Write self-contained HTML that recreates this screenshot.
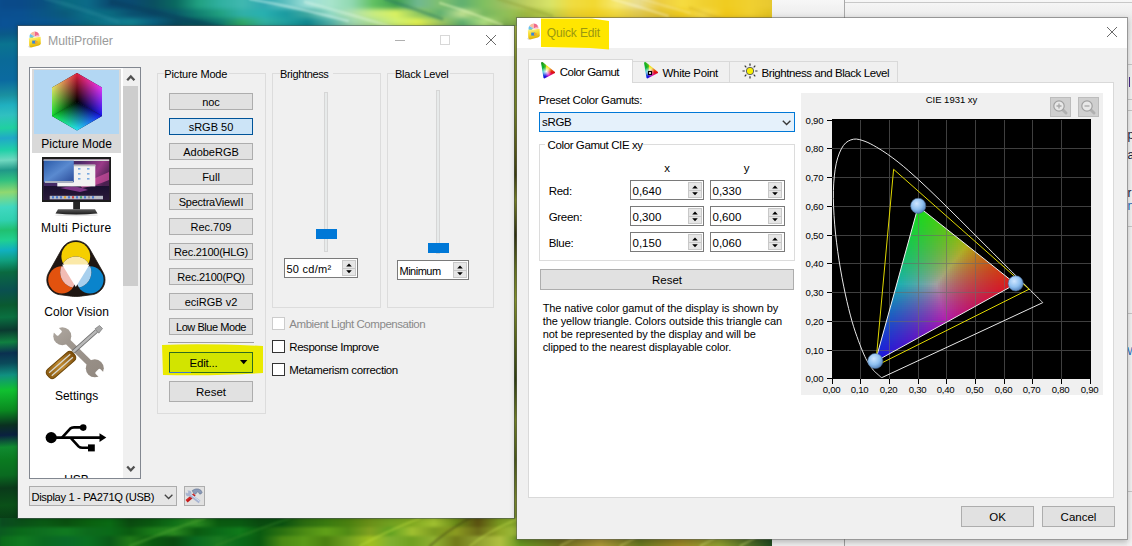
<!DOCTYPE html>
<html><head><meta charset="utf-8"><style>
html,body{margin:0;padding:0;}
body{width:1132px;height:546px;position:relative;overflow:hidden;background:#f0f0f0;font-family:"Liberation Sans", sans-serif;}
.a{position:absolute;}
.t{position:absolute;white-space:nowrap;font-family:"Liberation Sans", sans-serif;}
svg{overflow:visible;}
</style></head><body>
<svg class="a" style="left:0;top:0" width="1132" height="546"><defs><linearGradient id="wt" gradientUnits="userSpaceOnUse" x1="0" y1="13" x2="65.99" y2="-202.85"><stop offset="0.0000" stop-color="#0a4f92"/><stop offset="0.0389" stop-color="#0a5590"/><stop offset="0.0712" stop-color="#0a6082"/><stop offset="0.1036" stop-color="#0d6e84"/><stop offset="0.1295" stop-color="#0a5a7a"/><stop offset="0.1554" stop-color="#0a5074"/><stop offset="0.1878" stop-color="#0a4a66"/><stop offset="0.2202" stop-color="#0b5a68"/><stop offset="0.2461" stop-color="#108070"/><stop offset="0.2720" stop-color="#18a07a"/><stop offset="0.2915" stop-color="#22a88a"/><stop offset="0.3135" stop-color="#30b0a8"/><stop offset="0.3394" stop-color="#28b0b0"/><stop offset="0.3653" stop-color="#1e9ea0"/><stop offset="0.3886" stop-color="#44b2a8"/><stop offset="0.4093" stop-color="#84d2c2"/><stop offset="0.4301" stop-color="#98dcc4"/><stop offset="0.4482" stop-color="#c4ecc4"/><stop offset="0.4689" stop-color="#a8e092"/><stop offset="0.4922" stop-color="#c8ec72"/><stop offset="0.5130" stop-color="#e0f062"/><stop offset="0.5311" stop-color="#c2e062"/><stop offset="0.5505" stop-color="#70b872"/><stop offset="0.5699" stop-color="#68b690"/><stop offset="0.5894" stop-color="#a8d872"/><stop offset="0.6088" stop-color="#72b052"/><stop offset="0.6347" stop-color="#90c052"/><stop offset="0.6606" stop-color="#b0c84a"/><stop offset="0.6865" stop-color="#c8d052"/><stop offset="0.7098" stop-color="#dce070"/><stop offset="0.7254" stop-color="#d8e058"/><stop offset="0.7448" stop-color="#f0e040"/><stop offset="0.7772" stop-color="#f0d832"/><stop offset="0.8135" stop-color="#f0e060"/><stop offset="0.8355" stop-color="#e8e080"/><stop offset="0.8575" stop-color="#e4c842"/><stop offset="0.8938" stop-color="#f6e050"/><stop offset="0.9326" stop-color="#f0d020"/><stop offset="0.9715" stop-color="#f2d634"/><stop offset="1.0000" stop-color="#e0c020"/></linearGradient><linearGradient id="wl" gradientUnits="userSpaceOnUse" x1="9" y1="26" x2="34.71" y2="516.65"><stop offset="0.0000" stop-color="#0a5294"/><stop offset="0.0163" stop-color="#0a5a88"/><stop offset="0.0366" stop-color="#0a7490"/><stop offset="0.0691" stop-color="#0a6a98"/><stop offset="0.1098" stop-color="#0b6aa0"/><stop offset="0.1402" stop-color="#1a90a0"/><stop offset="0.1606" stop-color="#20b0c0"/><stop offset="0.1809" stop-color="#30c0c0"/><stop offset="0.2073" stop-color="#20d0a0"/><stop offset="0.2276" stop-color="#20a8c8"/><stop offset="0.2520" stop-color="#20d0a8"/><stop offset="0.2724" stop-color="#70d8c0"/><stop offset="0.2927" stop-color="#209888"/><stop offset="0.3130" stop-color="#30c080"/><stop offset="0.3374" stop-color="#90d870"/><stop offset="0.3679" stop-color="#40d8c0"/><stop offset="0.3943" stop-color="#30d0b0"/><stop offset="0.4146" stop-color="#20c070"/><stop offset="0.4350" stop-color="#20d090"/><stop offset="0.4553" stop-color="#10b0c0"/><stop offset="0.4756" stop-color="#10a080"/><stop offset="0.5000" stop-color="#0a6a40"/><stop offset="0.5366" stop-color="#0a5050"/><stop offset="0.5671" stop-color="#0a5a30"/><stop offset="0.5915" stop-color="#0a7040"/><stop offset="0.6179" stop-color="#0a3a30"/><stop offset="0.6423" stop-color="#108040"/><stop offset="0.6646" stop-color="#0a3050"/><stop offset="0.6850" stop-color="#0a4a5a"/><stop offset="0.7093" stop-color="#109080"/><stop offset="0.7398" stop-color="#10c030"/><stop offset="0.7805" stop-color="#0a8a20"/><stop offset="0.8110" stop-color="#0a3020"/><stop offset="0.8313" stop-color="#0a2040"/><stop offset="0.8557" stop-color="#108a30"/><stop offset="0.8821" stop-color="#0a7a20"/><stop offset="0.9126" stop-color="#0a6a20"/><stop offset="0.9390" stop-color="#0a3a1a"/><stop offset="0.9736" stop-color="#0a5018"/><stop offset="1.0000" stop-color="#083e16"/></linearGradient><linearGradient id="wb" gradientUnits="userSpaceOnUse" x1="0" y1="530" x2="193.00" y2="864.29"><stop offset="0.0000" stop-color="#083e16"/><stop offset="0.0518" stop-color="#0a5a1a"/><stop offset="0.1036" stop-color="#0e6a1e"/><stop offset="0.1425" stop-color="#0a4a12"/><stop offset="0.1943" stop-color="#0a5212"/><stop offset="0.2267" stop-color="#1e7a1a"/><stop offset="0.2591" stop-color="#0a4210"/><stop offset="0.2979" stop-color="#0a5010"/><stop offset="0.3238" stop-color="#146014"/><stop offset="0.3756" stop-color="#2a6a10"/><stop offset="0.4275" stop-color="#5a9a18"/><stop offset="0.4793" stop-color="#7aaa20"/><stop offset="0.5181" stop-color="#a0c020"/><stop offset="0.5570" stop-color="#70a020"/><stop offset="0.5959" stop-color="#a0b820"/><stop offset="0.6282" stop-color="#4a4a10"/><stop offset="0.6541" stop-color="#8ab020"/><stop offset="0.6865" stop-color="#70a020"/><stop offset="0.7254" stop-color="#807020"/><stop offset="0.7772" stop-color="#a09030"/><stop offset="0.8290" stop-color="#506a20"/><stop offset="0.8808" stop-color="#a08a28"/><stop offset="0.9326" stop-color="#90a030"/><stop offset="0.9845" stop-color="#405a20"/><stop offset="1.0000" stop-color="#204020"/></linearGradient><linearGradient id="wm" gradientUnits="userSpaceOnUse" x1="515" y1="26" x2="515.00" y2="540.00"><stop offset="0.0000" stop-color="#b8c848"/><stop offset="0.0661" stop-color="#98a830"/><stop offset="0.1634" stop-color="#8a9a28"/><stop offset="0.2412" stop-color="#6a6a18"/><stop offset="0.2899" stop-color="#4a4a10"/><stop offset="0.3385" stop-color="#909a28"/><stop offset="0.4066" stop-color="#3a3a10"/><stop offset="0.4747" stop-color="#7a8a20"/><stop offset="0.5331" stop-color="#a0b030"/><stop offset="0.6109" stop-color="#6a7a18"/><stop offset="0.6887" stop-color="#3a4a10"/><stop offset="0.7665" stop-color="#8a9a28"/><stop offset="0.8444" stop-color="#5a6a18"/><stop offset="0.9222" stop-color="#90a030"/><stop offset="1.0000" stop-color="#7a9a28"/></linearGradient><linearGradient id="wts" gradientUnits="userSpaceOnUse" x1="0" y1="13" x2="47" y2="-174" spreadMethod="repeat"><stop offset="0" stop-color="#fff" stop-opacity="0"/><stop offset=".45" stop-color="#fff" stop-opacity="0"/><stop offset=".5" stop-color="#fff" stop-opacity=".18"/><stop offset=".55" stop-color="#fff" stop-opacity="0"/><stop offset="1" stop-color="#fff" stop-opacity="0"/></linearGradient></defs><rect x="0" y="26" width="18" height="492" fill="url(#wl)"/><rect x="510" y="518" width="10" height="22" fill="url(#wb)"/><rect x="510" y="26" width="10" height="492" fill="url(#wm)"/></svg>
<div class="a" style="left:0;top:0;width:772px;height:26px;overflow:hidden"><div class="a" style="left:-10px;top:-10px;width:792px;height:50px;filter:blur(2px)">
<div class="a" style="left:10px;top:0;width:772px;height:18.5px;background:linear-gradient(90deg,#0a4a8a 0px,#0a4a88 22px,#0a5080 44px,#0a6a80 66px,#0b6a88 88px,#0a4a70 110px,#0a4a70 132px,#0a5060 154px,#0a6a60 176px,#20a080 198px,#30b0a0 220px,#40b8b0 242px,#30a8b0 264px,#60c0c0 286px,#a0e0d8 308px,#a8e4cc 330px,#90d8b0 352px,#60c060 374px,#40a050 396px,#70b890 418px,#80c070 440px,#60b070 462px,#80c060 484px,#a0c060 506px,#c0d060 528px,#d8e468 550px,#f0dc40 572px,#f2d830 594px,#f6e870 616px,#e8dc90 638px,#eccc40 660px,#f6dc40 682px,#f0d030 704px,#f0cc20 726px,#f0d030 750px,#e8c830 772px)"></div>
<div class="a" style="left:10px;top:18.5px;width:772px;height:9px;background:linear-gradient(90deg,#0a4f90 0px,#0a5090 22px,#0a5585 44px,#0a5a7a 66px,#0b7088 88px,#0a6a80 110px,#0a5070 132px,#0a4a68 154px,#0a5a68 176px,#108070 198px,#20a080 220px,#30b0a8 242px,#28b0b0 264px,#1a9aa0 286px,#40a8a0 308px,#90d8c4 330px,#b0e0b0 352px,#c8ec80 374px,#d8f060 396px,#90c860 418px,#60b070 440px,#c0e090 462px,#78b860 484px,#90c058 506px,#a0b840 528px,#c0d050 550px,#e8d030 572px,#f0d020 594px,#f0d840 616px,#e0c850 638px,#e0c030 660px,#f0cc20 682px,#f6dc50 704px,#f0c818 726px,#f0d030 750px,#e0c020 772px)"></div>
<div class="a" style="left:10px;top:27.5px;width:772px;height:22.5px;background:linear-gradient(90deg,#0a5296 0px,#0a5292 22px,#0a5590 44px,#0a5a88 66px,#0a6a80 88px,#107a90 110px,#108090 132px,#0a6080 154px,#0a4a60 176px,#0a5a60 198px,#107a70 220px,#30a868 242px,#30b0a0 264px,#20a0a0 286px,#108890 308px,#50b0a8 330px,#a0d8b0 352px,#b0e090 374px,#d0f070 396px,#e0f050 418px,#a0c860 440px,#60b070 462px,#b0e080 484px,#80b050 506px,#a0c050 528px,#b0c040 550px,#e0c830 572px,#f0d020 594px,#f0cc20 616px,#e8c830 638px,#d8b830 660px,#e0b820 682px,#f0c820 704px,#f0c818 726px,#e8c018 750px,#d8b818 772px)"></div>
<div class="a" style="left:0;top:0;width:10px;height:50px;background:#0a4f90"></div>
<div class="a" style="left:782px;top:0;width:10px;height:50px;background:#e0c830"></div>
</div></div>
<svg class="a" style="left:0;top:0;filter:blur(0.9px)" width="772" height="26" viewBox="0 0 772 26">
<g fill="none" stroke-linecap="round">
<path d="M45 -2 Q80 8 118 22" stroke="#2a8a9a" stroke-width="4" opacity=".35"/>
<path d="M112 2 Q160 14 222 28" stroke="#083a58" stroke-width="5" opacity=".35"/>
<path d="M250 -1 Q300 8 348 21" stroke="#e8fff8" stroke-width="2" opacity=".55"/>
<path d="M305 2 Q350 14 395 28" stroke="#f0fff0" stroke-width="2.5" opacity=".35"/>
<path d="M385 -1 Q412 8 442 19" stroke="#2a7a60" stroke-width="3" opacity=".45"/>
<path d="M440 3 Q470 12 502 25" stroke="#f0ffc0" stroke-width="2" opacity=".5"/>
<path d="M498 -1 Q525 7 552 16" stroke="#8a9a30" stroke-width="3" opacity=".35"/>
<path d="M612 -1 Q640 7 668 16" stroke="#fffff0" stroke-width="2" opacity=".4"/>
<path d="M642 -1 Q665 6 690 13" stroke="#fffff0" stroke-width="1.5" opacity=".3"/>
<path d="M690 8 Q720 18 750 30" stroke="#c8a010" stroke-width="3" opacity=".25"/>
</g></svg>
<div class="a" style="left:0;top:518px;width:772px;height:28px;overflow:hidden"><div class="a" style="left:-10px;top:-10px;width:792px;height:50px;filter:blur(1.8px)">
<div class="a" style="left:10px;top:0;width:772px;height:18.5px;background:linear-gradient(90deg,#0a4a20 0px,#0a5018 22px,#0a5a14 44px,#0a5010 66px,#0a6010 88px,#0a6a14 110px,#0a4a10 130px,#0a5810 152px,#107018 174px,#2a8a20 196px,#0a5a10 218px,#0a5a12 240px,#0a4a10 260px,#0a5010 282px,#2a6a10 304px,#3a7a10 326px,#4a8010 348px,#6a9018 370px,#70a020 390px,#80a820 412px,#a0c030 434px,#6a8a18 456px,#5a5010 478px,#7a9a20 500px,#90b030 520px,#707a20 560px,#a08a30 600px,#6a7a20 640px,#a09030 680px,#90a030 720px,#3a6a28 772px)"></div>
<div class="a" style="left:10px;top:18.5px;width:772px;height:9px;background:linear-gradient(90deg,#0a5a20 0px,#0a6a1a 22px,#0e7020 44px,#107a20 66px,#0c6a1c 88px,#0a6a18 110px,#0a5a10 130px,#1a7a18 152px,#2a8a20 174px,#0a5a10 196px,#0a6a18 218px,#107a1a 240px,#0a5a10 260px,#2a7010 282px,#4a8a14 304px,#60a018 326px,#508a14 348px,#80a020 370px,#60a020 390px,#a0c030 412px,#7a9a20 434px,#8a9a20 456px,#6a6a18 478px,#90a828 500px,#a0c040 520px,#807a20 560px,#a09030 600px,#7a8a28 640px,#b09a30 680px,#a0a830 720px,#2a5a28 772px)"></div>
<div class="a" style="left:10px;top:27.5px;width:772px;height:22.5px;background:linear-gradient(90deg,#0a6a1a 0px,#107a20 22px,#0a6a20 44px,#0a6a28 66px,#0a7020 88px,#0a5a18 110px,#207a18 130px,#0a5a10 152px,#0a4a10 174px,#0a6a20 196px,#1a7a20 218px,#0a6a18 240px,#0a5a10 260px,#4a8a14 282px,#5a9a18 304px,#4a8010 326px,#70a020 348px,#a0c020 370px,#80b030 390px,#70a020 412px,#90b030 434px,#707a18 456px,#90a030 478px,#b0c040 500px,#6a9a20 520px,#707020 560px,#b09a38 600px,#6a7a20 640px,#a08a28 680px,#90a030 720px,#204a20 772px)"></div>
<div class="a" style="left:0;top:0;width:10px;height:50px;background:#0a5a20"></div>
<div class="a" style="left:782px;top:0;width:10px;height:50px;background:#2a5a28"></div>
</div></div>
<svg class="a" style="left:0;top:518px;filter:blur(0.8px)" width="772" height="28" viewBox="0 518 772 28">
<g fill="none" stroke-linecap="round">
<path d="M130 546 Q165 532 205 518" stroke="#4aa030" stroke-width="2.5" opacity=".5"/>
<path d="M215 546 Q250 532 290 518" stroke="#3a8a28" stroke-width="2" opacity=".4"/>
<path d="M360 546 Q385 532 420 518" stroke="#c0e040" stroke-width="2" opacity=".45"/>
<path d="M430 546 Q445 532 470 518" stroke="#3a3a10" stroke-width="2.5" opacity=".4"/>
<path d="M470 546 Q490 530 520 518" stroke="#c8e050" stroke-width="2" opacity=".4"/>
<path d="M560 546 L575 538" stroke="#e0e070" stroke-width="1.5" opacity=".5"/>
<path d="M620 546 L635 538" stroke="#e0e070" stroke-width="1.5" opacity=".5"/>
<path d="M700 546 L715 538" stroke="#e0f080" stroke-width="1.5" opacity=".5"/>
<path d="M740 546 L755 538" stroke="#e0f080" stroke-width="1.5" opacity=".5"/>
</g></svg>
<div class="a" style="left:772px;top:0px;width:360px;height:546px;background:linear-gradient(180deg,#f7f7f7 0px,#ececec 17px,#f0f0f0 40px,#f0f0f0 546px);"></div>
<div class="a" style="left:844px;top:0px;width:1px;height:30px;background:#a8a8a8;"></div>
<div class="a" style="left:845px;top:2px;width:287px;height:1px;background:#c8c8c8;"></div>
<div class="a" style="left:1127px;top:40px;width:5px;height:506px;background:#f3f3f3;"></div>
<div class="a" style="left:1128px;top:64px;width:4px;height:1px;background:#c8c8c8;"></div>
<div class="a" style="left:1128px;top:99px;width:4px;height:1px;background:#c8c8c8;"></div>
<div class="a" style="left:1128px;top:110px;width:4px;height:1px;background:#c8c8c8;"></div>
<div class="a" style="left:1128px;top:226px;width:4px;height:1px;background:#c8c8c8;"></div>
<div class="a" style="left:1128px;top:313px;width:4px;height:1px;background:#c8c8c8;"></div>
<div class="a" style="left:1128px;top:491px;width:4px;height:1px;background:#c8c8c8;"></div>
<div class="a" style="left:1129px;top:77px;width:1px;height:10px;background:#4a2a8a;"></div>
<div class="a" style="left:1128px;top:120px;width:4px;height:100px;overflow:hidden"><div class="t" style="left:-0.5px;top:7.94px;font-size:12px;line-height:14px;color:#1a2040;">p</div><div class="t" style="left:-0.5px;top:27.94px;font-size:12px;line-height:14px;color:#1a2040;">a</div><div class="t" style="left:-0.5px;top:65.94px;font-size:12px;line-height:14px;color:#1a2040;">r</div><div class="t" style="left:-0.5px;top:78.94px;font-size:12px;line-height:14px;color:#1a6ac0;">n</div></div>
<div class="a" style="left:1128px;top:345px;width:4px;height:13px;overflow:hidden"><div class="t" style="left:-1px;top:0;font-size:11px;line-height:12px;color:#1a6ac0">W</div></div>
<div class="a" style="left:844px;top:530px;width:1px;height:16px;background:#a0a0a0;"></div>
<div class="a" style="left:17px;top:25px;width:498px;height:494px;background:rgba(70,80,80,.6);box-shadow:0 0 4px rgba(0,0,0,.2);"></div>
<div class="a" style="left:18px;top:26px;width:496px;height:492px;background:#f0f0f0;"></div>
<div class="a" style="left:18px;top:26px;width:496px;height:30px;background:#ffffff;"></div>
<svg class="a" style="left:27px;top:31px" width="15" height="17" viewBox="0 0 15 17">
<defs><linearGradient id="fy27" x1="0" y1="0" x2="0.3" y2="1"><stop offset="0" stop-color="#fff59a"/><stop offset=".5" stop-color="#f8dc30"/><stop offset="1" stop-color="#e0b000"/></linearGradient></defs>
<path d="M7.5 5.5 L7.5 0.5 A5 5 0 0 1 12.2 3.6Z" fill="#f06a8a"/>
<path d="M7.5 5.5 L12.2 3.6 A5 5 0 0 1 12.5 5.5Z" fill="#f8a0b0"/>
<path d="M7.5 5.5 L7.5 0.5 A5 5 0 0 0 3.2 3Z" fill="#f8c0a0"/>
<path d="M7.5 5.5 L3.2 3 A5 5 0 0 0 2.6 6.5Z" fill="#6ac0f0"/>
<path d="M7.5 5.5 L2.6 6.5 A5 5 0 0 0 3.5 8.5Z" fill="#80d080"/>
<path d="M1.8 7.2 L13.6 5.8 L13.8 12.6 Q13.6 14 11.8 14.6 L4.2 16.4 Q2.6 16.6 2.3 15Z" fill="url(#fy27)"/>
<path d="M2.3 15 Q2.6 16.6 4.2 16.4 L3 16.8 Q1.2 16.6 1.4 15.2Z" fill="#b0b0b0" opacity=".6"/>
<rect x="5.2" y="9.6" width="4" height="3" fill="#3a86d8"/><rect x="8" y="10" width="2.6" height="2.6" fill="#f0a828"/>
</svg>
<div class="t" style="left:48px;top:34.34px;font-size:12.3px;line-height:14px;color:#9a9a9a;">MultiProfiler</div>
<div class="a" style="left:395px;top:40px;width:10px;height:1px;background:#b0b0b0;"></div>
<div class="a" style="left:440px;top:35px;width:10px;height:10px;border:1px solid #d8d8d8;box-sizing:border-box;"></div>
<svg class="a" style="left:486px;top:35px" width="10" height="10"><path d="M0 0L10 10M10 0L0 10" stroke="#6a6a6a" stroke-width="1"/></svg>
<div class="a" style="left:29px;top:67px;width:112px;height:412px;background:#fff;border:1px solid #828790;box-sizing:border-box;"></div>
<div class="a" style="left:123px;top:68px;width:17px;height:410px;background:#f0f0f0;"></div>
<div class="a" style="left:123px;top:86px;width:15px;height:200px;background:#cdcdcd;"></div>
<svg class="a" style="left:126px;top:74px" width="10" height="8"><path d="M1.2 6.2L4.8 2.4L8.4 6.2" stroke="#505050" stroke-width="2.3" fill="none"/></svg>
<svg class="a" style="left:126px;top:465px" width="10" height="8"><path d="M1.2 1.4L4.8 5.4L8.4 1.4" stroke="#505050" stroke-width="2.3" fill="none"/></svg>
<div class="a" style="left:32px;top:69px;width:89px;height:84px;background:#d9d9d9;"></div>
<div class="a" style="left:34px;top:70px;width:85px;height:64px;background:#b3d7f3;"></div>
<svg class="a" style="left:0;top:0" width="140" height="140"><defs><linearGradient id="hx1" gradientUnits="userSpaceOnUse" x1="77.00" y1="101.75" x2="64.58" y2="80.14"><stop offset="0" stop-color="#000"/><stop offset="1" stop-color="#e02040"/></linearGradient><linearGradient id="hx2" gradientUnits="userSpaceOnUse" x1="77.00" y1="101.75" x2="52.00" y2="101.75"><stop offset="0" stop-color="#000"/><stop offset="1" stop-color="#10e030"/></linearGradient><linearGradient id="hx3" gradientUnits="userSpaceOnUse" x1="77.00" y1="101.75" x2="89.42" y2="80.14"><stop offset="0" stop-color="#000"/><stop offset="1" stop-color="#e02040"/></linearGradient><linearGradient id="hx4" gradientUnits="userSpaceOnUse" x1="77.00" y1="101.75" x2="102.00" y2="101.75"><stop offset="0" stop-color="#000"/><stop offset="1" stop-color="#1818f0"/></linearGradient><linearGradient id="hx5" gradientUnits="userSpaceOnUse" x1="77.00" y1="101.75" x2="64.58" y2="123.36"><stop offset="0" stop-color="#000"/><stop offset="1" stop-color="#10e030"/></linearGradient><linearGradient id="hx6" gradientUnits="userSpaceOnUse" x1="77.00" y1="101.75" x2="89.42" y2="123.36"><stop offset="0" stop-color="#000"/><stop offset="1" stop-color="#1818f0"/></linearGradient></defs><g style="isolation:isolate"><polygon points="77.00,101.75 77.00,73.00 52.00,87.38 52.00,116.12" fill="url(#hx1)"/><polygon points="77.00,101.75 77.00,73.00 52.00,87.38 52.00,116.12" fill="url(#hx2)" style="mix-blend-mode:screen"/><polygon points="77.00,101.75 77.00,73.00 102.00,87.38 102.00,116.12" fill="url(#hx3)"/><polygon points="77.00,101.75 77.00,73.00 102.00,87.38 102.00,116.12" fill="url(#hx4)" style="mix-blend-mode:screen"/><polygon points="77.00,101.75 52.00,116.12 77.00,130.50 102.00,116.12" fill="url(#hx5)"/><polygon points="77.00,101.75 52.00,116.12 77.00,130.50 102.00,116.12" fill="url(#hx6)" style="mix-blend-mode:screen"/></g></svg>
<div class="t" style="left:26.599999999999994px;width:100px;text-align:center;top:136.94px;font-size:12px;line-height:14px;color:#000;">Picture Mode</div>
<svg class="a" style="left:38px;top:153px" width="76" height="64" viewBox="38 153 76 64">
<defs>
<linearGradient id="mbg" x1="0" y1="0" x2="1" y2="0.4"><stop offset="0" stop-color="#3a2a60"/><stop offset=".5" stop-color="#4a2a68"/><stop offset=".8" stop-color="#9a3a88"/><stop offset="1" stop-color="#4a2050"/></linearGradient>
<linearGradient id="mbl" x1="0" y1="0" x2="1" y2="1"><stop offset="0" stop-color="#2a5aa8"/><stop offset=".5" stop-color="#5a8ad0"/><stop offset="1" stop-color="#2a4a98"/></linearGradient>
<linearGradient id="mdk" x1="0" y1="0" x2="0" y2="1"><stop offset="0" stop-color="#1a1030"/><stop offset="1" stop-color="#2a1a3a"/></linearGradient>
<linearGradient id="mbase" x1="0" y1="0" x2="0" y2="1"><stop offset="0" stop-color="#5a5a5a"/><stop offset="1" stop-color="#1a1a1a"/></linearGradient>
</defs>
<rect x="42" y="157" width="69" height="45" fill="#1c1c1c"/>
<rect x="43.6" y="159.4" width="65.6" height="40.5" fill="url(#mbg)"/>
<rect x="43.6" y="186" width="65.6" height="14" fill="url(#mdk)"/>
<path d="M80 185 Q95 178 109 172 L109 180 Q95 186 82 188Z" fill="#d050a0" opacity=".7"/>
<path d="M60 188 Q75 184 88 190 L80 192Z" fill="#c050c0" opacity=".6"/>
<rect x="43.6" y="159.4" width="65.6" height="1.6" fill="#d8d8d8"/>
<rect x="57.3" y="164.7" width="38" height="21.7" fill="#f2f2f2"/>
<rect x="73.8" y="164.7" width="21.6" height="1.6" fill="#b8b8b8"/>
<g fill="#7aaae0"><rect x="78" y="168" width="2.5" height="1.6"/><rect x="87" y="168" width="2.5" height="1.6"/><rect x="78" y="173" width="2.5" height="1.6"/><rect x="87" y="173" width="2.5" height="1.6"/><rect x="78" y="178" width="2.5" height="1.6"/><rect x="87" y="178" width="2.5" height="1.6"/></g>
<rect x="43.9" y="160.6" width="29.9" height="21.7" fill="url(#mbl)"/>
<rect x="45" y="181" width="28" height="2" fill="#a8b0c0"/>
<rect x="49.7" y="195.8" width="53.3" height="3.5" fill="#b8bcc8"/>
<g fill="#4a7ad0"><rect x="52" y="196.2" width="2" height="2.2"/><rect x="56" y="196.2" width="2" height="2.2"/><rect x="60" y="196.2" width="2" height="2.2"/><rect x="64" y="196.2" width="2" height="2.2" fill="#e0a030"/><rect x="68" y="196.2" width="2" height="2.2"/><rect x="72" y="196.2" width="2" height="2.2" fill="#d04040"/><rect x="76" y="196.2" width="2" height="2.2"/><rect x="80" y="196.2" width="2" height="2.2" fill="#40a060"/><rect x="84" y="196.2" width="2" height="2.2"/><rect x="88" y="196.2" width="2" height="2.2" fill="#909090"/><rect x="92" y="196.2" width="2" height="2.2"/><rect x="96" y="196.2" width="2" height="2.2" fill="#c0c0c0"/></g>
<rect x="73.2" y="201.7" width="6.8" height="7.8" fill="#262626"/>
<path d="M58 209.3 L95 209.3 L97.5 213.5 Q76 215.5 55.5 213.5Z" fill="url(#mbase)"/>
<ellipse cx="76.5" cy="215" rx="22" ry="1.2" fill="#000" opacity=".12"/>
</svg>
<div class="t" style="left:26.299999999999997px;width:100px;text-align:center;top:221.14px;font-size:12px;line-height:14px;color:#000;letter-spacing:0.35px;">Multi Picture</div>
<svg class="a" style="left:0;top:0" width="140" height="320"><defs><clipPath id="cvc"><circle cx="75.8" cy="272.2" r="15.6"/></clipPath></defs><polygon points="46.8,279.8 46.9,278.5 47.0,277.2 47.3,275.9 47.7,274.7 48.2,273.5 48.8,272.3 62.1,248.6 62.9,247.4 63.7,246.3 64.6,245.3 65.6,244.4 66.7,243.6 67.9,242.8 69.1,242.2 70.4,241.7 71.7,241.2 73.1,240.9 74.4,240.8 75.8,240.7 77.2,240.8 78.5,240.9 79.9,241.2 81.2,241.7 82.5,242.2 83.7,242.8 84.9,243.6 86.0,244.4 87.0,245.3 87.9,246.3 88.7,247.4 89.5,248.6 103.0,272.3 103.6,273.5 104.1,274.7 104.5,275.9 104.8,277.2 104.9,278.5 105.0,279.8 104.9,281.1 104.8,282.4 104.5,283.7 104.1,284.9 103.6,286.1 103.0,287.3 102.3,288.4 101.5,289.4 100.6,290.4 99.6,291.3 98.6,292.1 97.5,292.8 96.3,293.4 95.1,293.9 93.9,294.3 92.6,294.6 82.6,295.9 80.4,296.2 78.2,296.4 75.9,296.4 73.6,296.4 71.4,296.2 69.2,295.9 59.2,294.6 57.9,294.3 56.7,293.9 55.5,293.4 54.3,292.8 53.2,292.1 52.2,291.3 51.2,290.4 50.3,289.4 49.5,288.4 48.8,287.3 48.2,286.1 47.7,284.9 47.3,283.7 47.0,282.4 46.9,281.1" fill="#1e1612" stroke="#1e1612" stroke-width="0.8" stroke-linejoin="round"/><circle cx="75.8" cy="256.5" r="14.4" fill="#f5cf00"/><circle cx="61.8" cy="279.8" r="13.6" fill="#e2520e"/><circle cx="90.0" cy="279.8" r="13.6" fill="#0a84cc"/><g clip-path="url(#cvc)"><rect x="55" y="250" width="42" height="45" fill="#1e1612"/><circle cx="75.8" cy="256.5" r="14.4" fill="#fbe9a8"/><circle cx="61.8" cy="279.8" r="13.6" fill="#f2bcb4"/><circle cx="90.0" cy="279.8" r="13.6" fill="#a8d0ee"/><path d="M62 264.4 L89.6 264.4 L75.8 287Z" fill="#fff"/></g></svg>
<div class="t" style="left:26.599999999999994px;width:100px;text-align:center;top:305.34px;font-size:12px;line-height:14px;color:#000;">Color Vision</div>
<svg class="a" style="left:0;top:300px" width="140" height="100" viewBox="0 300 140 100">
<defs>
<linearGradient id="wrg" x1="0" y1="0" x2="1" y2="1"><stop offset="0" stop-color="#d8d4ce"/><stop offset=".45" stop-color="#a09890"/><stop offset="1" stop-color="#857b72"/></linearGradient>
<mask id="wmask" maskUnits="userSpaceOnUse" x="0" y="300" width="140" height="100">
<rect x="0" y="300" width="140" height="100" fill="#000"/>
<path d="M62.5 336.5 L94.5 368" stroke="#fff" stroke-width="6.2"/>
<circle cx="62.3" cy="336.2" r="9" fill="#fff"/>
<circle cx="94.8" cy="368.3" r="9" fill="#fff"/>
<g transform="rotate(-45 62.3 336.2)"><rect x="58.9" y="324" width="6.8" height="9" rx="1.5" fill="#000"/></g>
<g transform="rotate(-45 94.8 368.3)"><rect x="91.4" y="371.5" width="6.8" height="9" rx="1.5" fill="#000"/></g>
</mask>
<linearGradient id="hdg" x1="0" y1="0" x2="1" y2="0"><stop offset="0" stop-color="#8a5a10"/><stop offset=".5" stop-color="#c08a30"/><stop offset="1" stop-color="#7a4a08"/></linearGradient>
</defs>
<rect x="0" y="300" width="140" height="100" fill="url(#wrg)" mask="url(#wmask)"/>
<path d="M73 352 L96.5 331" stroke="#6a6a6a" stroke-width="4.2"/>
<path d="M73 352 L96.5 331" stroke="#b8b8b8" stroke-width="2.4"/>
<path d="M95 328.8 L99.5 325.5 L102.5 328.5 L98.8 333.2Z" fill="#a8a8a8" stroke="#6a6a6a" stroke-width=".6"/>
<g transform="rotate(-41 61 365)">
<rect x="44" y="359.5" width="34" height="11" rx="4" fill="url(#hdg)" stroke="#6a4408" stroke-width="1"/>
<path d="M47 363 H75 M47 367 H75" stroke="#d8d8d0" stroke-width="1.3"/>
</g>
</svg>
<div class="t" style="left:26.599999999999994px;width:100px;text-align:center;top:388.64px;font-size:12px;line-height:14px;color:#000;">Settings</div>
<svg class="a" style="left:44px;top:422px" width="66" height="32" viewBox="0 0 66 32">
<circle cx="7.2" cy="15.6" r="5.6" fill="#000"/>
<path d="M7 15.6 L58 15.6" stroke="#000" stroke-width="2.7"/>
<path d="M55.5 11.2 L62.3 15.6 L55.5 20Z" fill="#000"/>
<path d="M18 15.6 L26 6.8 Q27.5 5.4 30 5.4 L39 5.4" stroke="#000" stroke-width="2.6" fill="none"/>
<circle cx="39.2" cy="5.6" r="3.3" fill="#000"/>
<path d="M26.5 15.6 L34.5 24.3 Q36 25.8 38.5 25.8 L45 25.8" stroke="#000" stroke-width="2.6" fill="none"/>
<rect x="44" y="22.4" width="6.8" height="7" fill="#000"/>
</svg>
<div class="a" style="left:30px;top:470px;width:93px;height:8px;overflow:hidden"><div class="t" style="left:0;width:93px;text-align:center;top:3px;font-size:12px;line-height:14px;color:#000">USB</div></div>
<div class="a" style="left:157px;top:73px;width:109px;height:341px;border:1px solid #dcdcdc;box-sizing:border-box;"></div><div class="a" style="left:163.5px;top:71px;width:65.5px;height:4px;background:#f0f0f0;"></div>
<div class="t" style="left:164.3px;top:68.29px;font-size:11px;line-height:13px;color:#000;letter-spacing:-0.15px;">Picture Mode</div>
<div class="a" style="left:169px;top:93px;width:84px;height:17px;background:#e1e1e1;border:1px solid #adadad;box-sizing:border-box;"></div><div class="t" style="left:169.0px;width:84px;text-align:center;top:95.79px;font-size:11px;line-height:13px;color:#000;">noc</div>
<div class="a" style="left:169px;top:118px;width:84px;height:17px;background:#cce4f7;border:1px solid #005499;box-sizing:border-box;"></div><div class="t" style="left:169.0px;width:84px;text-align:center;top:120.79px;font-size:11px;line-height:13px;color:#000;">sRGB 50</div>
<div class="a" style="left:169px;top:143px;width:84px;height:17px;background:#e1e1e1;border:1px solid #adadad;box-sizing:border-box;"></div><div class="t" style="left:169.0px;width:84px;text-align:center;top:145.79px;font-size:11px;line-height:13px;color:#000;">AdobeRGB</div>
<div class="a" style="left:169px;top:168px;width:84px;height:17px;background:#e1e1e1;border:1px solid #adadad;box-sizing:border-box;"></div><div class="t" style="left:169.0px;width:84px;text-align:center;top:170.79px;font-size:11px;line-height:13px;color:#000;">Full</div>
<div class="a" style="left:169px;top:193px;width:84px;height:17px;background:#e1e1e1;border:1px solid #adadad;box-sizing:border-box;"></div><div class="t" style="left:169.0px;width:84px;text-align:center;top:195.79px;font-size:11px;line-height:13px;color:#000;letter-spacing:-0.25px;">SpectraViewII</div>
<div class="a" style="left:169px;top:218px;width:84px;height:17px;background:#e1e1e1;border:1px solid #adadad;box-sizing:border-box;"></div><div class="t" style="left:169.0px;width:84px;text-align:center;top:220.79px;font-size:11px;line-height:13px;color:#000;">Rec.709</div>
<div class="a" style="left:169px;top:243px;width:84px;height:17px;background:#e1e1e1;border:1px solid #adadad;box-sizing:border-box;"></div><div class="t" style="left:169.0px;width:84px;text-align:center;top:245.79px;font-size:11px;line-height:13px;color:#000;letter-spacing:-0.25px;">Rec.2100(HLG)</div>
<div class="a" style="left:169px;top:268px;width:84px;height:17px;background:#e1e1e1;border:1px solid #adadad;box-sizing:border-box;"></div><div class="t" style="left:169.0px;width:84px;text-align:center;top:270.79px;font-size:11px;line-height:13px;color:#000;letter-spacing:-0.25px;">Rec.2100(PQ)</div>
<div class="a" style="left:169px;top:293px;width:84px;height:17px;background:#e1e1e1;border:1px solid #adadad;box-sizing:border-box;"></div><div class="t" style="left:169.0px;width:84px;text-align:center;top:295.79px;font-size:11px;line-height:13px;color:#000;">eciRGB v2</div>
<div class="a" style="left:169px;top:318px;width:84px;height:17px;background:#e1e1e1;border:1px solid #adadad;box-sizing:border-box;"></div><div class="t" style="left:169.0px;width:84px;text-align:center;top:320.79px;font-size:11px;line-height:13px;color:#000;letter-spacing:-0.45px;">Low Blue Mode</div>
<div class="a" style="left:168px;top:342px;width:86px;height:1px;background:#a0a0a0;"></div>
<svg class="a" style="left:161px;top:342px" width="103" height="34"><path d="M1 3 Q40 1 102 4 L102 31 Q60 34 2 33Z" fill="#eaea00"/></svg>
<div class="a" style="left:169px;top:352px;width:84px;height:21px;background:#d2e400;border:1px solid #2f6a20;box-sizing:border-box;"></div>
<div class="a" style="left:169px;top:372px;width:22px;height:1px;background:#3a78d0;"></div>
<div class="t" style="left:189.5px;top:357.12px;font-size:11.5px;line-height:13px;color:#000;letter-spacing:-0.2px;">Edit...</div>
<svg class="a" style="left:239.5px;top:360px" width="8" height="5"><path d="M0 0L7.4 0L3.7 4.2Z" fill="#000"/></svg>
<div class="a" style="left:169px;top:381px;width:84px;height:21px;background:#e1e1e1;border:1px solid #adadad;box-sizing:border-box;"></div><div class="t" style="left:169.0px;width:84px;text-align:center;top:385.62px;font-size:11.5px;line-height:13px;color:#000;">Reset</div>
<div class="a" style="left:272px;top:73px;width:109px;height:235px;border:1px solid #dcdcdc;box-sizing:border-box;"></div><div class="a" style="left:279.5px;top:71px;width:53.5px;height:4px;background:#f0f0f0;"></div>
<div class="t" style="left:280px;top:68.29px;font-size:11px;line-height:13px;color:#000;letter-spacing:-0.35px;">Brightness</div>
<div class="a" style="left:324px;top:92px;width:4px;height:160px;background:#e7eaea;border:1px solid #d6d6d6;box-sizing:border-box;"></div>
<div class="a" style="left:316px;top:229px;width:21px;height:10px;background:#0078d7;"></div>
<div class="a" style="left:284px;top:258px;width:74px;height:20px;background:#fff;border:1px solid #7a7a7a;box-sizing:border-box;"></div><div class="a" style="left:342px;top:260px;width:14px;height:16px;background:#e6e6e6;border:1px solid #c8c8c8;box-sizing:border-box;"></div><div class="a" style="left:343px;top:268px;width:12px;height:1px;background:#c8c8c8;"></div><svg class="a" style="left:345.0px;top:262px" width="8" height="12"><path d="M1.2 4.4L4 1.4000000000000004L6.8 4.4Z M1.2 8.2L4 11.2L6.8 8.2Z" fill="#000"/></svg><div class="t" style="left:286.5px;top:262.79px;font-size:11px;line-height:13px;color:#000;letter-spacing:0.25px;">50 cd/m²</div>
<div class="a" style="left:387px;top:73px;width:107px;height:235px;border:1px solid #dcdcdc;box-sizing:border-box;"></div><div class="a" style="left:394.5px;top:71px;width:55.5px;height:4px;background:#f0f0f0;"></div>
<div class="t" style="left:395px;top:68.29px;font-size:11px;line-height:13px;color:#000;letter-spacing:-0.25px;">Black Level</div>
<div class="a" style="left:436px;top:90px;width:4px;height:164px;background:#e7eaea;border:1px solid #d6d6d6;box-sizing:border-box;"></div>
<div class="a" style="left:428px;top:243px;width:21px;height:10px;background:#0078d7;"></div>
<div class="a" style="left:397px;top:260px;width:72px;height:20px;background:#fff;border:1px solid #7a7a7a;box-sizing:border-box;"></div><div class="a" style="left:453px;top:262px;width:14px;height:16px;background:#e6e6e6;border:1px solid #c8c8c8;box-sizing:border-box;"></div><div class="a" style="left:454px;top:270px;width:12px;height:1px;background:#c8c8c8;"></div><svg class="a" style="left:456.0px;top:264px" width="8" height="12"><path d="M1.2 4.4L4 1.4000000000000004L6.8 4.4Z M1.2 8.2L4 11.2L6.8 8.2Z" fill="#000"/></svg><div class="t" style="left:399.5px;top:264.79px;font-size:11px;line-height:13px;color:#000;letter-spacing:-0.5px;">Minimum</div>
<div class="a" style="left:272px;top:317px;width:13px;height:13px;background:#fff;border:1px solid #cccccc;box-sizing:border-box;"></div><div class="t" style="left:289.3px;top:318.12px;font-size:11.5px;line-height:13px;color:#8a8a8a;letter-spacing:-0.45px;">Ambient Light Compensation</div>
<div class="a" style="left:272px;top:340px;width:13px;height:13px;background:#fff;border:1px solid #333;box-sizing:border-box;"></div><div class="t" style="left:289.3px;top:341.12px;font-size:11.5px;line-height:13px;color:#000;letter-spacing:-0.45px;">Response Improve</div>
<div class="a" style="left:272px;top:363px;width:13px;height:13px;background:#fff;border:1px solid #333;box-sizing:border-box;"></div><div class="t" style="left:289.3px;top:364.12px;font-size:11.5px;line-height:13px;color:#000;letter-spacing:-0.4px;">Metamerism correction</div>
<div class="a" style="left:29px;top:486px;width:148px;height:20px;background:#e5e5e5;border:1px solid #acacac;box-sizing:border-box;"></div>
<div class="t" style="left:31.5px;top:490.72px;font-size:11.2px;line-height:13px;color:#000;letter-spacing:-0.35px;">Display 1 - PA271Q (USB)</div>
<svg class="a" style="left:163.5px;top:494px" width="10" height="6"><path d="M0.8 0.8L4.6 4.5L8.4 0.8" stroke="#444" stroke-width="1.3" fill="none"/></svg>
<div class="a" style="left:184px;top:486px;width:21px;height:20px;background:#e1e1e1;border:1px solid #adadad;box-sizing:border-box;"></div>
<svg class="a" style="left:182px;top:484px" width="26" height="24" viewBox="182 484 26 24">
<path d="M186.6 501.2 L194.6 494.6" stroke="#c01818" stroke-width="3.2" stroke-linecap="butt"/>
<path d="M186.2 500.8 L194.2 494.2" stroke="#f04040" stroke-width="1" opacity=".6"/>
<path d="M192.2 490.6 Q195 488.2 198.6 489 Q201.6 489.8 202.2 492.4 Q201.2 494.6 199.4 494 Q199.6 492.2 197.4 491.8 L195.6 494.2 L193.2 492.6Z" fill="#8a9ab8" stroke="#5a6a88" stroke-width=".5"/>
<mask id="tmk" maskUnits="userSpaceOnUse" x="182" y="484" width="26" height="24"><rect x="182" y="484" width="26" height="24" fill="#000"/>
<path d="M189.8 494.6 L199.6 502" stroke="#fff" stroke-width="3"/>
<circle cx="188.6" cy="493.4" r="2.9" fill="#fff"/>
<g transform="rotate(-45 188.6 493.4)"><rect x="187.6" y="489" width="2" height="3.4" fill="#000"/></g>
</mask>
<rect x="182" y="484" width="26" height="24" fill="#a8b4d0" mask="url(#tmk)"/>
<path d="M190.4 494.2 L199.8 501.4" stroke="#dce4f4" stroke-width="1" opacity=".9"/>
</svg>
<div class="a" style="left:516px;top:17px;width:612px;height:523px;background:rgba(80,80,80,.55);box-shadow:0 2px 6px rgba(0,0,0,.25);"></div>
<div class="a" style="left:517px;top:18px;width:610px;height:521px;background:#f0f0f0;"></div>
<div class="a" style="left:517px;top:18px;width:610px;height:30px;background:#ffffff;"></div>
<svg class="a" style="left:541px;top:18px" width="69" height="32"><path d="M0 0.5 L51 0.5 L68 3 L68 31.5 L49 30 L0 29Z" fill="#ffe600"/></svg>
<svg class="a" style="left:526px;top:23px" width="15" height="17" viewBox="0 0 15 17">
<defs><linearGradient id="fy526" x1="0" y1="0" x2="0.3" y2="1"><stop offset="0" stop-color="#fff59a"/><stop offset=".5" stop-color="#f8dc30"/><stop offset="1" stop-color="#e0b000"/></linearGradient></defs>
<path d="M7.5 5.5 L7.5 0.5 A5 5 0 0 1 12.2 3.6Z" fill="#f06a8a"/>
<path d="M7.5 5.5 L12.2 3.6 A5 5 0 0 1 12.5 5.5Z" fill="#f8a0b0"/>
<path d="M7.5 5.5 L7.5 0.5 A5 5 0 0 0 3.2 3Z" fill="#f8c0a0"/>
<path d="M7.5 5.5 L3.2 3 A5 5 0 0 0 2.6 6.5Z" fill="#6ac0f0"/>
<path d="M7.5 5.5 L2.6 6.5 A5 5 0 0 0 3.5 8.5Z" fill="#80d080"/>
<path d="M1.8 7.2 L13.6 5.8 L13.8 12.6 Q13.6 14 11.8 14.6 L4.2 16.4 Q2.6 16.6 2.3 15Z" fill="url(#fy526)"/>
<path d="M2.3 15 Q2.6 16.6 4.2 16.4 L3 16.8 Q1.2 16.6 1.4 15.2Z" fill="#b0b0b0" opacity=".6"/>
<rect x="5.2" y="9.6" width="4" height="3" fill="#3a86d8"/><rect x="8" y="10" width="2.6" height="2.6" fill="#f0a828"/>
</svg>
<div class="t" style="left:546.8px;top:26.14px;font-size:12px;line-height:14px;color:#9a9810;letter-spacing:-0.15px;">Quick Edit</div>
<svg class="a" style="left:1107px;top:27px" width="10" height="10"><path d="M0 0L10 10M10 0L0 10" stroke="#6a6a6a" stroke-width="1"/></svg>
<div class="a" style="left:528px;top:82px;width:586px;height:416px;background:#fff;border:1px solid #d9d9d9;box-sizing:border-box;"></div>
<div class="a" style="left:632px;top:61px;width:98px;height:22px;background:#f0f0f0;border:1px solid #d9d9d9;box-sizing:border-box;"></div>
<div class="a" style="left:729px;top:61px;width:169px;height:22px;background:#f0f0f0;border:1px solid #d9d9d9;box-sizing:border-box;"></div>
<div class="a" style="left:528px;top:59px;width:105px;height:24px;background:#fff;border:1px solid #d9d9d9;border-bottom:none;box-sizing:border-box;"></div>
<div class="a" style="left:540px;top:62px;width:16px;height:18px;clip-path:polygon(1px 0.5px,2.5px 0px,15px 10px,15px 11px,4.5px 16.5px,3.5px 16px);background:radial-gradient(circle at 6.5px 9.5px,rgba(255,255,255,.95) 0px,rgba(255,255,255,.5) 2.5px,rgba(255,255,255,0) 5px,rgba(0,0,0,0) 7px,rgba(0,0,0,.35) 12px),conic-gradient(from 0deg at 6.5px 9.5px,#f0e020 33deg,#e01010 97deg,#e010c0 147deg,#1010e0 197deg,#10c0d0 263deg,#10b020 329deg,#f0e020 393deg);"></div>
<div class="t" style="left:559.8px;top:65.82px;font-size:11.5px;line-height:13px;color:#000;letter-spacing:-0.55px;">Color Gamut</div>
<div class="a" style="left:643px;top:62px;width:16px;height:18px;clip-path:polygon(1px 0.5px,2.5px 0px,15px 10px,15px 11px,4.5px 16.5px,3.5px 16px);background:radial-gradient(circle at 6.5px 9.5px,rgba(255,255,255,.95) 0px,rgba(255,255,255,.5) 2.5px,rgba(255,255,255,0) 5px,rgba(0,0,0,0) 7px,rgba(0,0,0,0) 12px),conic-gradient(from 0deg at 6.5px 9.5px,#f0e020 33deg,#e01010 97deg,#e010c0 147deg,#1010e0 197deg,#10c0d0 263deg,#10b020 329deg,#f0e020 393deg);"></div><svg class="a" style="left:648px;top:71px" width="5" height="5"><rect x="0.5" y="0.5" width="3" height="3" fill="#fff" stroke="#000" stroke-width="1.2"/></svg>
<div class="t" style="left:662.5px;top:67.12px;font-size:11.5px;line-height:13px;color:#000;letter-spacing:-0.3px;">White Point</div>
<svg class="a" style="left:742px;top:63px" width="16" height="16" viewBox="0 0 16 16">
<circle cx="8" cy="8" r="3.7" fill="#f8f000" stroke="#3a3a6a" stroke-width=".8"/>
<path d="M8 0.5V2.8M8 13.2V15.5M0.5 8H2.8M13.2 8H15.5M2.7 2.7L4.3 4.3M11.7 11.7L13.3 13.3M2.7 13.3L4.3 11.7M11.7 4.3L13.3 2.7" stroke="#303030" stroke-width="1.2"/>
</svg>
<div class="t" style="left:761.5px;top:67.12px;font-size:11.5px;line-height:13px;color:#000;letter-spacing:-0.43px;">Brightness and Black Level</div>
<div class="t" style="left:538.5px;top:93.62px;font-size:11.5px;line-height:13px;color:#000;letter-spacing:-0.35px;">Preset Color Gamuts:</div>
<div class="a" style="left:539px;top:112px;width:256px;height:20px;background:#e5f1fb;border:1px solid #0078d7;box-sizing:border-box;"></div>
<div class="t" style="left:542px;top:116.12px;font-size:11.5px;line-height:13px;color:#000;letter-spacing:-0.3px;">sRGB</div>
<svg class="a" style="left:781.5px;top:120px" width="10" height="6"><path d="M0.8 0.8L4.6 4.5L8.4 0.8" stroke="#3a3a3a" stroke-width="1.4" fill="none"/></svg>
<div class="a" style="left:539px;top:144px;width:256px;height:117px;border:1px solid #dcdcdc;box-sizing:border-box;"></div>
<div class="a" style="left:545px;top:141px;width:98px;height:5px;background:#fff;"></div>
<div class="t" style="left:547.6px;top:139.12px;font-size:11.5px;line-height:13px;color:#000;letter-spacing:-0.4px;">Color Gamut CIE xy</div>
<div class="t" style="left:657.0px;width:20px;text-align:center;top:161.82px;font-size:11.5px;line-height:13px;color:#000;">x</div>
<div class="t" style="left:736.5px;width:20px;text-align:center;top:161.82px;font-size:11.5px;line-height:13px;color:#000;">y</div>
<div class="t" style="left:548.7px;top:184.62px;font-size:11.5px;line-height:13px;color:#000;letter-spacing:-0.3px;">Red:</div>
<div class="a" style="left:630px;top:180px;width:74px;height:20px;background:#fff;border:1px solid #7a7a7a;box-sizing:border-box;"></div><div class="a" style="left:688px;top:182px;width:14px;height:16px;background:#e6e6e6;border:1px solid #c8c8c8;box-sizing:border-box;"></div><div class="a" style="left:689px;top:190px;width:12px;height:1px;background:#c8c8c8;"></div><svg class="a" style="left:691.0px;top:184px" width="8" height="12"><path d="M1.2 4.4L4 1.4000000000000004L6.8 4.4Z M1.2 8.2L4 11.2L6.8 8.2Z" fill="#000"/></svg><div class="t" style="left:632.5px;top:184.62px;font-size:11.5px;line-height:13px;color:#000;">0,640</div>
<div class="a" style="left:710px;top:180px;width:75px;height:20px;background:#fff;border:1px solid #7a7a7a;box-sizing:border-box;"></div><div class="a" style="left:768px;top:182px;width:14px;height:16px;background:#e6e6e6;border:1px solid #c8c8c8;box-sizing:border-box;"></div><div class="a" style="left:769px;top:190px;width:12px;height:1px;background:#c8c8c8;"></div><svg class="a" style="left:771.0px;top:184px" width="8" height="12"><path d="M1.2 4.4L4 1.4000000000000004L6.8 4.4Z M1.2 8.2L4 11.2L6.8 8.2Z" fill="#000"/></svg><div class="t" style="left:712.5px;top:184.62px;font-size:11.5px;line-height:13px;color:#000;">0,330</div>
<div class="t" style="left:548.7px;top:210.62px;font-size:11.5px;line-height:13px;color:#000;letter-spacing:-0.3px;">Green:</div>
<div class="a" style="left:630px;top:206px;width:74px;height:20px;background:#fff;border:1px solid #7a7a7a;box-sizing:border-box;"></div><div class="a" style="left:688px;top:208px;width:14px;height:16px;background:#e6e6e6;border:1px solid #c8c8c8;box-sizing:border-box;"></div><div class="a" style="left:689px;top:216px;width:12px;height:1px;background:#c8c8c8;"></div><svg class="a" style="left:691.0px;top:210px" width="8" height="12"><path d="M1.2 4.4L4 1.4000000000000004L6.8 4.4Z M1.2 8.2L4 11.2L6.8 8.2Z" fill="#000"/></svg><div class="t" style="left:632.5px;top:210.62px;font-size:11.5px;line-height:13px;color:#000;">0,300</div>
<div class="a" style="left:710px;top:206px;width:75px;height:20px;background:#fff;border:1px solid #7a7a7a;box-sizing:border-box;"></div><div class="a" style="left:768px;top:208px;width:14px;height:16px;background:#e6e6e6;border:1px solid #c8c8c8;box-sizing:border-box;"></div><div class="a" style="left:769px;top:216px;width:12px;height:1px;background:#c8c8c8;"></div><svg class="a" style="left:771.0px;top:210px" width="8" height="12"><path d="M1.2 4.4L4 1.4000000000000004L6.8 4.4Z M1.2 8.2L4 11.2L6.8 8.2Z" fill="#000"/></svg><div class="t" style="left:712.5px;top:210.62px;font-size:11.5px;line-height:13px;color:#000;">0,600</div>
<div class="t" style="left:548.7px;top:236.62px;font-size:11.5px;line-height:13px;color:#000;letter-spacing:-0.3px;">Blue:</div>
<div class="a" style="left:630px;top:232px;width:74px;height:20px;background:#fff;border:1px solid #7a7a7a;box-sizing:border-box;"></div><div class="a" style="left:688px;top:234px;width:14px;height:16px;background:#e6e6e6;border:1px solid #c8c8c8;box-sizing:border-box;"></div><div class="a" style="left:689px;top:242px;width:12px;height:1px;background:#c8c8c8;"></div><svg class="a" style="left:691.0px;top:236px" width="8" height="12"><path d="M1.2 4.4L4 1.4000000000000004L6.8 4.4Z M1.2 8.2L4 11.2L6.8 8.2Z" fill="#000"/></svg><div class="t" style="left:632.5px;top:236.62px;font-size:11.5px;line-height:13px;color:#000;">0,150</div>
<div class="a" style="left:710px;top:232px;width:75px;height:20px;background:#fff;border:1px solid #7a7a7a;box-sizing:border-box;"></div><div class="a" style="left:768px;top:234px;width:14px;height:16px;background:#e6e6e6;border:1px solid #c8c8c8;box-sizing:border-box;"></div><div class="a" style="left:769px;top:242px;width:12px;height:1px;background:#c8c8c8;"></div><svg class="a" style="left:771.0px;top:236px" width="8" height="12"><path d="M1.2 4.4L4 1.4000000000000004L6.8 4.4Z M1.2 8.2L4 11.2L6.8 8.2Z" fill="#000"/></svg><div class="t" style="left:712.5px;top:236.62px;font-size:11.5px;line-height:13px;color:#000;">0,060</div>
<div class="a" style="left:540px;top:269px;width:254px;height:21px;background:#e1e1e1;border:1px solid #adadad;box-sizing:border-box;"></div><div class="t" style="left:540.0px;width:254px;text-align:center;top:273.62px;font-size:11.5px;line-height:13px;color:#000;">Reset</div>
<div class="t" style="left:542.7px;top:301.69px;font-size:11px;line-height:13px;color:#000;letter-spacing:-0.1px;">The native color gamut of the display is shown by</div>
<div class="t" style="left:542.7px;top:314.79px;font-size:11px;line-height:13px;color:#000;letter-spacing:-0.1px;">the yellow triangle. Colors outside this triangle can</div>
<div class="t" style="left:542.7px;top:327.89px;font-size:11px;line-height:13px;color:#000;letter-spacing:-0.1px;">not be represented by the display and will be</div>
<div class="t" style="left:542.7px;top:340.99px;font-size:11px;line-height:13px;color:#000;letter-spacing:-0.1px;">clipped to the nearest displayable color.</div>
<div class="a" style="left:801px;top:93px;width:302px;height:302px;background:#f0f0f0;"></div>
<div class="t" style="left:911.5px;width:80px;text-align:center;top:94.01px;font-size:9.5px;line-height:11px;color:#000;">CIE 1931 xy</div>
<div class="a" style="left:1050px;top:97px;width:21px;height:20px;background:#cfcfcf;border:1px solid #bcbcbc;box-sizing:border-box;"></div><svg class="a" style="left:1052px;top:99px" width="17" height="17" viewBox="0 0 17 17">
<path d="M10 10 L14 14" stroke="#b0b0b0" stroke-width="3" stroke-linecap="round"/>
<circle cx="7" cy="7" r="5.2" fill="#e8e8e8" stroke="#a0a0a0" stroke-width="1.2"/>
<path d="M4.5 7H9.5M7 4.5V9.5" stroke="#a8a8a8" stroke-width="1.3"/>
</svg>
<div class="a" style="left:1078px;top:97px;width:21px;height:20px;background:#cfcfcf;border:1px solid #bcbcbc;box-sizing:border-box;"></div><svg class="a" style="left:1080px;top:99px" width="17" height="17" viewBox="0 0 17 17">
<path d="M10 10 L14 14" stroke="#b0b0b0" stroke-width="3" stroke-linecap="round"/>
<circle cx="7" cy="7" r="5.2" fill="#e8e8e8" stroke="#a0a0a0" stroke-width="1.2"/>
<path d="M4.5 7H9.5" stroke="#a8a8a8" stroke-width="1.3"/>
</svg>
<svg class="a" style="left:0;top:0" width="1132" height="546" viewBox="0 0 1132 546"><rect x="832" y="119" width="259" height="260" fill="#000"/><clipPath id="tc"><path d="M1015.7 284.0L918.2 206.4L875.3 361.6Z"/></clipPath><g clip-path="url(#tc)"><rect x="912" y="205" width="2" height="2" fill="#16e01a"/><rect x="914" y="205" width="2" height="2" fill="#16df19"/><rect x="916" y="205" width="2" height="2" fill="#16de17"/><rect x="918" y="205" width="2" height="2" fill="#18dd16"/><rect x="920" y="205" width="2" height="2" fill="#1bdd16"/><rect x="922" y="205" width="2" height="2" fill="#1edc16"/><rect x="924" y="205" width="2" height="2" fill="#22db16"/><rect x="926" y="205" width="2" height="2" fill="#25da16"/><rect x="928" y="205" width="2" height="2" fill="#29da16"/><rect x="930" y="205" width="2" height="2" fill="#2cd916"/><rect x="910" y="207" width="2" height="2" fill="#16df1e"/><rect x="912" y="207" width="2" height="2" fill="#16de1c"/><rect x="914" y="207" width="2" height="2" fill="#16dd1b"/><rect x="916" y="207" width="2" height="2" fill="#16dd19"/><rect x="918" y="207" width="2" height="2" fill="#18dc18"/><rect x="920" y="207" width="2" height="2" fill="#1cdb16"/><rect x="922" y="207" width="2" height="2" fill="#1fda16"/><rect x="924" y="207" width="2" height="2" fill="#23da16"/><rect x="926" y="207" width="2" height="2" fill="#26d916"/><rect x="928" y="207" width="2" height="2" fill="#2ad816"/><rect x="930" y="207" width="2" height="2" fill="#2dd716"/><rect x="932" y="207" width="2" height="2" fill="#31d716"/><rect x="910" y="209" width="2" height="2" fill="#16de20"/><rect x="912" y="209" width="2" height="2" fill="#16dd1f"/><rect x="914" y="209" width="2" height="2" fill="#16dc1d"/><rect x="916" y="209" width="2" height="2" fill="#16db1b"/><rect x="918" y="209" width="2" height="2" fill="#19db1a"/><rect x="920" y="209" width="2" height="2" fill="#1dda18"/><rect x="922" y="209" width="2" height="2" fill="#20d916"/><rect x="924" y="209" width="2" height="2" fill="#24d816"/><rect x="926" y="209" width="2" height="2" fill="#27d816"/><rect x="928" y="209" width="2" height="2" fill="#2bd716"/><rect x="930" y="209" width="2" height="2" fill="#2fd616"/><rect x="932" y="209" width="2" height="2" fill="#32d516"/><rect x="934" y="209" width="2" height="2" fill="#36d516"/><rect x="936" y="209" width="2" height="2" fill="#3ad416"/><rect x="910" y="211" width="2" height="2" fill="#16dc22"/><rect x="912" y="211" width="2" height="2" fill="#16dc21"/><rect x="914" y="211" width="2" height="2" fill="#16db1f"/><rect x="916" y="211" width="2" height="2" fill="#17da1e"/><rect x="918" y="211" width="2" height="2" fill="#1ad91c"/><rect x="920" y="211" width="2" height="2" fill="#1ed91a"/><rect x="922" y="211" width="2" height="2" fill="#21d818"/><rect x="924" y="211" width="2" height="2" fill="#25d717"/><rect x="926" y="211" width="2" height="2" fill="#28d616"/><rect x="928" y="211" width="2" height="2" fill="#2cd516"/><rect x="930" y="211" width="2" height="2" fill="#30d516"/><rect x="932" y="211" width="2" height="2" fill="#33d416"/><rect x="934" y="211" width="2" height="2" fill="#37d316"/><rect x="936" y="211" width="2" height="2" fill="#3bd216"/><rect x="938" y="211" width="2" height="2" fill="#3fd216"/><rect x="910" y="213" width="2" height="2" fill="#16db25"/><rect x="912" y="213" width="2" height="2" fill="#16da23"/><rect x="914" y="213" width="2" height="2" fill="#16d921"/><rect x="916" y="213" width="2" height="2" fill="#18d920"/><rect x="918" y="213" width="2" height="2" fill="#1bd81e"/><rect x="920" y="213" width="2" height="2" fill="#1fd71c"/><rect x="922" y="213" width="2" height="2" fill="#22d61b"/><rect x="924" y="213" width="2" height="2" fill="#26d619"/><rect x="926" y="213" width="2" height="2" fill="#2ad517"/><rect x="928" y="213" width="2" height="2" fill="#2dd416"/><rect x="930" y="213" width="2" height="2" fill="#31d316"/><rect x="932" y="213" width="2" height="2" fill="#35d316"/><rect x="934" y="213" width="2" height="2" fill="#39d216"/><rect x="936" y="213" width="2" height="2" fill="#3cd116"/><rect x="938" y="213" width="2" height="2" fill="#40d016"/><rect x="940" y="213" width="2" height="2" fill="#44d016"/><rect x="908" y="215" width="2" height="2" fill="#16da29"/><rect x="910" y="215" width="2" height="2" fill="#16da27"/><rect x="912" y="215" width="2" height="2" fill="#16d925"/><rect x="914" y="215" width="2" height="2" fill="#16d824"/><rect x="916" y="215" width="2" height="2" fill="#19d722"/><rect x="918" y="215" width="2" height="2" fill="#1cd720"/><rect x="920" y="215" width="2" height="2" fill="#20d61f"/><rect x="922" y="215" width="2" height="2" fill="#24d51d"/><rect x="924" y="215" width="2" height="2" fill="#27d41b"/><rect x="926" y="215" width="2" height="2" fill="#2bd419"/><rect x="928" y="215" width="2" height="2" fill="#2fd318"/><rect x="930" y="215" width="2" height="2" fill="#32d216"/><rect x="932" y="215" width="2" height="2" fill="#36d116"/><rect x="934" y="215" width="2" height="2" fill="#3ad116"/><rect x="936" y="215" width="2" height="2" fill="#3ed016"/><rect x="938" y="215" width="2" height="2" fill="#42cf16"/><rect x="940" y="215" width="2" height="2" fill="#46ce16"/><rect x="942" y="215" width="2" height="2" fill="#4acd16"/><rect x="908" y="217" width="2" height="2" fill="#16d92b"/><rect x="910" y="217" width="2" height="2" fill="#16d829"/><rect x="912" y="217" width="2" height="2" fill="#16d728"/><rect x="914" y="217" width="2" height="2" fill="#16d726"/><rect x="916" y="217" width="2" height="2" fill="#1ad624"/><rect x="918" y="217" width="2" height="2" fill="#1dd523"/><rect x="920" y="217" width="2" height="2" fill="#21d421"/><rect x="922" y="217" width="2" height="2" fill="#25d41f"/><rect x="924" y="217" width="2" height="2" fill="#28d31d"/><rect x="926" y="217" width="2" height="2" fill="#2cd21c"/><rect x="928" y="217" width="2" height="2" fill="#30d11a"/><rect x="930" y="217" width="2" height="2" fill="#34d118"/><rect x="932" y="217" width="2" height="2" fill="#37d016"/><rect x="934" y="217" width="2" height="2" fill="#3bcf16"/><rect x="936" y="217" width="2" height="2" fill="#3fce16"/><rect x="938" y="217" width="2" height="2" fill="#43ce16"/><rect x="940" y="217" width="2" height="2" fill="#47cd16"/><rect x="942" y="217" width="2" height="2" fill="#4bcc16"/><rect x="944" y="217" width="2" height="2" fill="#4fcb16"/><rect x="946" y="217" width="2" height="2" fill="#54cb16"/><rect x="908" y="219" width="2" height="2" fill="#16d82d"/><rect x="910" y="219" width="2" height="2" fill="#16d72c"/><rect x="912" y="219" width="2" height="2" fill="#16d62a"/><rect x="914" y="219" width="2" height="2" fill="#17d528"/><rect x="916" y="219" width="2" height="2" fill="#1bd527"/><rect x="918" y="219" width="2" height="2" fill="#1ed425"/><rect x="920" y="219" width="2" height="2" fill="#22d323"/><rect x="922" y="219" width="2" height="2" fill="#26d222"/><rect x="924" y="219" width="2" height="2" fill="#2ad220"/><rect x="926" y="219" width="2" height="2" fill="#2dd11e"/><rect x="928" y="219" width="2" height="2" fill="#31d01c"/><rect x="930" y="219" width="2" height="2" fill="#35cf1a"/><rect x="932" y="219" width="2" height="2" fill="#39cf19"/><rect x="934" y="219" width="2" height="2" fill="#3dce17"/><rect x="936" y="219" width="2" height="2" fill="#41cd16"/><rect x="938" y="219" width="2" height="2" fill="#45cc16"/><rect x="940" y="219" width="2" height="2" fill="#49cc16"/><rect x="942" y="219" width="2" height="2" fill="#4dcb16"/><rect x="944" y="219" width="2" height="2" fill="#51ca16"/><rect x="946" y="219" width="2" height="2" fill="#55c916"/><rect x="948" y="219" width="2" height="2" fill="#5ac916"/><rect x="906" y="221" width="2" height="2" fill="#16d731"/><rect x="908" y="221" width="2" height="2" fill="#16d630"/><rect x="910" y="221" width="2" height="2" fill="#16d52e"/><rect x="912" y="221" width="2" height="2" fill="#16d52c"/><rect x="914" y="221" width="2" height="2" fill="#18d42b"/><rect x="916" y="221" width="2" height="2" fill="#1cd329"/><rect x="918" y="221" width="2" height="2" fill="#20d227"/><rect x="920" y="221" width="2" height="2" fill="#23d226"/><rect x="922" y="221" width="2" height="2" fill="#27d124"/><rect x="924" y="221" width="2" height="2" fill="#2bd022"/><rect x="926" y="221" width="2" height="2" fill="#2fcf20"/><rect x="928" y="221" width="2" height="2" fill="#32cf1f"/><rect x="930" y="221" width="2" height="2" fill="#36ce1d"/><rect x="932" y="221" width="2" height="2" fill="#3acd1b"/><rect x="934" y="221" width="2" height="2" fill="#3ecc19"/><rect x="936" y="221" width="2" height="2" fill="#42cc17"/><rect x="938" y="221" width="2" height="2" fill="#46cb16"/><rect x="940" y="221" width="2" height="2" fill="#4bca16"/><rect x="942" y="221" width="2" height="2" fill="#4fc916"/><rect x="944" y="221" width="2" height="2" fill="#53c916"/><rect x="946" y="221" width="2" height="2" fill="#57c816"/><rect x="948" y="221" width="2" height="2" fill="#5cc716"/><rect x="950" y="221" width="2" height="2" fill="#60c616"/><rect x="906" y="223" width="2" height="2" fill="#16d634"/><rect x="908" y="223" width="2" height="2" fill="#16d532"/><rect x="910" y="223" width="2" height="2" fill="#16d431"/><rect x="912" y="223" width="2" height="2" fill="#16d32f"/><rect x="914" y="223" width="2" height="2" fill="#19d32d"/><rect x="916" y="223" width="2" height="2" fill="#1dd22c"/><rect x="918" y="223" width="2" height="2" fill="#21d12a"/><rect x="920" y="223" width="2" height="2" fill="#24d028"/><rect x="922" y="223" width="2" height="2" fill="#28d026"/><rect x="924" y="223" width="2" height="2" fill="#2ccf25"/><rect x="926" y="223" width="2" height="2" fill="#30ce23"/><rect x="928" y="223" width="2" height="2" fill="#34cd21"/><rect x="930" y="223" width="2" height="2" fill="#38cd1f"/><rect x="932" y="223" width="2" height="2" fill="#3ccc1d"/><rect x="934" y="223" width="2" height="2" fill="#40cb1c"/><rect x="936" y="223" width="2" height="2" fill="#44ca1a"/><rect x="938" y="223" width="2" height="2" fill="#48ca18"/><rect x="940" y="223" width="2" height="2" fill="#4cc916"/><rect x="942" y="223" width="2" height="2" fill="#51c816"/><rect x="944" y="223" width="2" height="2" fill="#55c716"/><rect x="946" y="223" width="2" height="2" fill="#59c716"/><rect x="948" y="223" width="2" height="2" fill="#5ec616"/><rect x="950" y="223" width="2" height="2" fill="#62c516"/><rect x="952" y="223" width="2" height="2" fill="#67c416"/><rect x="906" y="225" width="2" height="2" fill="#16d436"/><rect x="908" y="225" width="2" height="2" fill="#16d335"/><rect x="910" y="225" width="2" height="2" fill="#16d333"/><rect x="912" y="225" width="2" height="2" fill="#17d231"/><rect x="914" y="225" width="2" height="2" fill="#1ad130"/><rect x="916" y="225" width="2" height="2" fill="#1ed02e"/><rect x="918" y="225" width="2" height="2" fill="#22d02c"/><rect x="920" y="225" width="2" height="2" fill="#26cf2b"/><rect x="922" y="225" width="2" height="2" fill="#29ce29"/><rect x="924" y="225" width="2" height="2" fill="#2dcd27"/><rect x="926" y="225" width="2" height="2" fill="#31cd25"/><rect x="928" y="225" width="2" height="2" fill="#35cc24"/><rect x="930" y="225" width="2" height="2" fill="#39cb22"/><rect x="932" y="225" width="2" height="2" fill="#3dca20"/><rect x="934" y="225" width="2" height="2" fill="#41ca1e"/><rect x="936" y="225" width="2" height="2" fill="#45c91c"/><rect x="938" y="225" width="2" height="2" fill="#4ac81a"/><rect x="940" y="225" width="2" height="2" fill="#4ec718"/><rect x="942" y="225" width="2" height="2" fill="#52c716"/><rect x="944" y="225" width="2" height="2" fill="#57c616"/><rect x="946" y="225" width="2" height="2" fill="#5bc516"/><rect x="948" y="225" width="2" height="2" fill="#60c416"/><rect x="950" y="225" width="2" height="2" fill="#64c416"/><rect x="952" y="225" width="2" height="2" fill="#69c316"/><rect x="954" y="225" width="2" height="2" fill="#6ec216"/><rect x="956" y="225" width="2" height="2" fill="#73c116"/><rect x="906" y="227" width="2" height="2" fill="#16d339"/><rect x="908" y="227" width="2" height="2" fill="#16d237"/><rect x="910" y="227" width="2" height="2" fill="#16d136"/><rect x="912" y="227" width="2" height="2" fill="#18d134"/><rect x="914" y="227" width="2" height="2" fill="#1bd032"/><rect x="916" y="227" width="2" height="2" fill="#1fcf31"/><rect x="918" y="227" width="2" height="2" fill="#23ce2f"/><rect x="920" y="227" width="2" height="2" fill="#27ce2d"/><rect x="922" y="227" width="2" height="2" fill="#2bcd2b"/><rect x="924" y="227" width="2" height="2" fill="#2fcc2a"/><rect x="926" y="227" width="2" height="2" fill="#33cb28"/><rect x="928" y="227" width="2" height="2" fill="#37cb26"/><rect x="930" y="227" width="2" height="2" fill="#3bca24"/><rect x="932" y="227" width="2" height="2" fill="#3fc922"/><rect x="934" y="227" width="2" height="2" fill="#43c821"/><rect x="936" y="227" width="2" height="2" fill="#47c81f"/><rect x="938" y="227" width="2" height="2" fill="#4bc71d"/><rect x="940" y="227" width="2" height="2" fill="#50c61b"/><rect x="942" y="227" width="2" height="2" fill="#54c519"/><rect x="944" y="227" width="2" height="2" fill="#59c517"/><rect x="946" y="227" width="2" height="2" fill="#5dc416"/><rect x="948" y="227" width="2" height="2" fill="#62c316"/><rect x="950" y="227" width="2" height="2" fill="#67c216"/><rect x="952" y="227" width="2" height="2" fill="#6bc216"/><rect x="954" y="227" width="2" height="2" fill="#70c116"/><rect x="956" y="227" width="2" height="2" fill="#75c016"/><rect x="958" y="227" width="2" height="2" fill="#7abf16"/><rect x="904" y="229" width="2" height="2" fill="#16d23d"/><rect x="906" y="229" width="2" height="2" fill="#16d23b"/><rect x="908" y="229" width="2" height="2" fill="#16d13a"/><rect x="910" y="229" width="2" height="2" fill="#16d038"/><rect x="912" y="229" width="2" height="2" fill="#19cf37"/><rect x="914" y="229" width="2" height="2" fill="#1dcf35"/><rect x="916" y="229" width="2" height="2" fill="#20ce33"/><rect x="918" y="229" width="2" height="2" fill="#24cd32"/><rect x="920" y="229" width="2" height="2" fill="#28cc30"/><rect x="922" y="229" width="2" height="2" fill="#2ccb2e"/><rect x="924" y="229" width="2" height="2" fill="#30cb2c"/><rect x="926" y="229" width="2" height="2" fill="#34ca2b"/><rect x="928" y="229" width="2" height="2" fill="#38c929"/><rect x="930" y="229" width="2" height="2" fill="#3cc827"/><rect x="932" y="229" width="2" height="2" fill="#40c825"/><rect x="934" y="229" width="2" height="2" fill="#45c723"/><rect x="936" y="229" width="2" height="2" fill="#49c621"/><rect x="938" y="229" width="2" height="2" fill="#4dc51f"/><rect x="940" y="229" width="2" height="2" fill="#52c51d"/><rect x="942" y="229" width="2" height="2" fill="#56c41b"/><rect x="944" y="229" width="2" height="2" fill="#5bc319"/><rect x="946" y="229" width="2" height="2" fill="#5fc217"/><rect x="948" y="229" width="2" height="2" fill="#64c216"/><rect x="950" y="229" width="2" height="2" fill="#69c116"/><rect x="952" y="229" width="2" height="2" fill="#6ec016"/><rect x="954" y="229" width="2" height="2" fill="#73bf16"/><rect x="956" y="229" width="2" height="2" fill="#78bf16"/><rect x="958" y="229" width="2" height="2" fill="#7dbe16"/><rect x="960" y="229" width="2" height="2" fill="#82bd16"/><rect x="904" y="231" width="2" height="2" fill="#16d140"/><rect x="906" y="231" width="2" height="2" fill="#16d03e"/><rect x="908" y="231" width="2" height="2" fill="#16cf3d"/><rect x="910" y="231" width="2" height="2" fill="#16cf3b"/><rect x="912" y="231" width="2" height="2" fill="#1ace39"/><rect x="914" y="231" width="2" height="2" fill="#1ecd38"/><rect x="916" y="231" width="2" height="2" fill="#21cc36"/><rect x="918" y="231" width="2" height="2" fill="#25cc34"/><rect x="920" y="231" width="2" height="2" fill="#29cb33"/><rect x="922" y="231" width="2" height="2" fill="#2dca31"/><rect x="924" y="231" width="2" height="2" fill="#31c92f"/><rect x="926" y="231" width="2" height="2" fill="#35c92d"/><rect x="928" y="231" width="2" height="2" fill="#39c82b"/><rect x="930" y="231" width="2" height="2" fill="#3ec72a"/><rect x="932" y="231" width="2" height="2" fill="#42c628"/><rect x="934" y="231" width="2" height="2" fill="#46c626"/><rect x="936" y="231" width="2" height="2" fill="#4bc524"/><rect x="938" y="231" width="2" height="2" fill="#4fc422"/><rect x="940" y="231" width="2" height="2" fill="#54c320"/><rect x="942" y="231" width="2" height="2" fill="#58c31e"/><rect x="944" y="231" width="2" height="2" fill="#5dc21c"/><rect x="946" y="231" width="2" height="2" fill="#62c11a"/><rect x="948" y="231" width="2" height="2" fill="#66c018"/><rect x="950" y="231" width="2" height="2" fill="#6bc016"/><rect x="952" y="231" width="2" height="2" fill="#70bf16"/><rect x="954" y="231" width="2" height="2" fill="#75be16"/><rect x="956" y="231" width="2" height="2" fill="#7bbd16"/><rect x="958" y="231" width="2" height="2" fill="#80bd16"/><rect x="960" y="231" width="2" height="2" fill="#85bc16"/><rect x="962" y="231" width="2" height="2" fill="#8bbb16"/><rect x="904" y="233" width="2" height="2" fill="#16d043"/><rect x="906" y="233" width="2" height="2" fill="#16cf41"/><rect x="908" y="233" width="2" height="2" fill="#16ce3f"/><rect x="910" y="233" width="2" height="2" fill="#17cd3e"/><rect x="912" y="233" width="2" height="2" fill="#1bcd3c"/><rect x="914" y="233" width="2" height="2" fill="#1fcc3a"/><rect x="916" y="233" width="2" height="2" fill="#23cb39"/><rect x="918" y="233" width="2" height="2" fill="#27ca37"/><rect x="920" y="233" width="2" height="2" fill="#2bca35"/><rect x="922" y="233" width="2" height="2" fill="#2fc934"/><rect x="924" y="233" width="2" height="2" fill="#33c832"/><rect x="926" y="233" width="2" height="2" fill="#37c730"/><rect x="928" y="233" width="2" height="2" fill="#3bc72e"/><rect x="930" y="233" width="2" height="2" fill="#3fc62c"/><rect x="932" y="233" width="2" height="2" fill="#44c52a"/><rect x="934" y="233" width="2" height="2" fill="#48c429"/><rect x="936" y="233" width="2" height="2" fill="#4cc427"/><rect x="938" y="233" width="2" height="2" fill="#51c325"/><rect x="940" y="233" width="2" height="2" fill="#56c223"/><rect x="942" y="233" width="2" height="2" fill="#5ac121"/><rect x="944" y="233" width="2" height="2" fill="#5fc01f"/><rect x="946" y="233" width="2" height="2" fill="#64c01d"/><rect x="948" y="233" width="2" height="2" fill="#69bf1b"/><rect x="950" y="233" width="2" height="2" fill="#6ebe18"/><rect x="952" y="233" width="2" height="2" fill="#73bd16"/><rect x="954" y="233" width="2" height="2" fill="#78bd16"/><rect x="956" y="233" width="2" height="2" fill="#7dbc16"/><rect x="958" y="233" width="2" height="2" fill="#83bb16"/><rect x="960" y="233" width="2" height="2" fill="#88ba16"/><rect x="962" y="233" width="2" height="2" fill="#8eba16"/><rect x="964" y="233" width="2" height="2" fill="#94b916"/><rect x="966" y="233" width="2" height="2" fill="#9ab816"/><rect x="902" y="235" width="2" height="2" fill="#16cf47"/><rect x="904" y="235" width="2" height="2" fill="#16ce45"/><rect x="906" y="235" width="2" height="2" fill="#16cd44"/><rect x="908" y="235" width="2" height="2" fill="#16cd42"/><rect x="910" y="235" width="2" height="2" fill="#18cc41"/><rect x="912" y="235" width="2" height="2" fill="#1ccb3f"/><rect x="914" y="235" width="2" height="2" fill="#20ca3d"/><rect x="916" y="235" width="2" height="2" fill="#24ca3c"/><rect x="918" y="235" width="2" height="2" fill="#28c93a"/><rect x="920" y="235" width="2" height="2" fill="#2cc838"/><rect x="922" y="235" width="2" height="2" fill="#30c736"/><rect x="924" y="235" width="2" height="2" fill="#34c735"/><rect x="926" y="235" width="2" height="2" fill="#38c633"/><rect x="928" y="235" width="2" height="2" fill="#3dc531"/><rect x="930" y="235" width="2" height="2" fill="#41c42f"/><rect x="932" y="235" width="2" height="2" fill="#45c42d"/><rect x="934" y="235" width="2" height="2" fill="#4ac32b"/><rect x="936" y="235" width="2" height="2" fill="#4ec22a"/><rect x="938" y="235" width="2" height="2" fill="#53c128"/><rect x="940" y="235" width="2" height="2" fill="#58c126"/><rect x="942" y="235" width="2" height="2" fill="#5cc024"/><rect x="944" y="235" width="2" height="2" fill="#61bf22"/><rect x="946" y="235" width="2" height="2" fill="#66be20"/><rect x="948" y="235" width="2" height="2" fill="#6bbe1d"/><rect x="950" y="235" width="2" height="2" fill="#70bd1b"/><rect x="952" y="235" width="2" height="2" fill="#76bc19"/><rect x="954" y="235" width="2" height="2" fill="#7bbb17"/><rect x="956" y="235" width="2" height="2" fill="#80bb16"/><rect x="958" y="235" width="2" height="2" fill="#86ba16"/><rect x="960" y="235" width="2" height="2" fill="#8cb916"/><rect x="962" y="235" width="2" height="2" fill="#91b816"/><rect x="964" y="235" width="2" height="2" fill="#97b816"/><rect x="966" y="235" width="2" height="2" fill="#9db716"/><rect x="968" y="235" width="2" height="2" fill="#a3b616"/><rect x="902" y="237" width="2" height="2" fill="#16ce4a"/><rect x="904" y="237" width="2" height="2" fill="#16cd48"/><rect x="906" y="237" width="2" height="2" fill="#16cc47"/><rect x="908" y="237" width="2" height="2" fill="#16cb45"/><rect x="910" y="237" width="2" height="2" fill="#19cb43"/><rect x="912" y="237" width="2" height="2" fill="#1dca42"/><rect x="914" y="237" width="2" height="2" fill="#21c940"/><rect x="916" y="237" width="2" height="2" fill="#25c83e"/><rect x="918" y="237" width="2" height="2" fill="#29c83d"/><rect x="920" y="237" width="2" height="2" fill="#2dc73b"/><rect x="922" y="237" width="2" height="2" fill="#31c639"/><rect x="924" y="237" width="2" height="2" fill="#36c538"/><rect x="926" y="237" width="2" height="2" fill="#3ac536"/><rect x="928" y="237" width="2" height="2" fill="#3ec434"/><rect x="930" y="237" width="2" height="2" fill="#43c332"/><rect x="932" y="237" width="2" height="2" fill="#47c230"/><rect x="934" y="237" width="2" height="2" fill="#4cc22e"/><rect x="936" y="237" width="2" height="2" fill="#50c12c"/><rect x="938" y="237" width="2" height="2" fill="#55c02a"/><rect x="940" y="237" width="2" height="2" fill="#5abf29"/><rect x="942" y="237" width="2" height="2" fill="#5fbf27"/><rect x="944" y="237" width="2" height="2" fill="#64be24"/><rect x="946" y="237" width="2" height="2" fill="#69bd22"/><rect x="948" y="237" width="2" height="2" fill="#6ebc20"/><rect x="950" y="237" width="2" height="2" fill="#73bc1e"/><rect x="952" y="237" width="2" height="2" fill="#78bb1c"/><rect x="954" y="237" width="2" height="2" fill="#7eba1a"/><rect x="956" y="237" width="2" height="2" fill="#83b917"/><rect x="958" y="237" width="2" height="2" fill="#89b916"/><rect x="960" y="237" width="2" height="2" fill="#8fb816"/><rect x="962" y="237" width="2" height="2" fill="#95b716"/><rect x="964" y="237" width="2" height="2" fill="#9bb616"/><rect x="966" y="237" width="2" height="2" fill="#a1b516"/><rect x="968" y="237" width="2" height="2" fill="#a7b516"/><rect x="970" y="237" width="2" height="2" fill="#aeb416"/><rect x="902" y="239" width="2" height="2" fill="#16cc4d"/><rect x="904" y="239" width="2" height="2" fill="#16cb4b"/><rect x="906" y="239" width="2" height="2" fill="#16cb4a"/><rect x="908" y="239" width="2" height="2" fill="#17ca48"/><rect x="910" y="239" width="2" height="2" fill="#1ac946"/><rect x="912" y="239" width="2" height="2" fill="#1ec845"/><rect x="914" y="239" width="2" height="2" fill="#22c843"/><rect x="916" y="239" width="2" height="2" fill="#26c741"/><rect x="918" y="239" width="2" height="2" fill="#2ac640"/><rect x="920" y="239" width="2" height="2" fill="#2fc53e"/><rect x="922" y="239" width="2" height="2" fill="#33c53c"/><rect x="924" y="239" width="2" height="2" fill="#37c43b"/><rect x="926" y="239" width="2" height="2" fill="#3cc339"/><rect x="928" y="239" width="2" height="2" fill="#40c237"/><rect x="930" y="239" width="2" height="2" fill="#44c235"/><rect x="932" y="239" width="2" height="2" fill="#49c133"/><rect x="934" y="239" width="2" height="2" fill="#4ec031"/><rect x="936" y="239" width="2" height="2" fill="#52bf2f"/><rect x="938" y="239" width="2" height="2" fill="#57bf2d"/><rect x="940" y="239" width="2" height="2" fill="#5cbe2c"/><rect x="942" y="239" width="2" height="2" fill="#61bd2a"/><rect x="944" y="239" width="2" height="2" fill="#66bc27"/><rect x="946" y="239" width="2" height="2" fill="#6bbc25"/><rect x="948" y="239" width="2" height="2" fill="#71bb23"/><rect x="950" y="239" width="2" height="2" fill="#76ba21"/><rect x="952" y="239" width="2" height="2" fill="#7bb91f"/><rect x="954" y="239" width="2" height="2" fill="#81b91d"/><rect x="956" y="239" width="2" height="2" fill="#87b81a"/><rect x="958" y="239" width="2" height="2" fill="#8cb718"/><rect x="960" y="239" width="2" height="2" fill="#92b616"/><rect x="962" y="239" width="2" height="2" fill="#99b616"/><rect x="964" y="239" width="2" height="2" fill="#9fb516"/><rect x="966" y="239" width="2" height="2" fill="#a5b416"/><rect x="968" y="239" width="2" height="2" fill="#acb316"/><rect x="970" y="239" width="2" height="2" fill="#b2b316"/><rect x="972" y="239" width="2" height="2" fill="#b4ad16"/><rect x="902" y="241" width="2" height="2" fill="#16cb50"/><rect x="904" y="241" width="2" height="2" fill="#16ca4e"/><rect x="906" y="241" width="2" height="2" fill="#16c94d"/><rect x="908" y="241" width="2" height="2" fill="#18c94b"/><rect x="910" y="241" width="2" height="2" fill="#1cc849"/><rect x="912" y="241" width="2" height="2" fill="#20c748"/><rect x="914" y="241" width="2" height="2" fill="#24c646"/><rect x="916" y="241" width="2" height="2" fill="#28c644"/><rect x="918" y="241" width="2" height="2" fill="#2cc543"/><rect x="920" y="241" width="2" height="2" fill="#30c441"/><rect x="922" y="241" width="2" height="2" fill="#34c33f"/><rect x="924" y="241" width="2" height="2" fill="#39c33e"/><rect x="926" y="241" width="2" height="2" fill="#3dc23c"/><rect x="928" y="241" width="2" height="2" fill="#42c13a"/><rect x="930" y="241" width="2" height="2" fill="#46c038"/><rect x="932" y="241" width="2" height="2" fill="#4bc036"/><rect x="934" y="241" width="2" height="2" fill="#50bf34"/><rect x="936" y="241" width="2" height="2" fill="#54be33"/><rect x="938" y="241" width="2" height="2" fill="#59bd31"/><rect x="940" y="241" width="2" height="2" fill="#5ebd2f"/><rect x="942" y="241" width="2" height="2" fill="#63bc2d"/><rect x="944" y="241" width="2" height="2" fill="#69bb2b"/><rect x="946" y="241" width="2" height="2" fill="#6eba28"/><rect x="948" y="241" width="2" height="2" fill="#73ba26"/><rect x="950" y="241" width="2" height="2" fill="#79b924"/><rect x="952" y="241" width="2" height="2" fill="#7eb822"/><rect x="954" y="241" width="2" height="2" fill="#84b720"/><rect x="956" y="241" width="2" height="2" fill="#8ab71d"/><rect x="958" y="241" width="2" height="2" fill="#90b61b"/><rect x="960" y="241" width="2" height="2" fill="#96b519"/><rect x="962" y="241" width="2" height="2" fill="#9cb416"/><rect x="964" y="241" width="2" height="2" fill="#a3b416"/><rect x="966" y="241" width="2" height="2" fill="#a9b316"/><rect x="968" y="241" width="2" height="2" fill="#b0b216"/><rect x="970" y="241" width="2" height="2" fill="#b3ad16"/><rect x="972" y="241" width="2" height="2" fill="#b4a816"/><rect x="974" y="241" width="2" height="2" fill="#b6a216"/><rect x="976" y="241" width="2" height="2" fill="#b79d16"/><rect x="900" y="243" width="2" height="2" fill="#16ca54"/><rect x="902" y="243" width="2" height="2" fill="#16c953"/><rect x="904" y="243" width="2" height="2" fill="#16c951"/><rect x="906" y="243" width="2" height="2" fill="#16c850"/><rect x="908" y="243" width="2" height="2" fill="#19c74e"/><rect x="910" y="243" width="2" height="2" fill="#1dc64d"/><rect x="912" y="243" width="2" height="2" fill="#21c64b"/><rect x="914" y="243" width="2" height="2" fill="#25c549"/><rect x="916" y="243" width="2" height="2" fill="#29c448"/><rect x="918" y="243" width="2" height="2" fill="#2dc346"/><rect x="920" y="243" width="2" height="2" fill="#32c344"/><rect x="922" y="243" width="2" height="2" fill="#36c243"/><rect x="924" y="243" width="2" height="2" fill="#3ac141"/><rect x="926" y="243" width="2" height="2" fill="#3fc03f"/><rect x="928" y="243" width="2" height="2" fill="#43c03d"/><rect x="930" y="243" width="2" height="2" fill="#48bf3b"/><rect x="932" y="243" width="2" height="2" fill="#4dbe3a"/><rect x="934" y="243" width="2" height="2" fill="#52bd38"/><rect x="936" y="243" width="2" height="2" fill="#57bd36"/><rect x="938" y="243" width="2" height="2" fill="#5cbc34"/><rect x="940" y="243" width="2" height="2" fill="#61bb32"/><rect x="942" y="243" width="2" height="2" fill="#66ba30"/><rect x="944" y="243" width="2" height="2" fill="#6bba2e"/><rect x="946" y="243" width="2" height="2" fill="#71b92c"/><rect x="948" y="243" width="2" height="2" fill="#76b82a"/><rect x="950" y="243" width="2" height="2" fill="#7cb727"/><rect x="952" y="243" width="2" height="2" fill="#82b725"/><rect x="954" y="243" width="2" height="2" fill="#88b623"/><rect x="956" y="243" width="2" height="2" fill="#8eb521"/><rect x="958" y="243" width="2" height="2" fill="#94b41e"/><rect x="960" y="243" width="2" height="2" fill="#9ab41c"/><rect x="962" y="243" width="2" height="2" fill="#a0b319"/><rect x="964" y="243" width="2" height="2" fill="#a7b217"/><rect x="966" y="243" width="2" height="2" fill="#aeb116"/><rect x="968" y="243" width="2" height="2" fill="#b2ae16"/><rect x="970" y="243" width="2" height="2" fill="#b3a816"/><rect x="972" y="243" width="2" height="2" fill="#b5a216"/><rect x="974" y="243" width="2" height="2" fill="#b69d16"/><rect x="976" y="243" width="2" height="2" fill="#b89816"/><rect x="978" y="243" width="2" height="2" fill="#b99316"/><rect x="900" y="245" width="2" height="2" fill="#16c958"/><rect x="902" y="245" width="2" height="2" fill="#16c856"/><rect x="904" y="245" width="2" height="2" fill="#16c755"/><rect x="906" y="245" width="2" height="2" fill="#16c753"/><rect x="908" y="245" width="2" height="2" fill="#1ac651"/><rect x="910" y="245" width="2" height="2" fill="#1ec550"/><rect x="912" y="245" width="2" height="2" fill="#22c44e"/><rect x="914" y="245" width="2" height="2" fill="#26c44d"/><rect x="916" y="245" width="2" height="2" fill="#2ac34b"/><rect x="918" y="245" width="2" height="2" fill="#2fc249"/><rect x="920" y="245" width="2" height="2" fill="#33c148"/><rect x="922" y="245" width="2" height="2" fill="#38c146"/><rect x="924" y="245" width="2" height="2" fill="#3cc044"/><rect x="926" y="245" width="2" height="2" fill="#41bf42"/><rect x="928" y="245" width="2" height="2" fill="#45be41"/><rect x="930" y="245" width="2" height="2" fill="#4abe3f"/><rect x="932" y="245" width="2" height="2" fill="#4fbd3d"/><rect x="934" y="245" width="2" height="2" fill="#54bc3b"/><rect x="936" y="245" width="2" height="2" fill="#59bb39"/><rect x="938" y="245" width="2" height="2" fill="#5ebb37"/><rect x="940" y="245" width="2" height="2" fill="#63ba35"/><rect x="942" y="245" width="2" height="2" fill="#69b933"/><rect x="944" y="245" width="2" height="2" fill="#6eb831"/><rect x="946" y="245" width="2" height="2" fill="#74b82f"/><rect x="948" y="245" width="2" height="2" fill="#79b72d"/><rect x="950" y="245" width="2" height="2" fill="#7fb62b"/><rect x="952" y="245" width="2" height="2" fill="#85b529"/><rect x="954" y="245" width="2" height="2" fill="#8bb526"/><rect x="956" y="245" width="2" height="2" fill="#91b424"/><rect x="958" y="245" width="2" height="2" fill="#98b322"/><rect x="960" y="245" width="2" height="2" fill="#9eb21f"/><rect x="962" y="245" width="2" height="2" fill="#a5b21d"/><rect x="964" y="245" width="2" height="2" fill="#acb11a"/><rect x="966" y="245" width="2" height="2" fill="#b1ae18"/><rect x="968" y="245" width="2" height="2" fill="#b2a816"/><rect x="970" y="245" width="2" height="2" fill="#b4a316"/><rect x="972" y="245" width="2" height="2" fill="#b59d16"/><rect x="974" y="245" width="2" height="2" fill="#b79816"/><rect x="976" y="245" width="2" height="2" fill="#b89316"/><rect x="978" y="245" width="2" height="2" fill="#ba8f16"/><rect x="980" y="245" width="2" height="2" fill="#bb8a16"/><rect x="900" y="247" width="2" height="2" fill="#16c85b"/><rect x="902" y="247" width="2" height="2" fill="#16c759"/><rect x="904" y="247" width="2" height="2" fill="#16c658"/><rect x="906" y="247" width="2" height="2" fill="#17c556"/><rect x="908" y="247" width="2" height="2" fill="#1bc555"/><rect x="910" y="247" width="2" height="2" fill="#1fc453"/><rect x="912" y="247" width="2" height="2" fill="#23c352"/><rect x="914" y="247" width="2" height="2" fill="#28c250"/><rect x="916" y="247" width="2" height="2" fill="#2cc24e"/><rect x="918" y="247" width="2" height="2" fill="#30c14d"/><rect x="920" y="247" width="2" height="2" fill="#35c04b"/><rect x="922" y="247" width="2" height="2" fill="#39bf49"/><rect x="924" y="247" width="2" height="2" fill="#3ebe47"/><rect x="926" y="247" width="2" height="2" fill="#43be46"/><rect x="928" y="247" width="2" height="2" fill="#47bd44"/><rect x="930" y="247" width="2" height="2" fill="#4cbc42"/><rect x="932" y="247" width="2" height="2" fill="#51bb40"/><rect x="934" y="247" width="2" height="2" fill="#56bb3e"/><rect x="936" y="247" width="2" height="2" fill="#5bba3c"/><rect x="938" y="247" width="2" height="2" fill="#61b93b"/><rect x="940" y="247" width="2" height="2" fill="#66b839"/><rect x="942" y="247" width="2" height="2" fill="#6bb837"/><rect x="944" y="247" width="2" height="2" fill="#71b735"/><rect x="946" y="247" width="2" height="2" fill="#77b632"/><rect x="948" y="247" width="2" height="2" fill="#7cb530"/><rect x="950" y="247" width="2" height="2" fill="#82b52e"/><rect x="952" y="247" width="2" height="2" fill="#88b42c"/><rect x="954" y="247" width="2" height="2" fill="#8fb32a"/><rect x="956" y="247" width="2" height="2" fill="#95b227"/><rect x="958" y="247" width="2" height="2" fill="#9cb225"/><rect x="960" y="247" width="2" height="2" fill="#a2b123"/><rect x="962" y="247" width="2" height="2" fill="#a9b020"/><rect x="964" y="247" width="2" height="2" fill="#b0af1e"/><rect x="966" y="247" width="2" height="2" fill="#b1a91b"/><rect x="968" y="247" width="2" height="2" fill="#b3a318"/><rect x="970" y="247" width="2" height="2" fill="#b49d16"/><rect x="972" y="247" width="2" height="2" fill="#b69816"/><rect x="974" y="247" width="2" height="2" fill="#b79316"/><rect x="976" y="247" width="2" height="2" fill="#b98e16"/><rect x="978" y="247" width="2" height="2" fill="#ba8a16"/><rect x="980" y="247" width="2" height="2" fill="#bc8616"/><rect x="982" y="247" width="2" height="2" fill="#bd8116"/><rect x="900" y="249" width="2" height="2" fill="#16c65e"/><rect x="902" y="249" width="2" height="2" fill="#16c55d"/><rect x="904" y="249" width="2" height="2" fill="#16c55b"/><rect x="906" y="249" width="2" height="2" fill="#18c45a"/><rect x="908" y="249" width="2" height="2" fill="#1cc358"/><rect x="910" y="249" width="2" height="2" fill="#20c257"/><rect x="912" y="249" width="2" height="2" fill="#25c255"/><rect x="914" y="249" width="2" height="2" fill="#29c153"/><rect x="916" y="249" width="2" height="2" fill="#2dc052"/><rect x="918" y="249" width="2" height="2" fill="#32bf50"/><rect x="920" y="249" width="2" height="2" fill="#36bf4e"/><rect x="922" y="249" width="2" height="2" fill="#3bbe4d"/><rect x="924" y="249" width="2" height="2" fill="#40bd4b"/><rect x="926" y="249" width="2" height="2" fill="#44bc49"/><rect x="928" y="249" width="2" height="2" fill="#49bc47"/><rect x="930" y="249" width="2" height="2" fill="#4ebb46"/><rect x="932" y="249" width="2" height="2" fill="#53ba44"/><rect x="934" y="249" width="2" height="2" fill="#58b942"/><rect x="936" y="249" width="2" height="2" fill="#5eb940"/><rect x="938" y="249" width="2" height="2" fill="#63b83e"/><rect x="940" y="249" width="2" height="2" fill="#69b73c"/><rect x="942" y="249" width="2" height="2" fill="#6eb63a"/><rect x="944" y="249" width="2" height="2" fill="#74b638"/><rect x="946" y="249" width="2" height="2" fill="#7ab536"/><rect x="948" y="249" width="2" height="2" fill="#80b434"/><rect x="950" y="249" width="2" height="2" fill="#86b332"/><rect x="952" y="249" width="2" height="2" fill="#8cb330"/><rect x="954" y="249" width="2" height="2" fill="#93b22d"/><rect x="956" y="249" width="2" height="2" fill="#99b12b"/><rect x="958" y="249" width="2" height="2" fill="#a0b029"/><rect x="960" y="249" width="2" height="2" fill="#a7b026"/><rect x="962" y="249" width="2" height="2" fill="#aeaf24"/><rect x="964" y="249" width="2" height="2" fill="#b0a921"/><rect x="966" y="249" width="2" height="2" fill="#b2a31e"/><rect x="968" y="249" width="2" height="2" fill="#b39d1b"/><rect x="970" y="249" width="2" height="2" fill="#b59819"/><rect x="972" y="249" width="2" height="2" fill="#b69316"/><rect x="974" y="249" width="2" height="2" fill="#b88e16"/><rect x="976" y="249" width="2" height="2" fill="#b98a16"/><rect x="978" y="249" width="2" height="2" fill="#bb8516"/><rect x="980" y="249" width="2" height="2" fill="#bc8116"/><rect x="982" y="249" width="2" height="2" fill="#be7d16"/><rect x="984" y="249" width="2" height="2" fill="#bf7916"/><rect x="986" y="249" width="2" height="2" fill="#c17516"/><rect x="898" y="251" width="2" height="2" fill="#16c663"/><rect x="900" y="251" width="2" height="2" fill="#16c562"/><rect x="902" y="251" width="2" height="2" fill="#16c460"/><rect x="904" y="251" width="2" height="2" fill="#16c35f"/><rect x="906" y="251" width="2" height="2" fill="#19c35d"/><rect x="908" y="251" width="2" height="2" fill="#1dc25c"/><rect x="910" y="251" width="2" height="2" fill="#22c15a"/><rect x="912" y="251" width="2" height="2" fill="#26c059"/><rect x="914" y="251" width="2" height="2" fill="#2ac057"/><rect x="916" y="251" width="2" height="2" fill="#2fbf55"/><rect x="918" y="251" width="2" height="2" fill="#33be54"/><rect x="920" y="251" width="2" height="2" fill="#38bd52"/><rect x="922" y="251" width="2" height="2" fill="#3dbd50"/><rect x="924" y="251" width="2" height="2" fill="#42bc4f"/><rect x="926" y="251" width="2" height="2" fill="#46bb4d"/><rect x="928" y="251" width="2" height="2" fill="#4bba4b"/><rect x="930" y="251" width="2" height="2" fill="#50ba49"/><rect x="932" y="251" width="2" height="2" fill="#56b947"/><rect x="934" y="251" width="2" height="2" fill="#5bb846"/><rect x="936" y="251" width="2" height="2" fill="#60b744"/><rect x="938" y="251" width="2" height="2" fill="#66b642"/><rect x="940" y="251" width="2" height="2" fill="#6bb640"/><rect x="942" y="251" width="2" height="2" fill="#71b53e"/><rect x="944" y="251" width="2" height="2" fill="#77b43c"/><rect x="946" y="251" width="2" height="2" fill="#7db33a"/><rect x="948" y="251" width="2" height="2" fill="#83b338"/><rect x="950" y="251" width="2" height="2" fill="#8ab236"/><rect x="952" y="251" width="2" height="2" fill="#90b133"/><rect x="954" y="251" width="2" height="2" fill="#97b031"/><rect x="956" y="251" width="2" height="2" fill="#9eb02f"/><rect x="958" y="251" width="2" height="2" fill="#a5af2c"/><rect x="960" y="251" width="2" height="2" fill="#acae2a"/><rect x="962" y="251" width="2" height="2" fill="#afa927"/><rect x="964" y="251" width="2" height="2" fill="#b1a324"/><rect x="966" y="251" width="2" height="2" fill="#b29e21"/><rect x="968" y="251" width="2" height="2" fill="#b4981e"/><rect x="970" y="251" width="2" height="2" fill="#b5931c"/><rect x="972" y="251" width="2" height="2" fill="#b78e19"/><rect x="974" y="251" width="2" height="2" fill="#b88917"/><rect x="976" y="251" width="2" height="2" fill="#ba8516"/><rect x="978" y="251" width="2" height="2" fill="#bb8116"/><rect x="980" y="251" width="2" height="2" fill="#bd7c16"/><rect x="982" y="251" width="2" height="2" fill="#be7916"/><rect x="984" y="251" width="2" height="2" fill="#c07516"/><rect x="986" y="251" width="2" height="2" fill="#c17116"/><rect x="988" y="251" width="2" height="2" fill="#c36e16"/><rect x="898" y="253" width="2" height="2" fill="#16c467"/><rect x="900" y="253" width="2" height="2" fill="#16c365"/><rect x="902" y="253" width="2" height="2" fill="#16c364"/><rect x="904" y="253" width="2" height="2" fill="#16c262"/><rect x="906" y="253" width="2" height="2" fill="#1ac161"/><rect x="908" y="253" width="2" height="2" fill="#1fc05f"/><rect x="910" y="253" width="2" height="2" fill="#23c05e"/><rect x="912" y="253" width="2" height="2" fill="#27bf5c"/><rect x="914" y="253" width="2" height="2" fill="#2cbe5b"/><rect x="916" y="253" width="2" height="2" fill="#30bd59"/><rect x="918" y="253" width="2" height="2" fill="#35bd57"/><rect x="920" y="253" width="2" height="2" fill="#3abc56"/><rect x="922" y="253" width="2" height="2" fill="#3fbb54"/><rect x="924" y="253" width="2" height="2" fill="#44ba52"/><rect x="926" y="253" width="2" height="2" fill="#49ba51"/><rect x="928" y="253" width="2" height="2" fill="#4eb94f"/><rect x="930" y="253" width="2" height="2" fill="#53b84d"/><rect x="932" y="253" width="2" height="2" fill="#58b74b"/><rect x="934" y="253" width="2" height="2" fill="#5db749"/><rect x="936" y="253" width="2" height="2" fill="#63b648"/><rect x="938" y="253" width="2" height="2" fill="#69b546"/><rect x="940" y="253" width="2" height="2" fill="#6eb444"/><rect x="942" y="253" width="2" height="2" fill="#74b442"/><rect x="944" y="253" width="2" height="2" fill="#7ab340"/><rect x="946" y="253" width="2" height="2" fill="#81b23e"/><rect x="948" y="253" width="2" height="2" fill="#87b13c"/><rect x="950" y="253" width="2" height="2" fill="#8db139"/><rect x="952" y="253" width="2" height="2" fill="#94b037"/><rect x="954" y="253" width="2" height="2" fill="#9baf35"/><rect x="956" y="253" width="2" height="2" fill="#a2ae33"/><rect x="958" y="253" width="2" height="2" fill="#a9ae30"/><rect x="960" y="253" width="2" height="2" fill="#aeaa2d"/><rect x="962" y="253" width="2" height="2" fill="#afa42a"/><rect x="964" y="253" width="2" height="2" fill="#b19e27"/><rect x="966" y="253" width="2" height="2" fill="#b29824"/><rect x="968" y="253" width="2" height="2" fill="#b49322"/><rect x="970" y="253" width="2" height="2" fill="#b58e1f"/><rect x="972" y="253" width="2" height="2" fill="#b7891c"/><rect x="974" y="253" width="2" height="2" fill="#b8841a"/><rect x="976" y="253" width="2" height="2" fill="#ba8018"/><rect x="978" y="253" width="2" height="2" fill="#bb7c16"/><rect x="980" y="253" width="2" height="2" fill="#bd7816"/><rect x="982" y="253" width="2" height="2" fill="#bf7416"/><rect x="984" y="253" width="2" height="2" fill="#c07116"/><rect x="986" y="253" width="2" height="2" fill="#c26d16"/><rect x="988" y="253" width="2" height="2" fill="#c36a16"/><rect x="990" y="253" width="2" height="2" fill="#c56616"/><rect x="898" y="255" width="2" height="2" fill="#16c36a"/><rect x="900" y="255" width="2" height="2" fill="#16c269"/><rect x="902" y="255" width="2" height="2" fill="#16c168"/><rect x="904" y="255" width="2" height="2" fill="#17c166"/><rect x="906" y="255" width="2" height="2" fill="#1cc065"/><rect x="908" y="255" width="2" height="2" fill="#20bf63"/><rect x="910" y="255" width="2" height="2" fill="#24be62"/><rect x="912" y="255" width="2" height="2" fill="#29be60"/><rect x="914" y="255" width="2" height="2" fill="#2dbd5e"/><rect x="916" y="255" width="2" height="2" fill="#32bc5d"/><rect x="918" y="255" width="2" height="2" fill="#37bb5b"/><rect x="920" y="255" width="2" height="2" fill="#3cbb5a"/><rect x="922" y="255" width="2" height="2" fill="#41ba58"/><rect x="924" y="255" width="2" height="2" fill="#46b956"/><rect x="926" y="255" width="2" height="2" fill="#4bb855"/><rect x="928" y="255" width="2" height="2" fill="#50b853"/><rect x="930" y="255" width="2" height="2" fill="#55b751"/><rect x="932" y="255" width="2" height="2" fill="#5bb64f"/><rect x="934" y="255" width="2" height="2" fill="#60b54d"/><rect x="936" y="255" width="2" height="2" fill="#66b54c"/><rect x="938" y="255" width="2" height="2" fill="#6cb44a"/><rect x="940" y="255" width="2" height="2" fill="#72b348"/><rect x="942" y="255" width="2" height="2" fill="#78b246"/><rect x="944" y="255" width="2" height="2" fill="#7eb244"/><rect x="946" y="255" width="2" height="2" fill="#84b142"/><rect x="948" y="255" width="2" height="2" fill="#8bb040"/><rect x="950" y="255" width="2" height="2" fill="#92af3e"/><rect x="952" y="255" width="2" height="2" fill="#99af3b"/><rect x="954" y="255" width="2" height="2" fill="#a0ae39"/><rect x="956" y="255" width="2" height="2" fill="#a7ad37"/><rect x="958" y="255" width="2" height="2" fill="#adab34"/><rect x="960" y="255" width="2" height="2" fill="#aea431"/><rect x="962" y="255" width="2" height="2" fill="#b09e2d"/><rect x="964" y="255" width="2" height="2" fill="#b1982a"/><rect x="966" y="255" width="2" height="2" fill="#b39327"/><rect x="968" y="255" width="2" height="2" fill="#b48e25"/><rect x="970" y="255" width="2" height="2" fill="#b68922"/><rect x="972" y="255" width="2" height="2" fill="#b7841f"/><rect x="974" y="255" width="2" height="2" fill="#b9801d"/><rect x="976" y="255" width="2" height="2" fill="#ba7c1a"/><rect x="978" y="255" width="2" height="2" fill="#bc7718"/><rect x="980" y="255" width="2" height="2" fill="#bd7416"/><rect x="982" y="255" width="2" height="2" fill="#bf7016"/><rect x="984" y="255" width="2" height="2" fill="#c06c16"/><rect x="986" y="255" width="2" height="2" fill="#c26916"/><rect x="988" y="255" width="2" height="2" fill="#c36616"/><rect x="990" y="255" width="2" height="2" fill="#c56216"/><rect x="992" y="255" width="2" height="2" fill="#c65f16"/><rect x="896" y="257" width="2" height="2" fill="#16c270"/><rect x="898" y="257" width="2" height="2" fill="#16c16e"/><rect x="900" y="257" width="2" height="2" fill="#16c16d"/><rect x="902" y="257" width="2" height="2" fill="#16c06b"/><rect x="904" y="257" width="2" height="2" fill="#19bf6a"/><rect x="906" y="257" width="2" height="2" fill="#1dbe68"/><rect x="908" y="257" width="2" height="2" fill="#21be67"/><rect x="910" y="257" width="2" height="2" fill="#26bd65"/><rect x="912" y="257" width="2" height="2" fill="#2abc64"/><rect x="914" y="257" width="2" height="2" fill="#2fbb62"/><rect x="916" y="257" width="2" height="2" fill="#34bb61"/><rect x="918" y="257" width="2" height="2" fill="#39ba5f"/><rect x="920" y="257" width="2" height="2" fill="#3eb95e"/><rect x="922" y="257" width="2" height="2" fill="#43b85c"/><rect x="924" y="257" width="2" height="2" fill="#48b85a"/><rect x="926" y="257" width="2" height="2" fill="#4db759"/><rect x="928" y="257" width="2" height="2" fill="#52b657"/><rect x="930" y="257" width="2" height="2" fill="#58b555"/><rect x="932" y="257" width="2" height="2" fill="#5db553"/><rect x="934" y="257" width="2" height="2" fill="#63b452"/><rect x="936" y="257" width="2" height="2" fill="#69b350"/><rect x="938" y="257" width="2" height="2" fill="#6fb24e"/><rect x="940" y="257" width="2" height="2" fill="#75b24c"/><rect x="942" y="257" width="2" height="2" fill="#7bb14a"/><rect x="944" y="257" width="2" height="2" fill="#82b048"/><rect x="946" y="257" width="2" height="2" fill="#88af46"/><rect x="948" y="257" width="2" height="2" fill="#8faf44"/><rect x="950" y="257" width="2" height="2" fill="#96ae42"/><rect x="952" y="257" width="2" height="2" fill="#9dad40"/><rect x="954" y="257" width="2" height="2" fill="#a5ac3d"/><rect x="956" y="257" width="2" height="2" fill="#acab3b"/><rect x="958" y="257" width="2" height="2" fill="#ada537"/><rect x="960" y="257" width="2" height="2" fill="#af9e34"/><rect x="962" y="257" width="2" height="2" fill="#b09831"/><rect x="964" y="257" width="2" height="2" fill="#b2932d"/><rect x="966" y="257" width="2" height="2" fill="#b38e2a"/><rect x="968" y="257" width="2" height="2" fill="#b58927"/><rect x="970" y="257" width="2" height="2" fill="#b68425"/><rect x="972" y="257" width="2" height="2" fill="#b87f22"/><rect x="974" y="257" width="2" height="2" fill="#b97b20"/><rect x="976" y="257" width="2" height="2" fill="#bb771d"/><rect x="978" y="257" width="2" height="2" fill="#bc731b"/><rect x="980" y="257" width="2" height="2" fill="#be6f19"/><rect x="982" y="257" width="2" height="2" fill="#bf6c16"/><rect x="984" y="257" width="2" height="2" fill="#c16816"/><rect x="986" y="257" width="2" height="2" fill="#c26516"/><rect x="988" y="257" width="2" height="2" fill="#c46216"/><rect x="990" y="257" width="2" height="2" fill="#c55f16"/><rect x="992" y="257" width="2" height="2" fill="#c75c16"/><rect x="994" y="257" width="2" height="2" fill="#c85916"/><rect x="996" y="257" width="2" height="2" fill="#ca5616"/><rect x="896" y="259" width="2" height="2" fill="#16c173"/><rect x="898" y="259" width="2" height="2" fill="#16c072"/><rect x="900" y="259" width="2" height="2" fill="#16bf71"/><rect x="902" y="259" width="2" height="2" fill="#16bf6f"/><rect x="904" y="259" width="2" height="2" fill="#1abe6e"/><rect x="906" y="259" width="2" height="2" fill="#1ebd6c"/><rect x="908" y="259" width="2" height="2" fill="#23bc6b"/><rect x="910" y="259" width="2" height="2" fill="#27bc6a"/><rect x="912" y="259" width="2" height="2" fill="#2cbb68"/><rect x="914" y="259" width="2" height="2" fill="#31ba67"/><rect x="916" y="259" width="2" height="2" fill="#36b965"/><rect x="918" y="259" width="2" height="2" fill="#3bb963"/><rect x="920" y="259" width="2" height="2" fill="#40b862"/><rect x="922" y="259" width="2" height="2" fill="#45b760"/><rect x="924" y="259" width="2" height="2" fill="#4ab65f"/><rect x="926" y="259" width="2" height="2" fill="#4fb65d"/><rect x="928" y="259" width="2" height="2" fill="#55b55b"/><rect x="930" y="259" width="2" height="2" fill="#5ab45a"/><rect x="932" y="259" width="2" height="2" fill="#60b358"/><rect x="934" y="259" width="2" height="2" fill="#66b356"/><rect x="936" y="259" width="2" height="2" fill="#6cb254"/><rect x="938" y="259" width="2" height="2" fill="#72b152"/><rect x="940" y="259" width="2" height="2" fill="#78b050"/><rect x="942" y="259" width="2" height="2" fill="#7fb04f"/><rect x="944" y="259" width="2" height="2" fill="#85af4d"/><rect x="946" y="259" width="2" height="2" fill="#8cae4b"/><rect x="948" y="259" width="2" height="2" fill="#93ad48"/><rect x="950" y="259" width="2" height="2" fill="#9bad46"/><rect x="952" y="259" width="2" height="2" fill="#a2ac44"/><rect x="954" y="259" width="2" height="2" fill="#aaab42"/><rect x="956" y="259" width="2" height="2" fill="#aca53e"/><rect x="958" y="259" width="2" height="2" fill="#ae9f3b"/><rect x="960" y="259" width="2" height="2" fill="#af9937"/><rect x="962" y="259" width="2" height="2" fill="#b19334"/><rect x="964" y="259" width="2" height="2" fill="#b28d30"/><rect x="966" y="259" width="2" height="2" fill="#b4882d"/><rect x="968" y="259" width="2" height="2" fill="#b5842a"/><rect x="970" y="259" width="2" height="2" fill="#b77f28"/><rect x="972" y="259" width="2" height="2" fill="#b87b25"/><rect x="974" y="259" width="2" height="2" fill="#ba7622"/><rect x="976" y="259" width="2" height="2" fill="#bb7220"/><rect x="978" y="259" width="2" height="2" fill="#bd6f1e"/><rect x="980" y="259" width="2" height="2" fill="#be6b1b"/><rect x="982" y="259" width="2" height="2" fill="#c06719"/><rect x="984" y="259" width="2" height="2" fill="#c16417"/><rect x="986" y="259" width="2" height="2" fill="#c36116"/><rect x="988" y="259" width="2" height="2" fill="#c45e16"/><rect x="990" y="259" width="2" height="2" fill="#c65b16"/><rect x="992" y="259" width="2" height="2" fill="#c75816"/><rect x="994" y="259" width="2" height="2" fill="#c95516"/><rect x="996" y="259" width="2" height="2" fill="#ca5216"/><rect x="998" y="259" width="2" height="2" fill="#cc4f16"/><rect x="896" y="261" width="2" height="2" fill="#16c078"/><rect x="898" y="261" width="2" height="2" fill="#16bf76"/><rect x="900" y="261" width="2" height="2" fill="#16be75"/><rect x="902" y="261" width="2" height="2" fill="#17bd73"/><rect x="904" y="261" width="2" height="2" fill="#1bbc72"/><rect x="906" y="261" width="2" height="2" fill="#20bc71"/><rect x="908" y="261" width="2" height="2" fill="#24bb6f"/><rect x="910" y="261" width="2" height="2" fill="#29ba6e"/><rect x="912" y="261" width="2" height="2" fill="#2eb96c"/><rect x="914" y="261" width="2" height="2" fill="#32b96b"/><rect x="916" y="261" width="2" height="2" fill="#37b869"/><rect x="918" y="261" width="2" height="2" fill="#3cb768"/><rect x="920" y="261" width="2" height="2" fill="#42b666"/><rect x="922" y="261" width="2" height="2" fill="#47b665"/><rect x="924" y="261" width="2" height="2" fill="#4cb563"/><rect x="926" y="261" width="2" height="2" fill="#52b461"/><rect x="928" y="261" width="2" height="2" fill="#57b360"/><rect x="930" y="261" width="2" height="2" fill="#5db35e"/><rect x="932" y="261" width="2" height="2" fill="#63b25c"/><rect x="934" y="261" width="2" height="2" fill="#69b15b"/><rect x="936" y="261" width="2" height="2" fill="#6fb059"/><rect x="938" y="261" width="2" height="2" fill="#76b057"/><rect x="940" y="261" width="2" height="2" fill="#7caf55"/><rect x="942" y="261" width="2" height="2" fill="#83ae53"/><rect x="944" y="261" width="2" height="2" fill="#8aad51"/><rect x="946" y="261" width="2" height="2" fill="#91ad4f"/><rect x="948" y="261" width="2" height="2" fill="#98ac4d"/><rect x="950" y="261" width="2" height="2" fill="#9fab4b"/><rect x="952" y="261" width="2" height="2" fill="#a7aa49"/><rect x="954" y="261" width="2" height="2" fill="#aba646"/><rect x="956" y="261" width="2" height="2" fill="#ad9f41"/><rect x="958" y="261" width="2" height="2" fill="#ae993e"/><rect x="960" y="261" width="2" height="2" fill="#b0933a"/><rect x="962" y="261" width="2" height="2" fill="#b18d37"/><rect x="964" y="261" width="2" height="2" fill="#b38833"/><rect x="966" y="261" width="2" height="2" fill="#b48330"/><rect x="968" y="261" width="2" height="2" fill="#b67f2d"/><rect x="970" y="261" width="2" height="2" fill="#b77a2b"/><rect x="972" y="261" width="2" height="2" fill="#b97628"/><rect x="974" y="261" width="2" height="2" fill="#ba7225"/><rect x="976" y="261" width="2" height="2" fill="#bc6e23"/><rect x="978" y="261" width="2" height="2" fill="#bd6a20"/><rect x="980" y="261" width="2" height="2" fill="#bf671e"/><rect x="982" y="261" width="2" height="2" fill="#c0631c"/><rect x="984" y="261" width="2" height="2" fill="#c2601a"/><rect x="986" y="261" width="2" height="2" fill="#c35d17"/><rect x="988" y="261" width="2" height="2" fill="#c55a16"/><rect x="990" y="261" width="2" height="2" fill="#c65716"/><rect x="992" y="261" width="2" height="2" fill="#c85416"/><rect x="994" y="261" width="2" height="2" fill="#c95116"/><rect x="996" y="261" width="2" height="2" fill="#cb4e16"/><rect x="998" y="261" width="2" height="2" fill="#cc4c16"/><rect x="1000" y="261" width="2" height="2" fill="#ce4916"/><rect x="896" y="263" width="2" height="2" fill="#16be7c"/><rect x="898" y="263" width="2" height="2" fill="#16bd7a"/><rect x="900" y="263" width="2" height="2" fill="#16bd79"/><rect x="902" y="263" width="2" height="2" fill="#18bc78"/><rect x="904" y="263" width="2" height="2" fill="#1cbb76"/><rect x="906" y="263" width="2" height="2" fill="#21ba75"/><rect x="908" y="263" width="2" height="2" fill="#26ba74"/><rect x="910" y="263" width="2" height="2" fill="#2ab972"/><rect x="912" y="263" width="2" height="2" fill="#2fb871"/><rect x="914" y="263" width="2" height="2" fill="#34b76f"/><rect x="916" y="263" width="2" height="2" fill="#39b76e"/><rect x="918" y="263" width="2" height="2" fill="#3fb66c"/><rect x="920" y="263" width="2" height="2" fill="#44b56b"/><rect x="922" y="263" width="2" height="2" fill="#49b469"/><rect x="924" y="263" width="2" height="2" fill="#4fb468"/><rect x="926" y="263" width="2" height="2" fill="#54b366"/><rect x="928" y="263" width="2" height="2" fill="#5ab264"/><rect x="930" y="263" width="2" height="2" fill="#60b163"/><rect x="932" y="263" width="2" height="2" fill="#66b161"/><rect x="934" y="263" width="2" height="2" fill="#6cb05f"/><rect x="936" y="263" width="2" height="2" fill="#73af5e"/><rect x="938" y="263" width="2" height="2" fill="#79ae5c"/><rect x="940" y="263" width="2" height="2" fill="#80ae5a"/><rect x="942" y="263" width="2" height="2" fill="#87ad58"/><rect x="944" y="263" width="2" height="2" fill="#8eac56"/><rect x="946" y="263" width="2" height="2" fill="#95ab54"/><rect x="948" y="263" width="2" height="2" fill="#9dab52"/><rect x="950" y="263" width="2" height="2" fill="#a5aa50"/><rect x="952" y="263" width="2" height="2" fill="#aaa64d"/><rect x="954" y="263" width="2" height="2" fill="#ac9f49"/><rect x="956" y="263" width="2" height="2" fill="#ad9945"/><rect x="958" y="263" width="2" height="2" fill="#af9341"/><rect x="960" y="263" width="2" height="2" fill="#b08d3d"/><rect x="962" y="263" width="2" height="2" fill="#b2883a"/><rect x="964" y="263" width="2" height="2" fill="#b38336"/><rect x="966" y="263" width="2" height="2" fill="#b57e33"/><rect x="968" y="263" width="2" height="2" fill="#b67a30"/><rect x="970" y="263" width="2" height="2" fill="#b8752d"/><rect x="972" y="263" width="2" height="2" fill="#b9712b"/><rect x="974" y="263" width="2" height="2" fill="#bb6d28"/><rect x="976" y="263" width="2" height="2" fill="#bc6925"/><rect x="978" y="263" width="2" height="2" fill="#be6623"/><rect x="980" y="263" width="2" height="2" fill="#bf6221"/><rect x="982" y="263" width="2" height="2" fill="#c15f1e"/><rect x="984" y="263" width="2" height="2" fill="#c25c1c"/><rect x="986" y="263" width="2" height="2" fill="#c4591a"/><rect x="988" y="263" width="2" height="2" fill="#c55618"/><rect x="990" y="263" width="2" height="2" fill="#c75316"/><rect x="992" y="263" width="2" height="2" fill="#c85016"/><rect x="994" y="263" width="2" height="2" fill="#ca4d16"/><rect x="996" y="263" width="2" height="2" fill="#cb4b16"/><rect x="998" y="263" width="2" height="2" fill="#cd4816"/><rect x="1000" y="263" width="2" height="2" fill="#ce4616"/><rect x="1002" y="263" width="2" height="2" fill="#d04316"/><rect x="894" y="265" width="2" height="2" fill="#16be81"/><rect x="896" y="265" width="2" height="2" fill="#16bd80"/><rect x="898" y="265" width="2" height="2" fill="#16bc7f"/><rect x="900" y="265" width="2" height="2" fill="#16bb7d"/><rect x="902" y="265" width="2" height="2" fill="#19bb7c"/><rect x="904" y="265" width="2" height="2" fill="#1eba7b"/><rect x="906" y="265" width="2" height="2" fill="#23b979"/><rect x="908" y="265" width="2" height="2" fill="#27b878"/><rect x="910" y="265" width="2" height="2" fill="#2cb877"/><rect x="912" y="265" width="2" height="2" fill="#31b775"/><rect x="914" y="265" width="2" height="2" fill="#36b674"/><rect x="916" y="265" width="2" height="2" fill="#3bb572"/><rect x="918" y="265" width="2" height="2" fill="#41b471"/><rect x="920" y="265" width="2" height="2" fill="#46b46f"/><rect x="922" y="265" width="2" height="2" fill="#4cb36e"/><rect x="924" y="265" width="2" height="2" fill="#51b26c"/><rect x="926" y="265" width="2" height="2" fill="#57b16b"/><rect x="928" y="265" width="2" height="2" fill="#5db169"/><rect x="930" y="265" width="2" height="2" fill="#63b068"/><rect x="932" y="265" width="2" height="2" fill="#69af66"/><rect x="934" y="265" width="2" height="2" fill="#70ae64"/><rect x="936" y="265" width="2" height="2" fill="#76ae63"/><rect x="938" y="265" width="2" height="2" fill="#7dad61"/><rect x="940" y="265" width="2" height="2" fill="#84ac5f"/><rect x="942" y="265" width="2" height="2" fill="#8bab5d"/><rect x="944" y="265" width="2" height="2" fill="#93ab5b"/><rect x="946" y="265" width="2" height="2" fill="#9aaa5a"/><rect x="948" y="265" width="2" height="2" fill="#a2a958"/><rect x="950" y="265" width="2" height="2" fill="#a9a755"/><rect x="952" y="265" width="2" height="2" fill="#aaa050"/><rect x="954" y="265" width="2" height="2" fill="#ac994c"/><rect x="956" y="265" width="2" height="2" fill="#ad9348"/><rect x="958" y="265" width="2" height="2" fill="#af8d44"/><rect x="960" y="265" width="2" height="2" fill="#b08840"/><rect x="962" y="265" width="2" height="2" fill="#b2833d"/><rect x="964" y="265" width="2" height="2" fill="#b37e39"/><rect x="966" y="265" width="2" height="2" fill="#b57936"/><rect x="968" y="265" width="2" height="2" fill="#b67533"/><rect x="970" y="265" width="2" height="2" fill="#b87130"/><rect x="972" y="265" width="2" height="2" fill="#b96d2d"/><rect x="974" y="265" width="2" height="2" fill="#bb692b"/><rect x="976" y="265" width="2" height="2" fill="#bc6528"/><rect x="978" y="265" width="2" height="2" fill="#be6226"/><rect x="980" y="265" width="2" height="2" fill="#c05e23"/><rect x="982" y="265" width="2" height="2" fill="#c15b21"/><rect x="984" y="265" width="2" height="2" fill="#c3581f"/><rect x="986" y="265" width="2" height="2" fill="#c4551d"/><rect x="988" y="265" width="2" height="2" fill="#c6521b"/><rect x="990" y="265" width="2" height="2" fill="#c74f18"/><rect x="992" y="265" width="2" height="2" fill="#c94c16"/><rect x="994" y="265" width="2" height="2" fill="#ca4a16"/><rect x="996" y="265" width="2" height="2" fill="#cc4716"/><rect x="998" y="265" width="2" height="2" fill="#cd4516"/><rect x="1000" y="265" width="2" height="2" fill="#cf4216"/><rect x="1002" y="265" width="2" height="2" fill="#d04016"/><rect x="1004" y="265" width="2" height="2" fill="#d23e16"/><rect x="1006" y="265" width="2" height="2" fill="#d33b16"/><rect x="894" y="267" width="2" height="2" fill="#16bc86"/><rect x="896" y="267" width="2" height="2" fill="#16bb85"/><rect x="898" y="267" width="2" height="2" fill="#16bb83"/><rect x="900" y="267" width="2" height="2" fill="#16ba82"/><rect x="902" y="267" width="2" height="2" fill="#1bb981"/><rect x="904" y="267" width="2" height="2" fill="#1fb87f"/><rect x="906" y="267" width="2" height="2" fill="#24b87e"/><rect x="908" y="267" width="2" height="2" fill="#29b77d"/><rect x="910" y="267" width="2" height="2" fill="#2eb67b"/><rect x="912" y="267" width="2" height="2" fill="#33b57a"/><rect x="914" y="267" width="2" height="2" fill="#38b579"/><rect x="916" y="267" width="2" height="2" fill="#3db477"/><rect x="918" y="267" width="2" height="2" fill="#43b376"/><rect x="920" y="267" width="2" height="2" fill="#48b274"/><rect x="922" y="267" width="2" height="2" fill="#4eb273"/><rect x="924" y="267" width="2" height="2" fill="#54b172"/><rect x="926" y="267" width="2" height="2" fill="#5ab070"/><rect x="928" y="267" width="2" height="2" fill="#60af6e"/><rect x="930" y="267" width="2" height="2" fill="#66af6d"/><rect x="932" y="267" width="2" height="2" fill="#6dae6b"/><rect x="934" y="267" width="2" height="2" fill="#73ad6a"/><rect x="936" y="267" width="2" height="2" fill="#7aac68"/><rect x="938" y="267" width="2" height="2" fill="#81ac66"/><rect x="940" y="267" width="2" height="2" fill="#88ab65"/><rect x="942" y="267" width="2" height="2" fill="#90aa63"/><rect x="944" y="267" width="2" height="2" fill="#98a961"/><rect x="946" y="267" width="2" height="2" fill="#a0a95f"/><rect x="948" y="267" width="2" height="2" fill="#a8a85d"/><rect x="950" y="267" width="2" height="2" fill="#a9a158"/><rect x="952" y="267" width="2" height="2" fill="#ab9a53"/><rect x="954" y="267" width="2" height="2" fill="#ac934f"/><rect x="956" y="267" width="2" height="2" fill="#ae8d4b"/><rect x="958" y="267" width="2" height="2" fill="#af8847"/><rect x="960" y="267" width="2" height="2" fill="#b18243"/><rect x="962" y="267" width="2" height="2" fill="#b27d40"/><rect x="964" y="267" width="2" height="2" fill="#b4793c"/><rect x="966" y="267" width="2" height="2" fill="#b57439"/><rect x="968" y="267" width="2" height="2" fill="#b77036"/><rect x="970" y="267" width="2" height="2" fill="#b86c33"/><rect x="972" y="267" width="2" height="2" fill="#ba6830"/><rect x="974" y="267" width="2" height="2" fill="#bb642d"/><rect x="976" y="267" width="2" height="2" fill="#bd612b"/><rect x="978" y="267" width="2" height="2" fill="#be5d28"/><rect x="980" y="267" width="2" height="2" fill="#c05a26"/><rect x="982" y="267" width="2" height="2" fill="#c15724"/><rect x="984" y="267" width="2" height="2" fill="#c35421"/><rect x="986" y="267" width="2" height="2" fill="#c4511f"/><rect x="988" y="267" width="2" height="2" fill="#c64e1d"/><rect x="990" y="267" width="2" height="2" fill="#c74b1b"/><rect x="992" y="267" width="2" height="2" fill="#c94919"/><rect x="994" y="267" width="2" height="2" fill="#ca4617"/><rect x="996" y="267" width="2" height="2" fill="#cc4416"/><rect x="998" y="267" width="2" height="2" fill="#cd4116"/><rect x="1000" y="267" width="2" height="2" fill="#cf3f16"/><rect x="1002" y="267" width="2" height="2" fill="#d03c16"/><rect x="1004" y="267" width="2" height="2" fill="#d23a16"/><rect x="1006" y="267" width="2" height="2" fill="#d33816"/><rect x="1008" y="267" width="2" height="2" fill="#d53616"/><rect x="894" y="269" width="2" height="2" fill="#16bb8a"/><rect x="896" y="269" width="2" height="2" fill="#16ba89"/><rect x="898" y="269" width="2" height="2" fill="#16b988"/><rect x="900" y="269" width="2" height="2" fill="#17b987"/><rect x="902" y="269" width="2" height="2" fill="#1cb886"/><rect x="904" y="269" width="2" height="2" fill="#21b784"/><rect x="906" y="269" width="2" height="2" fill="#26b683"/><rect x="908" y="269" width="2" height="2" fill="#2bb682"/><rect x="910" y="269" width="2" height="2" fill="#30b580"/><rect x="912" y="269" width="2" height="2" fill="#35b47f"/><rect x="914" y="269" width="2" height="2" fill="#3ab37e"/><rect x="916" y="269" width="2" height="2" fill="#40b37c"/><rect x="918" y="269" width="2" height="2" fill="#45b27b"/><rect x="920" y="269" width="2" height="2" fill="#4bb17a"/><rect x="922" y="269" width="2" height="2" fill="#51b078"/><rect x="924" y="269" width="2" height="2" fill="#57b077"/><rect x="926" y="269" width="2" height="2" fill="#5daf75"/><rect x="928" y="269" width="2" height="2" fill="#63ae74"/><rect x="930" y="269" width="2" height="2" fill="#6aad72"/><rect x="932" y="269" width="2" height="2" fill="#70ad71"/><rect x="934" y="269" width="2" height="2" fill="#77ac6f"/><rect x="936" y="269" width="2" height="2" fill="#7eab6e"/><rect x="938" y="269" width="2" height="2" fill="#86aa6c"/><rect x="940" y="269" width="2" height="2" fill="#8da96a"/><rect x="942" y="269" width="2" height="2" fill="#95a969"/><rect x="944" y="269" width="2" height="2" fill="#9da867"/><rect x="946" y="269" width="2" height="2" fill="#a5a765"/><rect x="948" y="269" width="2" height="2" fill="#a8a160"/><rect x="950" y="269" width="2" height="2" fill="#aa9a5b"/><rect x="952" y="269" width="2" height="2" fill="#ab9456"/><rect x="954" y="269" width="2" height="2" fill="#ad8d52"/><rect x="956" y="269" width="2" height="2" fill="#ae884e"/><rect x="958" y="269" width="2" height="2" fill="#b0824a"/><rect x="960" y="269" width="2" height="2" fill="#b17d46"/><rect x="962" y="269" width="2" height="2" fill="#b37842"/><rect x="964" y="269" width="2" height="2" fill="#b4743f"/><rect x="966" y="269" width="2" height="2" fill="#b66f3c"/><rect x="968" y="269" width="2" height="2" fill="#b76b39"/><rect x="970" y="269" width="2" height="2" fill="#b96736"/><rect x="972" y="269" width="2" height="2" fill="#ba6333"/><rect x="974" y="269" width="2" height="2" fill="#bc6030"/><rect x="976" y="269" width="2" height="2" fill="#bd5c2d"/><rect x="978" y="269" width="2" height="2" fill="#bf592b"/><rect x="980" y="269" width="2" height="2" fill="#c05628"/><rect x="982" y="269" width="2" height="2" fill="#c25326"/><rect x="984" y="269" width="2" height="2" fill="#c35024"/><rect x="986" y="269" width="2" height="2" fill="#c54d22"/><rect x="988" y="269" width="2" height="2" fill="#c64a1f"/><rect x="990" y="269" width="2" height="2" fill="#c8481d"/><rect x="992" y="269" width="2" height="2" fill="#c9451b"/><rect x="994" y="269" width="2" height="2" fill="#cb4219"/><rect x="996" y="269" width="2" height="2" fill="#cc4017"/><rect x="998" y="269" width="2" height="2" fill="#ce3e16"/><rect x="1000" y="269" width="2" height="2" fill="#cf3b16"/><rect x="1002" y="269" width="2" height="2" fill="#d13916"/><rect x="1004" y="269" width="2" height="2" fill="#d23716"/><rect x="1006" y="269" width="2" height="2" fill="#d43516"/><rect x="1008" y="269" width="2" height="2" fill="#d53316"/><rect x="1010" y="269" width="2" height="2" fill="#d73116"/><rect x="892" y="271" width="2" height="2" fill="#16ba90"/><rect x="894" y="271" width="2" height="2" fill="#16b98f"/><rect x="896" y="271" width="2" height="2" fill="#16b98e"/><rect x="898" y="271" width="2" height="2" fill="#16b88d"/><rect x="900" y="271" width="2" height="2" fill="#19b78c"/><rect x="902" y="271" width="2" height="2" fill="#1db68b"/><rect x="904" y="271" width="2" height="2" fill="#22b689"/><rect x="906" y="271" width="2" height="2" fill="#27b588"/><rect x="908" y="271" width="2" height="2" fill="#2cb487"/><rect x="910" y="271" width="2" height="2" fill="#32b386"/><rect x="912" y="271" width="2" height="2" fill="#37b384"/><rect x="914" y="271" width="2" height="2" fill="#3cb283"/><rect x="916" y="271" width="2" height="2" fill="#42b182"/><rect x="918" y="271" width="2" height="2" fill="#48b081"/><rect x="920" y="271" width="2" height="2" fill="#4db07f"/><rect x="922" y="271" width="2" height="2" fill="#54af7e"/><rect x="924" y="271" width="2" height="2" fill="#5aae7c"/><rect x="926" y="271" width="2" height="2" fill="#60ad7b"/><rect x="928" y="271" width="2" height="2" fill="#67ad7a"/><rect x="930" y="271" width="2" height="2" fill="#6dac78"/><rect x="932" y="271" width="2" height="2" fill="#74ab77"/><rect x="934" y="271" width="2" height="2" fill="#7baa75"/><rect x="936" y="271" width="2" height="2" fill="#83aa74"/><rect x="938" y="271" width="2" height="2" fill="#8aa972"/><rect x="940" y="271" width="2" height="2" fill="#92a870"/><rect x="942" y="271" width="2" height="2" fill="#9aa76f"/><rect x="944" y="271" width="2" height="2" fill="#a3a76d"/><rect x="946" y="271" width="2" height="2" fill="#a7a269"/><rect x="948" y="271" width="2" height="2" fill="#a99b64"/><rect x="950" y="271" width="2" height="2" fill="#aa945e"/><rect x="952" y="271" width="2" height="2" fill="#ac8d5a"/><rect x="954" y="271" width="2" height="2" fill="#ad8855"/><rect x="956" y="271" width="2" height="2" fill="#af8251"/><rect x="958" y="271" width="2" height="2" fill="#b07d4d"/><rect x="960" y="271" width="2" height="2" fill="#b27849"/><rect x="962" y="271" width="2" height="2" fill="#b37345"/><rect x="964" y="271" width="2" height="2" fill="#b56f42"/><rect x="966" y="271" width="2" height="2" fill="#b66b3f"/><rect x="968" y="271" width="2" height="2" fill="#b8663b"/><rect x="970" y="271" width="2" height="2" fill="#b96338"/><rect x="972" y="271" width="2" height="2" fill="#bb5f36"/><rect x="974" y="271" width="2" height="2" fill="#bc5c33"/><rect x="976" y="271" width="2" height="2" fill="#be5830"/><rect x="978" y="271" width="2" height="2" fill="#bf552e"/><rect x="980" y="271" width="2" height="2" fill="#c1522b"/><rect x="982" y="271" width="2" height="2" fill="#c24f29"/><rect x="984" y="271" width="2" height="2" fill="#c44c26"/><rect x="986" y="271" width="2" height="2" fill="#c54924"/><rect x="988" y="271" width="2" height="2" fill="#c74622"/><rect x="990" y="271" width="2" height="2" fill="#c84420"/><rect x="992" y="271" width="2" height="2" fill="#ca411e"/><rect x="994" y="271" width="2" height="2" fill="#cb3f1c"/><rect x="996" y="271" width="2" height="2" fill="#cd3c1a"/><rect x="998" y="271" width="2" height="2" fill="#ce3a18"/><rect x="1000" y="271" width="2" height="2" fill="#d03816"/><rect x="1002" y="271" width="2" height="2" fill="#d13616"/><rect x="1004" y="271" width="2" height="2" fill="#d33416"/><rect x="1006" y="271" width="2" height="2" fill="#d43116"/><rect x="1008" y="271" width="2" height="2" fill="#d62f16"/><rect x="1010" y="271" width="2" height="2" fill="#d72d16"/><rect x="1012" y="271" width="2" height="2" fill="#d92b16"/><rect x="892" y="273" width="2" height="2" fill="#16b995"/><rect x="894" y="273" width="2" height="2" fill="#16b894"/><rect x="896" y="273" width="2" height="2" fill="#16b793"/><rect x="898" y="273" width="2" height="2" fill="#16b792"/><rect x="900" y="273" width="2" height="2" fill="#1ab691"/><rect x="902" y="273" width="2" height="2" fill="#1fb590"/><rect x="904" y="273" width="2" height="2" fill="#24b48f"/><rect x="906" y="273" width="2" height="2" fill="#29b48e"/><rect x="908" y="273" width="2" height="2" fill="#2eb38c"/><rect x="910" y="273" width="2" height="2" fill="#34b28b"/><rect x="912" y="273" width="2" height="2" fill="#39b18a"/><rect x="914" y="273" width="2" height="2" fill="#3fb189"/><rect x="916" y="273" width="2" height="2" fill="#44b087"/><rect x="918" y="273" width="2" height="2" fill="#4aaf86"/><rect x="920" y="273" width="2" height="2" fill="#50ae85"/><rect x="922" y="273" width="2" height="2" fill="#56ae84"/><rect x="924" y="273" width="2" height="2" fill="#5dad82"/><rect x="926" y="273" width="2" height="2" fill="#63ac81"/><rect x="928" y="273" width="2" height="2" fill="#6aab80"/><rect x="930" y="273" width="2" height="2" fill="#71ab7e"/><rect x="932" y="273" width="2" height="2" fill="#78aa7d"/><rect x="934" y="273" width="2" height="2" fill="#80a97b"/><rect x="936" y="273" width="2" height="2" fill="#87a87a"/><rect x="938" y="273" width="2" height="2" fill="#8fa879"/><rect x="940" y="273" width="2" height="2" fill="#97a777"/><rect x="942" y="273" width="2" height="2" fill="#a0a675"/><rect x="944" y="273" width="2" height="2" fill="#a6a372"/><rect x="946" y="273" width="2" height="2" fill="#a89b6c"/><rect x="948" y="273" width="2" height="2" fill="#a99467"/><rect x="950" y="273" width="2" height="2" fill="#ab8e61"/><rect x="952" y="273" width="2" height="2" fill="#ac885d"/><rect x="954" y="273" width="2" height="2" fill="#ae8258"/><rect x="956" y="273" width="2" height="2" fill="#af7c54"/><rect x="958" y="273" width="2" height="2" fill="#b17750"/><rect x="960" y="273" width="2" height="2" fill="#b2734c"/><rect x="962" y="273" width="2" height="2" fill="#b46e48"/><rect x="964" y="273" width="2" height="2" fill="#b56a45"/><rect x="966" y="273" width="2" height="2" fill="#b76641"/><rect x="968" y="273" width="2" height="2" fill="#b8623e"/><rect x="970" y="273" width="2" height="2" fill="#ba5e3b"/><rect x="972" y="273" width="2" height="2" fill="#bb5b38"/><rect x="974" y="273" width="2" height="2" fill="#bd5735"/><rect x="976" y="273" width="2" height="2" fill="#be5433"/><rect x="978" y="273" width="2" height="2" fill="#c05130"/><rect x="980" y="273" width="2" height="2" fill="#c14e2e"/><rect x="982" y="273" width="2" height="2" fill="#c34b2b"/><rect x="984" y="273" width="2" height="2" fill="#c44829"/><rect x="986" y="273" width="2" height="2" fill="#c64527"/><rect x="988" y="273" width="2" height="2" fill="#c74324"/><rect x="990" y="273" width="2" height="2" fill="#c94022"/><rect x="992" y="273" width="2" height="2" fill="#ca3e20"/><rect x="994" y="273" width="2" height="2" fill="#cc3b1e"/><rect x="996" y="273" width="2" height="2" fill="#cd391c"/><rect x="998" y="273" width="2" height="2" fill="#cf371a"/><rect x="1000" y="273" width="2" height="2" fill="#d03418"/><rect x="1002" y="273" width="2" height="2" fill="#d23217"/><rect x="1004" y="273" width="2" height="2" fill="#d33016"/><rect x="1006" y="273" width="2" height="2" fill="#d52e16"/><rect x="1008" y="273" width="2" height="2" fill="#d62c16"/><rect x="1010" y="273" width="2" height="2" fill="#d82a16"/><rect x="1012" y="273" width="2" height="2" fill="#d92816"/><rect x="1014" y="273" width="2" height="2" fill="#db2616"/><rect x="1016" y="273" width="2" height="2" fill="#dc2516"/><rect x="892" y="275" width="2" height="2" fill="#16b79b"/><rect x="894" y="275" width="2" height="2" fill="#16b79a"/><rect x="896" y="275" width="2" height="2" fill="#16b699"/><rect x="898" y="275" width="2" height="2" fill="#16b597"/><rect x="900" y="275" width="2" height="2" fill="#1bb496"/><rect x="902" y="275" width="2" height="2" fill="#20b495"/><rect x="904" y="275" width="2" height="2" fill="#25b394"/><rect x="906" y="275" width="2" height="2" fill="#2bb293"/><rect x="908" y="275" width="2" height="2" fill="#30b192"/><rect x="910" y="275" width="2" height="2" fill="#36b191"/><rect x="912" y="275" width="2" height="2" fill="#3bb090"/><rect x="914" y="275" width="2" height="2" fill="#41af8f"/><rect x="916" y="275" width="2" height="2" fill="#47ae8d"/><rect x="918" y="275" width="2" height="2" fill="#4dae8c"/><rect x="920" y="275" width="2" height="2" fill="#53ad8b"/><rect x="922" y="275" width="2" height="2" fill="#5aac8a"/><rect x="924" y="275" width="2" height="2" fill="#60ab89"/><rect x="926" y="275" width="2" height="2" fill="#67ab87"/><rect x="928" y="275" width="2" height="2" fill="#6eaa86"/><rect x="930" y="275" width="2" height="2" fill="#75a985"/><rect x="932" y="275" width="2" height="2" fill="#7da883"/><rect x="934" y="275" width="2" height="2" fill="#84a882"/><rect x="936" y="275" width="2" height="2" fill="#8ca781"/><rect x="938" y="275" width="2" height="2" fill="#95a67f"/><rect x="940" y="275" width="2" height="2" fill="#9da57e"/><rect x="942" y="275" width="2" height="2" fill="#a5a47c"/><rect x="944" y="275" width="2" height="2" fill="#a69c75"/><rect x="946" y="275" width="2" height="2" fill="#a8956f"/><rect x="948" y="275" width="2" height="2" fill="#a98e6a"/><rect x="950" y="275" width="2" height="2" fill="#ab8864"/><rect x="952" y="275" width="2" height="2" fill="#ad825f"/><rect x="954" y="275" width="2" height="2" fill="#ae7c5b"/><rect x="956" y="275" width="2" height="2" fill="#b07757"/><rect x="958" y="275" width="2" height="2" fill="#b17252"/><rect x="960" y="275" width="2" height="2" fill="#b36d4f"/><rect x="962" y="275" width="2" height="2" fill="#b4694b"/><rect x="964" y="275" width="2" height="2" fill="#b66547"/><rect x="966" y="275" width="2" height="2" fill="#b76144"/><rect x="968" y="275" width="2" height="2" fill="#b95d41"/><rect x="970" y="275" width="2" height="2" fill="#ba5a3e"/><rect x="972" y="275" width="2" height="2" fill="#bc563b"/><rect x="974" y="275" width="2" height="2" fill="#bd5338"/><rect x="976" y="275" width="2" height="2" fill="#bf5035"/><rect x="978" y="275" width="2" height="2" fill="#c04d33"/><rect x="980" y="275" width="2" height="2" fill="#c24a30"/><rect x="982" y="275" width="2" height="2" fill="#c3472e"/><rect x="984" y="275" width="2" height="2" fill="#c5442b"/><rect x="986" y="275" width="2" height="2" fill="#c64229"/><rect x="988" y="275" width="2" height="2" fill="#c83f27"/><rect x="990" y="275" width="2" height="2" fill="#c93c25"/><rect x="992" y="275" width="2" height="2" fill="#cb3a23"/><rect x="994" y="275" width="2" height="2" fill="#cc3820"/><rect x="996" y="275" width="2" height="2" fill="#ce351e"/><rect x="998" y="275" width="2" height="2" fill="#cf331d"/><rect x="1000" y="275" width="2" height="2" fill="#d1311b"/><rect x="1002" y="275" width="2" height="2" fill="#d22f19"/><rect x="1004" y="275" width="2" height="2" fill="#d42d17"/><rect x="1006" y="275" width="2" height="2" fill="#d52b16"/><rect x="1008" y="275" width="2" height="2" fill="#d72916"/><rect x="1010" y="275" width="2" height="2" fill="#d82716"/><rect x="1012" y="275" width="2" height="2" fill="#da2516"/><rect x="1014" y="275" width="2" height="2" fill="#db2316"/><rect x="1016" y="275" width="2" height="2" fill="#dd2216"/><rect x="892" y="277" width="2" height="2" fill="#16b6a0"/><rect x="894" y="277" width="2" height="2" fill="#16b59f"/><rect x="896" y="277" width="2" height="2" fill="#16b59e"/><rect x="898" y="277" width="2" height="2" fill="#18b49d"/><rect x="900" y="277" width="2" height="2" fill="#1db39c"/><rect x="902" y="277" width="2" height="2" fill="#22b29b"/><rect x="904" y="277" width="2" height="2" fill="#27b29a"/><rect x="906" y="277" width="2" height="2" fill="#2db199"/><rect x="908" y="277" width="2" height="2" fill="#32b098"/><rect x="910" y="277" width="2" height="2" fill="#38af97"/><rect x="912" y="277" width="2" height="2" fill="#3daf96"/><rect x="914" y="277" width="2" height="2" fill="#43ae95"/><rect x="916" y="277" width="2" height="2" fill="#4aad94"/><rect x="918" y="277" width="2" height="2" fill="#50ac93"/><rect x="920" y="277" width="2" height="2" fill="#56ac92"/><rect x="922" y="277" width="2" height="2" fill="#5dab90"/><rect x="924" y="277" width="2" height="2" fill="#64aa8f"/><rect x="926" y="277" width="2" height="2" fill="#6ba98e"/><rect x="928" y="277" width="2" height="2" fill="#72a98d"/><rect x="930" y="277" width="2" height="2" fill="#7aa88c"/><rect x="932" y="277" width="2" height="2" fill="#81a78b"/><rect x="934" y="277" width="2" height="2" fill="#89a689"/><rect x="936" y="277" width="2" height="2" fill="#92a688"/><rect x="938" y="277" width="2" height="2" fill="#9aa587"/><rect x="940" y="277" width="2" height="2" fill="#a3a486"/><rect x="942" y="277" width="2" height="2" fill="#a59c7f"/><rect x="944" y="277" width="2" height="2" fill="#a79578"/><rect x="946" y="277" width="2" height="2" fill="#a88e72"/><rect x="948" y="277" width="2" height="2" fill="#aa886d"/><rect x="950" y="277" width="2" height="2" fill="#ab8267"/><rect x="952" y="277" width="2" height="2" fill="#ad7c62"/><rect x="954" y="277" width="2" height="2" fill="#ae775e"/><rect x="956" y="277" width="2" height="2" fill="#b07259"/><rect x="958" y="277" width="2" height="2" fill="#b16d55"/><rect x="960" y="277" width="2" height="2" fill="#b36851"/><rect x="962" y="277" width="2" height="2" fill="#b4644e"/><rect x="964" y="277" width="2" height="2" fill="#b6604a"/><rect x="966" y="277" width="2" height="2" fill="#b75c47"/><rect x="968" y="277" width="2" height="2" fill="#b95943"/><rect x="970" y="277" width="2" height="2" fill="#ba5540"/><rect x="972" y="277" width="2" height="2" fill="#bc523d"/><rect x="974" y="277" width="2" height="2" fill="#bd4f3b"/><rect x="976" y="277" width="2" height="2" fill="#bf4c38"/><rect x="978" y="277" width="2" height="2" fill="#c04935"/><rect x="980" y="277" width="2" height="2" fill="#c24633"/><rect x="982" y="277" width="2" height="2" fill="#c44330"/><rect x="984" y="277" width="2" height="2" fill="#c5402e"/><rect x="986" y="277" width="2" height="2" fill="#c73e2b"/><rect x="988" y="277" width="2" height="2" fill="#c83b29"/><rect x="990" y="277" width="2" height="2" fill="#ca3927"/><rect x="992" y="277" width="2" height="2" fill="#cb3625"/><rect x="994" y="277" width="2" height="2" fill="#cd3423"/><rect x="996" y="277" width="2" height="2" fill="#ce3221"/><rect x="998" y="277" width="2" height="2" fill="#d0301f"/><rect x="1000" y="277" width="2" height="2" fill="#d12e1d"/><rect x="1002" y="277" width="2" height="2" fill="#d32c1b"/><rect x="1004" y="277" width="2" height="2" fill="#d42a19"/><rect x="1006" y="277" width="2" height="2" fill="#d62817"/><rect x="1008" y="277" width="2" height="2" fill="#d72616"/><rect x="1010" y="277" width="2" height="2" fill="#d92416"/><rect x="1012" y="277" width="2" height="2" fill="#da2216"/><rect x="1014" y="277" width="2" height="2" fill="#dc2016"/><rect x="1016" y="277" width="2" height="2" fill="#dd1e16"/><rect x="890" y="279" width="2" height="2" fill="#16b6a7"/><rect x="892" y="279" width="2" height="2" fill="#16b5a6"/><rect x="894" y="279" width="2" height="2" fill="#16b4a5"/><rect x="896" y="279" width="2" height="2" fill="#16b3a4"/><rect x="898" y="279" width="2" height="2" fill="#19b2a3"/><rect x="900" y="279" width="2" height="2" fill="#1eb2a2"/><rect x="902" y="279" width="2" height="2" fill="#24b1a1"/><rect x="904" y="279" width="2" height="2" fill="#29b0a0"/><rect x="906" y="279" width="2" height="2" fill="#2faf9f"/><rect x="908" y="279" width="2" height="2" fill="#34af9e"/><rect x="910" y="279" width="2" height="2" fill="#3aae9d"/><rect x="912" y="279" width="2" height="2" fill="#40ad9c"/><rect x="914" y="279" width="2" height="2" fill="#46ac9b"/><rect x="916" y="279" width="2" height="2" fill="#4cac9a"/><rect x="918" y="279" width="2" height="2" fill="#53ab99"/><rect x="920" y="279" width="2" height="2" fill="#59aa98"/><rect x="922" y="279" width="2" height="2" fill="#60a997"/><rect x="924" y="279" width="2" height="2" fill="#67a996"/><rect x="926" y="279" width="2" height="2" fill="#6fa895"/><rect x="928" y="279" width="2" height="2" fill="#76a794"/><rect x="930" y="279" width="2" height="2" fill="#7ea693"/><rect x="932" y="279" width="2" height="2" fill="#86a692"/><rect x="934" y="279" width="2" height="2" fill="#8fa591"/><rect x="936" y="279" width="2" height="2" fill="#98a490"/><rect x="938" y="279" width="2" height="2" fill="#a1a38f"/><rect x="940" y="279" width="2" height="2" fill="#a49d89"/><rect x="942" y="279" width="2" height="2" fill="#a69582"/><rect x="944" y="279" width="2" height="2" fill="#a78e7b"/><rect x="946" y="279" width="2" height="2" fill="#a98875"/><rect x="948" y="279" width="2" height="2" fill="#aa8170"/><rect x="950" y="279" width="2" height="2" fill="#ac7c6a"/><rect x="952" y="279" width="2" height="2" fill="#ad7665"/><rect x="954" y="279" width="2" height="2" fill="#af7161"/><rect x="956" y="279" width="2" height="2" fill="#b06c5c"/><rect x="958" y="279" width="2" height="2" fill="#b26858"/><rect x="960" y="279" width="2" height="2" fill="#b36354"/><rect x="962" y="279" width="2" height="2" fill="#b55f50"/><rect x="964" y="279" width="2" height="2" fill="#b65b4d"/><rect x="966" y="279" width="2" height="2" fill="#b85849"/><rect x="968" y="279" width="2" height="2" fill="#b95446"/><rect x="970" y="279" width="2" height="2" fill="#bb5143"/><rect x="972" y="279" width="2" height="2" fill="#bc4e40"/><rect x="974" y="279" width="2" height="2" fill="#be4a3d"/><rect x="976" y="279" width="2" height="2" fill="#bf473a"/><rect x="978" y="279" width="2" height="2" fill="#c14538"/><rect x="980" y="279" width="2" height="2" fill="#c24235"/><rect x="982" y="279" width="2" height="2" fill="#c43f33"/><rect x="984" y="279" width="2" height="2" fill="#c53d30"/><rect x="986" y="279" width="2" height="2" fill="#c73a2e"/><rect x="988" y="279" width="2" height="2" fill="#c8382c"/><rect x="990" y="279" width="2" height="2" fill="#ca3529"/><rect x="992" y="279" width="2" height="2" fill="#cb3327"/><rect x="994" y="279" width="2" height="2" fill="#cd3125"/><rect x="996" y="279" width="2" height="2" fill="#ce2f23"/><rect x="998" y="279" width="2" height="2" fill="#d02c21"/><rect x="1000" y="279" width="2" height="2" fill="#d12a1f"/><rect x="1002" y="279" width="2" height="2" fill="#d3281d"/><rect x="1004" y="279" width="2" height="2" fill="#d4261b"/><rect x="1006" y="279" width="2" height="2" fill="#d6241a"/><rect x="1008" y="279" width="2" height="2" fill="#d72318"/><rect x="1010" y="279" width="2" height="2" fill="#d92116"/><rect x="1012" y="279" width="2" height="2" fill="#db1f16"/><rect x="1014" y="279" width="2" height="2" fill="#dc1d16"/><rect x="1016" y="279" width="2" height="2" fill="#de1b16"/><rect x="890" y="281" width="2" height="2" fill="#16b4ad"/><rect x="892" y="281" width="2" height="2" fill="#16b3ac"/><rect x="894" y="281" width="2" height="2" fill="#16b3ab"/><rect x="896" y="281" width="2" height="2" fill="#16b2aa"/><rect x="898" y="281" width="2" height="2" fill="#1bb1a9"/><rect x="900" y="281" width="2" height="2" fill="#20b0a8"/><rect x="902" y="281" width="2" height="2" fill="#25b0a7"/><rect x="904" y="281" width="2" height="2" fill="#2bafa7"/><rect x="906" y="281" width="2" height="2" fill="#31aea6"/><rect x="908" y="281" width="2" height="2" fill="#36ada5"/><rect x="910" y="281" width="2" height="2" fill="#3cada4"/><rect x="912" y="281" width="2" height="2" fill="#43aca3"/><rect x="914" y="281" width="2" height="2" fill="#49aba2"/><rect x="916" y="281" width="2" height="2" fill="#4faaa1"/><rect x="918" y="281" width="2" height="2" fill="#56aaa1"/><rect x="920" y="281" width="2" height="2" fill="#5da9a0"/><rect x="922" y="281" width="2" height="2" fill="#64a89f"/><rect x="924" y="281" width="2" height="2" fill="#6ba79e"/><rect x="926" y="281" width="2" height="2" fill="#73a79d"/><rect x="928" y="281" width="2" height="2" fill="#7ba69c"/><rect x="930" y="281" width="2" height="2" fill="#83a59b"/><rect x="932" y="281" width="2" height="2" fill="#8ca49a"/><rect x="934" y="281" width="2" height="2" fill="#95a499"/><rect x="936" y="281" width="2" height="2" fill="#9ea398"/><rect x="938" y="281" width="2" height="2" fill="#a39e94"/><rect x="940" y="281" width="2" height="2" fill="#a5968c"/><rect x="942" y="281" width="2" height="2" fill="#a68f85"/><rect x="944" y="281" width="2" height="2" fill="#a8887e"/><rect x="946" y="281" width="2" height="2" fill="#a98178"/><rect x="948" y="281" width="2" height="2" fill="#ab7b72"/><rect x="950" y="281" width="2" height="2" fill="#ac766d"/><rect x="952" y="281" width="2" height="2" fill="#ae7168"/><rect x="954" y="281" width="2" height="2" fill="#af6c63"/><rect x="956" y="281" width="2" height="2" fill="#b1675f"/><rect x="958" y="281" width="2" height="2" fill="#b2635b"/><rect x="960" y="281" width="2" height="2" fill="#b45f57"/><rect x="962" y="281" width="2" height="2" fill="#b55b53"/><rect x="964" y="281" width="2" height="2" fill="#b7574f"/><rect x="966" y="281" width="2" height="2" fill="#b8534c"/><rect x="968" y="281" width="2" height="2" fill="#ba5049"/><rect x="970" y="281" width="2" height="2" fill="#bb4d46"/><rect x="972" y="281" width="2" height="2" fill="#bd4943"/><rect x="974" y="281" width="2" height="2" fill="#be4640"/><rect x="976" y="281" width="2" height="2" fill="#c0433d"/><rect x="978" y="281" width="2" height="2" fill="#c1413a"/><rect x="980" y="281" width="2" height="2" fill="#c33e38"/><rect x="982" y="281" width="2" height="2" fill="#c43b35"/><rect x="984" y="281" width="2" height="2" fill="#c63933"/><rect x="986" y="281" width="2" height="2" fill="#c73630"/><rect x="988" y="281" width="2" height="2" fill="#c9342e"/><rect x="990" y="281" width="2" height="2" fill="#ca322c"/><rect x="992" y="281" width="2" height="2" fill="#cc2f2a"/><rect x="994" y="281" width="2" height="2" fill="#cd2d27"/><rect x="996" y="281" width="2" height="2" fill="#cf2b25"/><rect x="998" y="281" width="2" height="2" fill="#d02923"/><rect x="1000" y="281" width="2" height="2" fill="#d22721"/><rect x="1002" y="281" width="2" height="2" fill="#d3251f"/><rect x="1004" y="281" width="2" height="2" fill="#d5231e"/><rect x="1006" y="281" width="2" height="2" fill="#d6211c"/><rect x="1008" y="281" width="2" height="2" fill="#d81f1a"/><rect x="1010" y="281" width="2" height="2" fill="#d91e18"/><rect x="1012" y="281" width="2" height="2" fill="#db1c17"/><rect x="1014" y="281" width="2" height="2" fill="#dc1a16"/><rect x="1016" y="281" width="2" height="2" fill="#de1816"/><rect x="890" y="283" width="2" height="2" fill="#16b3b3"/><rect x="892" y="283" width="2" height="2" fill="#16b2b2"/><rect x="894" y="283" width="2" height="2" fill="#16b1b1"/><rect x="896" y="283" width="2" height="2" fill="#17b1b0"/><rect x="898" y="283" width="2" height="2" fill="#1cb0b0"/><rect x="900" y="283" width="2" height="2" fill="#22afaf"/><rect x="902" y="283" width="2" height="2" fill="#27aeae"/><rect x="904" y="283" width="2" height="2" fill="#2daead"/><rect x="906" y="283" width="2" height="2" fill="#33adad"/><rect x="908" y="283" width="2" height="2" fill="#39acac"/><rect x="910" y="283" width="2" height="2" fill="#3fabab"/><rect x="912" y="283" width="2" height="2" fill="#45abaa"/><rect x="914" y="283" width="2" height="2" fill="#4caaaa"/><rect x="916" y="283" width="2" height="2" fill="#53a9a9"/><rect x="918" y="283" width="2" height="2" fill="#59a8a8"/><rect x="920" y="283" width="2" height="2" fill="#61a7a7"/><rect x="922" y="283" width="2" height="2" fill="#68a7a7"/><rect x="924" y="283" width="2" height="2" fill="#70a6a6"/><rect x="926" y="283" width="2" height="2" fill="#78a5a5"/><rect x="928" y="283" width="2" height="2" fill="#80a4a4"/><rect x="930" y="283" width="2" height="2" fill="#89a4a4"/><rect x="932" y="283" width="2" height="2" fill="#92a3a3"/><rect x="934" y="283" width="2" height="2" fill="#9ba2a2"/><rect x="936" y="283" width="2" height="2" fill="#a29f9f"/><rect x="938" y="283" width="2" height="2" fill="#a49797"/><rect x="940" y="283" width="2" height="2" fill="#a58f8f"/><rect x="942" y="283" width="2" height="2" fill="#a78888"/><rect x="944" y="283" width="2" height="2" fill="#a88181"/><rect x="946" y="283" width="2" height="2" fill="#aa7b7b"/><rect x="948" y="283" width="2" height="2" fill="#ab7575"/><rect x="950" y="283" width="2" height="2" fill="#ad7070"/><rect x="952" y="283" width="2" height="2" fill="#ae6b6b"/><rect x="954" y="283" width="2" height="2" fill="#b06666"/><rect x="956" y="283" width="2" height="2" fill="#b16262"/><rect x="958" y="283" width="2" height="2" fill="#b35e5e"/><rect x="960" y="283" width="2" height="2" fill="#b45a5a"/><rect x="962" y="283" width="2" height="2" fill="#b65656"/><rect x="964" y="283" width="2" height="2" fill="#b75252"/><rect x="966" y="283" width="2" height="2" fill="#b94f4f"/><rect x="968" y="283" width="2" height="2" fill="#ba4b4b"/><rect x="970" y="283" width="2" height="2" fill="#bc4848"/><rect x="972" y="283" width="2" height="2" fill="#bd4545"/><rect x="974" y="283" width="2" height="2" fill="#bf4242"/><rect x="976" y="283" width="2" height="2" fill="#c03f3f"/><rect x="978" y="283" width="2" height="2" fill="#c23d3d"/><rect x="980" y="283" width="2" height="2" fill="#c33a3a"/><rect x="982" y="283" width="2" height="2" fill="#c53837"/><rect x="984" y="283" width="2" height="2" fill="#c63535"/><rect x="986" y="283" width="2" height="2" fill="#c83333"/><rect x="988" y="283" width="2" height="2" fill="#c93030"/><rect x="990" y="283" width="2" height="2" fill="#cb2e2e"/><rect x="992" y="283" width="2" height="2" fill="#cc2c2c"/><rect x="994" y="283" width="2" height="2" fill="#ce2a2a"/><rect x="996" y="283" width="2" height="2" fill="#cf2828"/><rect x="998" y="283" width="2" height="2" fill="#d12626"/><rect x="1000" y="283" width="2" height="2" fill="#d22424"/><rect x="1002" y="283" width="2" height="2" fill="#d42222"/><rect x="1004" y="283" width="2" height="2" fill="#d52020"/><rect x="1006" y="283" width="2" height="2" fill="#d71e1e"/><rect x="1008" y="283" width="2" height="2" fill="#d81c1c"/><rect x="1010" y="283" width="2" height="2" fill="#da1a1a"/><rect x="1012" y="283" width="2" height="2" fill="#db1919"/><rect x="1014" y="283" width="2" height="2" fill="#dd1717"/><rect x="1016" y="283" width="2" height="2" fill="#de1616"/><rect x="890" y="285" width="2" height="2" fill="#16acb4"/><rect x="892" y="285" width="2" height="2" fill="#16abb3"/><rect x="894" y="285" width="2" height="2" fill="#16abb2"/><rect x="896" y="285" width="2" height="2" fill="#18aab1"/><rect x="898" y="285" width="2" height="2" fill="#1ea9b1"/><rect x="900" y="285" width="2" height="2" fill="#23a8b0"/><rect x="902" y="285" width="2" height="2" fill="#28a7af"/><rect x="904" y="285" width="2" height="2" fill="#2ea6ae"/><rect x="906" y="285" width="2" height="2" fill="#34a5ae"/><rect x="908" y="285" width="2" height="2" fill="#3aa5ad"/><rect x="910" y="285" width="2" height="2" fill="#40a4ac"/><rect x="912" y="285" width="2" height="2" fill="#46a3ab"/><rect x="914" y="285" width="2" height="2" fill="#4ca2ab"/><rect x="916" y="285" width="2" height="2" fill="#53a1aa"/><rect x="918" y="285" width="2" height="2" fill="#5aa0a9"/><rect x="920" y="285" width="2" height="2" fill="#619fa8"/><rect x="922" y="285" width="2" height="2" fill="#689ea8"/><rect x="924" y="285" width="2" height="2" fill="#709ea7"/><rect x="926" y="285" width="2" height="2" fill="#789da6"/><rect x="928" y="285" width="2" height="2" fill="#809ca5"/><rect x="930" y="285" width="2" height="2" fill="#889ba5"/><rect x="932" y="285" width="2" height="2" fill="#919aa4"/><rect x="934" y="285" width="2" height="2" fill="#9a99a3"/><rect x="936" y="285" width="2" height="2" fill="#a397a2"/><rect x="938" y="285" width="2" height="2" fill="#a48f99"/><rect x="940" y="285" width="2" height="2" fill="#a68892"/><rect x="942" y="285" width="2" height="2" fill="#a7818b"/><rect x="944" y="285" width="2" height="2" fill="#a97b84"/><rect x="946" y="285" width="2" height="2" fill="#aa757e"/><rect x="948" y="285" width="2" height="2" fill="#ac7078"/><rect x="950" y="285" width="2" height="2" fill="#ad6a73"/><rect x="952" y="285" width="2" height="2" fill="#af666e"/><rect x="954" y="285" width="2" height="2" fill="#b06169"/><rect x="956" y="285" width="2" height="2" fill="#b25d64"/><rect x="958" y="285" width="2" height="2" fill="#b35960"/><rect x="960" y="285" width="2" height="2" fill="#b5555c"/><rect x="962" y="285" width="2" height="2" fill="#b65158"/><rect x="964" y="285" width="2" height="2" fill="#b84e55"/><rect x="966" y="285" width="2" height="2" fill="#b94a51"/><rect x="968" y="285" width="2" height="2" fill="#bb474e"/><rect x="970" y="285" width="2" height="2" fill="#bc444b"/><rect x="972" y="285" width="2" height="2" fill="#be4148"/><rect x="974" y="285" width="2" height="2" fill="#bf3e45"/><rect x="976" y="285" width="2" height="2" fill="#c13b42"/><rect x="978" y="285" width="2" height="2" fill="#c2393f"/><rect x="980" y="285" width="2" height="2" fill="#c4363c"/><rect x="982" y="285" width="2" height="2" fill="#c5343a"/><rect x="984" y="285" width="2" height="2" fill="#c73137"/><rect x="986" y="285" width="2" height="2" fill="#c82f35"/><rect x="988" y="285" width="2" height="2" fill="#ca2d33"/><rect x="990" y="285" width="2" height="2" fill="#cb2b30"/><rect x="992" y="285" width="2" height="2" fill="#cd282e"/><rect x="994" y="285" width="2" height="2" fill="#ce262c"/><rect x="996" y="285" width="2" height="2" fill="#d0242a"/><rect x="998" y="285" width="2" height="2" fill="#d12228"/><rect x="1000" y="285" width="2" height="2" fill="#d32026"/><rect x="1002" y="285" width="2" height="2" fill="#d41f24"/><rect x="1004" y="285" width="2" height="2" fill="#d61d22"/><rect x="1006" y="285" width="2" height="2" fill="#d71b20"/><rect x="1008" y="285" width="2" height="2" fill="#d9191e"/><rect x="1010" y="285" width="2" height="2" fill="#da171d"/><rect x="1012" y="285" width="2" height="2" fill="#dc161b"/><rect x="1014" y="285" width="2" height="2" fill="#dd1619"/><rect x="1016" y="285" width="2" height="2" fill="#df1617"/><rect x="888" y="287" width="2" height="2" fill="#16a7b5"/><rect x="890" y="287" width="2" height="2" fill="#16a6b5"/><rect x="892" y="287" width="2" height="2" fill="#16a5b4"/><rect x="894" y="287" width="2" height="2" fill="#16a4b3"/><rect x="896" y="287" width="2" height="2" fill="#1aa3b2"/><rect x="898" y="287" width="2" height="2" fill="#1fa2b2"/><rect x="900" y="287" width="2" height="2" fill="#24a1b1"/><rect x="902" y="287" width="2" height="2" fill="#2aa0b0"/><rect x="904" y="287" width="2" height="2" fill="#2f9faf"/><rect x="906" y="287" width="2" height="2" fill="#359eaf"/><rect x="908" y="287" width="2" height="2" fill="#3b9dae"/><rect x="910" y="287" width="2" height="2" fill="#419cad"/><rect x="912" y="287" width="2" height="2" fill="#479bac"/><rect x="914" y="287" width="2" height="2" fill="#4d9aac"/><rect x="916" y="287" width="2" height="2" fill="#5499ab"/><rect x="918" y="287" width="2" height="2" fill="#5a98aa"/><rect x="920" y="287" width="2" height="2" fill="#6197a9"/><rect x="922" y="287" width="2" height="2" fill="#6896a9"/><rect x="924" y="287" width="2" height="2" fill="#7095a8"/><rect x="926" y="287" width="2" height="2" fill="#7794a7"/><rect x="928" y="287" width="2" height="2" fill="#7f93a6"/><rect x="930" y="287" width="2" height="2" fill="#8792a6"/><rect x="932" y="287" width="2" height="2" fill="#9091a5"/><rect x="934" y="287" width="2" height="2" fill="#9990a4"/><rect x="936" y="287" width="2" height="2" fill="#a28fa3"/><rect x="938" y="287" width="2" height="2" fill="#a4889c"/><rect x="940" y="287" width="2" height="2" fill="#a68195"/><rect x="942" y="287" width="2" height="2" fill="#a77b8d"/><rect x="944" y="287" width="2" height="2" fill="#a97587"/><rect x="946" y="287" width="2" height="2" fill="#aa6f81"/><rect x="948" y="287" width="2" height="2" fill="#ac6a7b"/><rect x="950" y="287" width="2" height="2" fill="#ae6576"/><rect x="952" y="287" width="2" height="2" fill="#af6070"/><rect x="954" y="287" width="2" height="2" fill="#b15c6c"/><rect x="956" y="287" width="2" height="2" fill="#b25867"/><rect x="958" y="287" width="2" height="2" fill="#b45463"/><rect x="960" y="287" width="2" height="2" fill="#b5505f"/><rect x="962" y="287" width="2" height="2" fill="#b74d5b"/><rect x="964" y="287" width="2" height="2" fill="#b84957"/><rect x="966" y="287" width="2" height="2" fill="#ba4654"/><rect x="968" y="287" width="2" height="2" fill="#bb4350"/><rect x="970" y="287" width="2" height="2" fill="#bd404d"/><rect x="972" y="287" width="2" height="2" fill="#be3d4a"/><rect x="974" y="287" width="2" height="2" fill="#c03a47"/><rect x="976" y="287" width="2" height="2" fill="#c13744"/><rect x="978" y="287" width="2" height="2" fill="#c33541"/><rect x="980" y="287" width="2" height="2" fill="#c4323f"/><rect x="982" y="287" width="2" height="2" fill="#c6303c"/><rect x="984" y="287" width="2" height="2" fill="#c72e3a"/><rect x="986" y="287" width="2" height="2" fill="#c92b37"/><rect x="988" y="287" width="2" height="2" fill="#ca2935"/><rect x="990" y="287" width="2" height="2" fill="#cc2733"/><rect x="992" y="287" width="2" height="2" fill="#cd2530"/><rect x="994" y="287" width="2" height="2" fill="#cf232e"/><rect x="996" y="287" width="2" height="2" fill="#d0212c"/><rect x="998" y="287" width="2" height="2" fill="#d21f2a"/><rect x="1000" y="287" width="2" height="2" fill="#d31d28"/><rect x="1002" y="287" width="2" height="2" fill="#d51b26"/><rect x="1004" y="287" width="2" height="2" fill="#d61924"/><rect x="1006" y="287" width="2" height="2" fill="#d81822"/><rect x="1008" y="287" width="2" height="2" fill="#d91620"/><rect x="1010" y="287" width="2" height="2" fill="#db161f"/><rect x="1012" y="287" width="2" height="2" fill="#dc161d"/><rect x="1014" y="287" width="2" height="2" fill="#de161b"/><rect x="1016" y="287" width="2" height="2" fill="#df1619"/><rect x="888" y="289" width="2" height="2" fill="#16a1b6"/><rect x="890" y="289" width="2" height="2" fill="#16a0b6"/><rect x="892" y="289" width="2" height="2" fill="#169fb5"/><rect x="894" y="289" width="2" height="2" fill="#169eb4"/><rect x="896" y="289" width="2" height="2" fill="#1b9db3"/><rect x="898" y="289" width="2" height="2" fill="#209cb3"/><rect x="900" y="289" width="2" height="2" fill="#259bb2"/><rect x="902" y="289" width="2" height="2" fill="#2b9ab1"/><rect x="904" y="289" width="2" height="2" fill="#3098b0"/><rect x="906" y="289" width="2" height="2" fill="#3697b0"/><rect x="908" y="289" width="2" height="2" fill="#3c96af"/><rect x="910" y="289" width="2" height="2" fill="#4195ae"/><rect x="912" y="289" width="2" height="2" fill="#4794ad"/><rect x="914" y="289" width="2" height="2" fill="#4e93ad"/><rect x="916" y="289" width="2" height="2" fill="#5492ac"/><rect x="918" y="289" width="2" height="2" fill="#5b91ab"/><rect x="920" y="289" width="2" height="2" fill="#6190aa"/><rect x="922" y="289" width="2" height="2" fill="#688faa"/><rect x="924" y="289" width="2" height="2" fill="#708ea9"/><rect x="926" y="289" width="2" height="2" fill="#778ca8"/><rect x="928" y="289" width="2" height="2" fill="#7f8ba7"/><rect x="930" y="289" width="2" height="2" fill="#878aa7"/><rect x="932" y="289" width="2" height="2" fill="#8f89a6"/><rect x="934" y="289" width="2" height="2" fill="#9787a5"/><rect x="936" y="289" width="2" height="2" fill="#a086a4"/><rect x="938" y="289" width="2" height="2" fill="#a5819f"/><rect x="940" y="289" width="2" height="2" fill="#a67b97"/><rect x="942" y="289" width="2" height="2" fill="#a87490"/><rect x="944" y="289" width="2" height="2" fill="#a96f8a"/><rect x="946" y="289" width="2" height="2" fill="#ab6983"/><rect x="948" y="289" width="2" height="2" fill="#ac647e"/><rect x="950" y="289" width="2" height="2" fill="#ae5f78"/><rect x="952" y="289" width="2" height="2" fill="#af5b73"/><rect x="954" y="289" width="2" height="2" fill="#b1576e"/><rect x="956" y="289" width="2" height="2" fill="#b2536a"/><rect x="958" y="289" width="2" height="2" fill="#b44f66"/><rect x="960" y="289" width="2" height="2" fill="#b54b61"/><rect x="962" y="289" width="2" height="2" fill="#b7485e"/><rect x="964" y="289" width="2" height="2" fill="#b8455a"/><rect x="966" y="289" width="2" height="2" fill="#ba4156"/><rect x="968" y="289" width="2" height="2" fill="#bb3e53"/><rect x="970" y="289" width="2" height="2" fill="#bd3c50"/><rect x="972" y="289" width="2" height="2" fill="#be394d"/><rect x="974" y="289" width="2" height="2" fill="#c0364a"/><rect x="976" y="289" width="2" height="2" fill="#c13447"/><rect x="978" y="289" width="2" height="2" fill="#c33144"/><rect x="980" y="289" width="2" height="2" fill="#c52f41"/><rect x="982" y="289" width="2" height="2" fill="#c62c3f"/><rect x="984" y="289" width="2" height="2" fill="#c82a3c"/><rect x="986" y="289" width="2" height="2" fill="#c9283a"/><rect x="988" y="289" width="2" height="2" fill="#cb2637"/><rect x="990" y="289" width="2" height="2" fill="#cc2435"/><rect x="992" y="289" width="2" height="2" fill="#ce2233"/><rect x="994" y="289" width="2" height="2" fill="#cf2030"/><rect x="996" y="289" width="2" height="2" fill="#d11e2e"/><rect x="998" y="289" width="2" height="2" fill="#d21c2c"/><rect x="1000" y="289" width="2" height="2" fill="#d41a2a"/><rect x="1002" y="289" width="2" height="2" fill="#d51828"/><rect x="1004" y="289" width="2" height="2" fill="#d71626"/><rect x="1006" y="289" width="2" height="2" fill="#d81624"/><rect x="1008" y="289" width="2" height="2" fill="#da1623"/><rect x="1010" y="289" width="2" height="2" fill="#db1621"/><rect x="1012" y="289" width="2" height="2" fill="#dd161f"/><rect x="1014" y="289" width="2" height="2" fill="#de161d"/><rect x="1016" y="289" width="2" height="2" fill="#e0161c"/><rect x="888" y="291" width="2" height="2" fill="#169bb7"/><rect x="890" y="291" width="2" height="2" fill="#1699b7"/><rect x="892" y="291" width="2" height="2" fill="#1698b6"/><rect x="894" y="291" width="2" height="2" fill="#1897b5"/><rect x="896" y="291" width="2" height="2" fill="#1c96b4"/><rect x="898" y="291" width="2" height="2" fill="#2195b4"/><rect x="900" y="291" width="2" height="2" fill="#2794b3"/><rect x="902" y="291" width="2" height="2" fill="#2c93b2"/><rect x="904" y="291" width="2" height="2" fill="#3192b1"/><rect x="906" y="291" width="2" height="2" fill="#3791b1"/><rect x="908" y="291" width="2" height="2" fill="#3c90b0"/><rect x="910" y="291" width="2" height="2" fill="#428faf"/><rect x="912" y="291" width="2" height="2" fill="#488dae"/><rect x="914" y="291" width="2" height="2" fill="#4e8cad"/><rect x="916" y="291" width="2" height="2" fill="#558bad"/><rect x="918" y="291" width="2" height="2" fill="#5b8aac"/><rect x="920" y="291" width="2" height="2" fill="#6289ab"/><rect x="922" y="291" width="2" height="2" fill="#6887aa"/><rect x="924" y="291" width="2" height="2" fill="#7086aa"/><rect x="926" y="291" width="2" height="2" fill="#7785a9"/><rect x="928" y="291" width="2" height="2" fill="#7e83a8"/><rect x="930" y="291" width="2" height="2" fill="#8682a7"/><rect x="932" y="291" width="2" height="2" fill="#8e81a7"/><rect x="934" y="291" width="2" height="2" fill="#967fa6"/><rect x="936" y="291" width="2" height="2" fill="#9f7ea5"/><rect x="938" y="291" width="2" height="2" fill="#a57aa2"/><rect x="940" y="291" width="2" height="2" fill="#a7749a"/><rect x="942" y="291" width="2" height="2" fill="#a86e93"/><rect x="944" y="291" width="2" height="2" fill="#aa698c"/><rect x="946" y="291" width="2" height="2" fill="#ab6386"/><rect x="948" y="291" width="2" height="2" fill="#ad5f80"/><rect x="950" y="291" width="2" height="2" fill="#ae5a7b"/><rect x="952" y="291" width="2" height="2" fill="#b05676"/><rect x="954" y="291" width="2" height="2" fill="#b15271"/><rect x="956" y="291" width="2" height="2" fill="#b34e6c"/><rect x="958" y="291" width="2" height="2" fill="#b44a68"/><rect x="960" y="291" width="2" height="2" fill="#b64764"/><rect x="962" y="291" width="2" height="2" fill="#b74360"/><rect x="964" y="291" width="2" height="2" fill="#b9405c"/><rect x="966" y="291" width="2" height="2" fill="#ba3d59"/><rect x="968" y="291" width="2" height="2" fill="#bc3a55"/><rect x="970" y="291" width="2" height="2" fill="#bd3752"/><rect x="972" y="291" width="2" height="2" fill="#bf354f"/><rect x="974" y="291" width="2" height="2" fill="#c0324c"/><rect x="976" y="291" width="2" height="2" fill="#c23049"/><rect x="978" y="291" width="2" height="2" fill="#c32d46"/><rect x="980" y="291" width="2" height="2" fill="#c52b44"/><rect x="982" y="291" width="2" height="2" fill="#c62941"/><rect x="984" y="291" width="2" height="2" fill="#c8263e"/><rect x="986" y="291" width="2" height="2" fill="#c9243c"/><rect x="988" y="291" width="2" height="2" fill="#cb2239"/><rect x="990" y="291" width="2" height="2" fill="#cc2037"/><rect x="992" y="291" width="2" height="2" fill="#ce1e35"/><rect x="994" y="291" width="2" height="2" fill="#cf1c33"/><rect x="996" y="291" width="2" height="2" fill="#d11a31"/><rect x="998" y="291" width="2" height="2" fill="#d2182e"/><rect x="1000" y="291" width="2" height="2" fill="#d4172c"/><rect x="1002" y="291" width="2" height="2" fill="#d5162a"/><rect x="1004" y="291" width="2" height="2" fill="#d71628"/><rect x="1006" y="291" width="2" height="2" fill="#d81627"/><rect x="1008" y="291" width="2" height="2" fill="#da1625"/><rect x="1010" y="291" width="2" height="2" fill="#dc1623"/><rect x="1012" y="291" width="2" height="2" fill="#dd1621"/><rect x="1014" y="291" width="2" height="2" fill="#df161f"/><rect x="886" y="293" width="2" height="2" fill="#1696b9"/><rect x="888" y="293" width="2" height="2" fill="#1695b8"/><rect x="890" y="293" width="2" height="2" fill="#1694b7"/><rect x="892" y="293" width="2" height="2" fill="#1692b7"/><rect x="894" y="293" width="2" height="2" fill="#1991b6"/><rect x="896" y="293" width="2" height="2" fill="#1e90b5"/><rect x="898" y="293" width="2" height="2" fill="#238fb4"/><rect x="900" y="293" width="2" height="2" fill="#288eb4"/><rect x="902" y="293" width="2" height="2" fill="#2d8db3"/><rect x="904" y="293" width="2" height="2" fill="#328cb2"/><rect x="906" y="293" width="2" height="2" fill="#388ab1"/><rect x="908" y="293" width="2" height="2" fill="#3d89b1"/><rect x="910" y="293" width="2" height="2" fill="#4388b0"/><rect x="912" y="293" width="2" height="2" fill="#4987af"/><rect x="914" y="293" width="2" height="2" fill="#4f85ae"/><rect x="916" y="293" width="2" height="2" fill="#5584ae"/><rect x="918" y="293" width="2" height="2" fill="#5b83ad"/><rect x="920" y="293" width="2" height="2" fill="#6281ac"/><rect x="922" y="293" width="2" height="2" fill="#6980ab"/><rect x="924" y="293" width="2" height="2" fill="#707fab"/><rect x="926" y="293" width="2" height="2" fill="#777daa"/><rect x="928" y="293" width="2" height="2" fill="#7e7ca9"/><rect x="930" y="293" width="2" height="2" fill="#867ba8"/><rect x="932" y="293" width="2" height="2" fill="#8d79a8"/><rect x="934" y="293" width="2" height="2" fill="#9678a7"/><rect x="936" y="293" width="2" height="2" fill="#9e76a6"/><rect x="938" y="293" width="2" height="2" fill="#a674a4"/><rect x="940" y="293" width="2" height="2" fill="#a76e9d"/><rect x="942" y="293" width="2" height="2" fill="#a96896"/><rect x="944" y="293" width="2" height="2" fill="#aa638f"/><rect x="946" y="293" width="2" height="2" fill="#ac5e89"/><rect x="948" y="293" width="2" height="2" fill="#ad5983"/><rect x="950" y="293" width="2" height="2" fill="#af557e"/><rect x="952" y="293" width="2" height="2" fill="#b05178"/><rect x="954" y="293" width="2" height="2" fill="#b24d74"/><rect x="956" y="293" width="2" height="2" fill="#b3496f"/><rect x="958" y="293" width="2" height="2" fill="#b5456b"/><rect x="960" y="293" width="2" height="2" fill="#b64267"/><rect x="962" y="293" width="2" height="2" fill="#b83f63"/><rect x="964" y="293" width="2" height="2" fill="#b93c5f"/><rect x="966" y="293" width="2" height="2" fill="#bb395b"/><rect x="968" y="293" width="2" height="2" fill="#bc3658"/><rect x="970" y="293" width="2" height="2" fill="#be3355"/><rect x="972" y="293" width="2" height="2" fill="#bf3151"/><rect x="974" y="293" width="2" height="2" fill="#c12e4e"/><rect x="976" y="293" width="2" height="2" fill="#c22c4b"/><rect x="978" y="293" width="2" height="2" fill="#c42949"/><rect x="980" y="293" width="2" height="2" fill="#c52746"/><rect x="982" y="293" width="2" height="2" fill="#c72543"/><rect x="984" y="293" width="2" height="2" fill="#c82341"/><rect x="986" y="293" width="2" height="2" fill="#ca213e"/><rect x="988" y="293" width="2" height="2" fill="#cb1f3c"/><rect x="990" y="293" width="2" height="2" fill="#cd1d39"/><rect x="992" y="293" width="2" height="2" fill="#ce1b37"/><rect x="994" y="293" width="2" height="2" fill="#d01935"/><rect x="996" y="293" width="2" height="2" fill="#d11733"/><rect x="998" y="293" width="2" height="2" fill="#d31631"/><rect x="1000" y="293" width="2" height="2" fill="#d4162f"/><rect x="1002" y="293" width="2" height="2" fill="#d6162d"/><rect x="1004" y="293" width="2" height="2" fill="#d7162b"/><rect x="1006" y="293" width="2" height="2" fill="#d91629"/><rect x="1008" y="293" width="2" height="2" fill="#da1627"/><rect x="1010" y="293" width="2" height="2" fill="#dc1625"/><rect x="886" y="295" width="2" height="2" fill="#1690ba"/><rect x="888" y="295" width="2" height="2" fill="#168fb9"/><rect x="890" y="295" width="2" height="2" fill="#168eb8"/><rect x="892" y="295" width="2" height="2" fill="#168db8"/><rect x="894" y="295" width="2" height="2" fill="#1a8cb7"/><rect x="896" y="295" width="2" height="2" fill="#1f8ab6"/><rect x="898" y="295" width="2" height="2" fill="#2489b5"/><rect x="900" y="295" width="2" height="2" fill="#2988b5"/><rect x="902" y="295" width="2" height="2" fill="#2e87b4"/><rect x="904" y="295" width="2" height="2" fill="#3385b3"/><rect x="906" y="295" width="2" height="2" fill="#3984b2"/><rect x="908" y="295" width="2" height="2" fill="#3e83b2"/><rect x="910" y="295" width="2" height="2" fill="#4482b1"/><rect x="912" y="295" width="2" height="2" fill="#4a80b0"/><rect x="914" y="295" width="2" height="2" fill="#4f7faf"/><rect x="916" y="295" width="2" height="2" fill="#567eaf"/><rect x="918" y="295" width="2" height="2" fill="#5c7cae"/><rect x="920" y="295" width="2" height="2" fill="#627bad"/><rect x="922" y="295" width="2" height="2" fill="#6979ac"/><rect x="924" y="295" width="2" height="2" fill="#7078ac"/><rect x="926" y="295" width="2" height="2" fill="#7776ab"/><rect x="928" y="295" width="2" height="2" fill="#7e75aa"/><rect x="930" y="295" width="2" height="2" fill="#8573a9"/><rect x="932" y="295" width="2" height="2" fill="#8d72a9"/><rect x="934" y="295" width="2" height="2" fill="#9570a8"/><rect x="936" y="295" width="2" height="2" fill="#9d6ea7"/><rect x="938" y="295" width="2" height="2" fill="#a56da6"/><rect x="940" y="295" width="2" height="2" fill="#a8679f"/><rect x="942" y="295" width="2" height="2" fill="#a96298"/><rect x="944" y="295" width="2" height="2" fill="#ab5d92"/><rect x="946" y="295" width="2" height="2" fill="#ac588b"/><rect x="948" y="295" width="2" height="2" fill="#ae5486"/><rect x="950" y="295" width="2" height="2" fill="#af5080"/><rect x="952" y="295" width="2" height="2" fill="#b14c7b"/><rect x="954" y="295" width="2" height="2" fill="#b24876"/><rect x="956" y="295" width="2" height="2" fill="#b44472"/><rect x="958" y="295" width="2" height="2" fill="#b5416d"/><rect x="960" y="295" width="2" height="2" fill="#b73e69"/><rect x="962" y="295" width="2" height="2" fill="#b83b65"/><rect x="964" y="295" width="2" height="2" fill="#ba3861"/><rect x="966" y="295" width="2" height="2" fill="#bb355e"/><rect x="968" y="295" width="2" height="2" fill="#bd325a"/><rect x="970" y="295" width="2" height="2" fill="#be2f57"/><rect x="972" y="295" width="2" height="2" fill="#c02d54"/><rect x="974" y="295" width="2" height="2" fill="#c12a51"/><rect x="976" y="295" width="2" height="2" fill="#c3284e"/><rect x="978" y="295" width="2" height="2" fill="#c4264b"/><rect x="980" y="295" width="2" height="2" fill="#c62348"/><rect x="982" y="295" width="2" height="2" fill="#c72146"/><rect x="984" y="295" width="2" height="2" fill="#c91f43"/><rect x="986" y="295" width="2" height="2" fill="#ca1d40"/><rect x="988" y="295" width="2" height="2" fill="#cc1b3e"/><rect x="990" y="295" width="2" height="2" fill="#cd193c"/><rect x="992" y="295" width="2" height="2" fill="#cf1739"/><rect x="994" y="295" width="2" height="2" fill="#d01637"/><rect x="996" y="295" width="2" height="2" fill="#d21635"/><rect x="998" y="295" width="2" height="2" fill="#d31633"/><rect x="1000" y="295" width="2" height="2" fill="#d51631"/><rect x="1002" y="295" width="2" height="2" fill="#d6162f"/><rect x="1004" y="295" width="2" height="2" fill="#d8162d"/><rect x="1006" y="295" width="2" height="2" fill="#d9162b"/><rect x="886" y="297" width="2" height="2" fill="#168bbb"/><rect x="888" y="297" width="2" height="2" fill="#168aba"/><rect x="890" y="297" width="2" height="2" fill="#1688b9"/><rect x="892" y="297" width="2" height="2" fill="#1787b9"/><rect x="894" y="297" width="2" height="2" fill="#1b86b8"/><rect x="896" y="297" width="2" height="2" fill="#2085b7"/><rect x="898" y="297" width="2" height="2" fill="#2583b6"/><rect x="900" y="297" width="2" height="2" fill="#2a82b6"/><rect x="902" y="297" width="2" height="2" fill="#2f81b5"/><rect x="904" y="297" width="2" height="2" fill="#347fb4"/><rect x="906" y="297" width="2" height="2" fill="#3a7eb3"/><rect x="908" y="297" width="2" height="2" fill="#3f7db3"/><rect x="910" y="297" width="2" height="2" fill="#447bb2"/><rect x="912" y="297" width="2" height="2" fill="#4a7ab1"/><rect x="914" y="297" width="2" height="2" fill="#5079b0"/><rect x="916" y="297" width="2" height="2" fill="#5677b0"/><rect x="918" y="297" width="2" height="2" fill="#5c76af"/><rect x="920" y="297" width="2" height="2" fill="#6274ae"/><rect x="922" y="297" width="2" height="2" fill="#6973ad"/><rect x="924" y="297" width="2" height="2" fill="#7071ad"/><rect x="926" y="297" width="2" height="2" fill="#7670ac"/><rect x="928" y="297" width="2" height="2" fill="#7d6eab"/><rect x="930" y="297" width="2" height="2" fill="#856caa"/><rect x="932" y="297" width="2" height="2" fill="#8c6baa"/><rect x="934" y="297" width="2" height="2" fill="#9469a9"/><rect x="936" y="297" width="2" height="2" fill="#9c67a8"/><rect x="938" y="297" width="2" height="2" fill="#a465a7"/><rect x="940" y="297" width="2" height="2" fill="#a861a2"/><rect x="942" y="297" width="2" height="2" fill="#aa5c9b"/><rect x="944" y="297" width="2" height="2" fill="#ab5794"/><rect x="946" y="297" width="2" height="2" fill="#ad538e"/><rect x="948" y="297" width="2" height="2" fill="#ae4e88"/><rect x="950" y="297" width="2" height="2" fill="#b04a83"/><rect x="952" y="297" width="2" height="2" fill="#b1477e"/><rect x="954" y="297" width="2" height="2" fill="#b34379"/><rect x="956" y="297" width="2" height="2" fill="#b44074"/><rect x="958" y="297" width="2" height="2" fill="#b63c70"/><rect x="960" y="297" width="2" height="2" fill="#b7396c"/><rect x="962" y="297" width="2" height="2" fill="#b93668"/><rect x="964" y="297" width="2" height="2" fill="#ba3364"/><rect x="966" y="297" width="2" height="2" fill="#bc3160"/><rect x="968" y="297" width="2" height="2" fill="#bd2e5d"/><rect x="970" y="297" width="2" height="2" fill="#bf2b59"/><rect x="972" y="297" width="2" height="2" fill="#c02956"/><rect x="974" y="297" width="2" height="2" fill="#c22653"/><rect x="976" y="297" width="2" height="2" fill="#c32450"/><rect x="978" y="297" width="2" height="2" fill="#c5224d"/><rect x="980" y="297" width="2" height="2" fill="#c6204b"/><rect x="982" y="297" width="2" height="2" fill="#c81e48"/><rect x="984" y="297" width="2" height="2" fill="#c91c45"/><rect x="986" y="297" width="2" height="2" fill="#cb1a43"/><rect x="988" y="297" width="2" height="2" fill="#cc1840"/><rect x="990" y="297" width="2" height="2" fill="#ce163e"/><rect x="992" y="297" width="2" height="2" fill="#cf163c"/><rect x="994" y="297" width="2" height="2" fill="#d11639"/><rect x="996" y="297" width="2" height="2" fill="#d21637"/><rect x="998" y="297" width="2" height="2" fill="#d41635"/><rect x="1000" y="297" width="2" height="2" fill="#d51633"/><rect x="1002" y="297" width="2" height="2" fill="#d71631"/><rect x="886" y="299" width="2" height="2" fill="#1685bc"/><rect x="888" y="299" width="2" height="2" fill="#1684bb"/><rect x="890" y="299" width="2" height="2" fill="#1683ba"/><rect x="892" y="299" width="2" height="2" fill="#1882ba"/><rect x="894" y="299" width="2" height="2" fill="#1d80b9"/><rect x="896" y="299" width="2" height="2" fill="#217fb8"/><rect x="898" y="299" width="2" height="2" fill="#267eb7"/><rect x="900" y="299" width="2" height="2" fill="#2b7cb7"/><rect x="902" y="299" width="2" height="2" fill="#307bb6"/><rect x="904" y="299" width="2" height="2" fill="#357ab5"/><rect x="906" y="299" width="2" height="2" fill="#3a78b4"/><rect x="908" y="299" width="2" height="2" fill="#4077b4"/><rect x="910" y="299" width="2" height="2" fill="#4575b3"/><rect x="912" y="299" width="2" height="2" fill="#4b74b2"/><rect x="914" y="299" width="2" height="2" fill="#5173b1"/><rect x="916" y="299" width="2" height="2" fill="#5671b1"/><rect x="918" y="299" width="2" height="2" fill="#5c6fb0"/><rect x="920" y="299" width="2" height="2" fill="#636eaf"/><rect x="922" y="299" width="2" height="2" fill="#696cae"/><rect x="924" y="299" width="2" height="2" fill="#706bae"/><rect x="926" y="299" width="2" height="2" fill="#7669ad"/><rect x="928" y="299" width="2" height="2" fill="#7d67ac"/><rect x="930" y="299" width="2" height="2" fill="#8466ab"/><rect x="932" y="299" width="2" height="2" fill="#8c64ab"/><rect x="934" y="299" width="2" height="2" fill="#9362aa"/><rect x="936" y="299" width="2" height="2" fill="#9b60a9"/><rect x="938" y="299" width="2" height="2" fill="#a35ea8"/><rect x="940" y="299" width="2" height="2" fill="#a85ba5"/><rect x="942" y="299" width="2" height="2" fill="#aa569d"/><rect x="944" y="299" width="2" height="2" fill="#ab5297"/><rect x="946" y="299" width="2" height="2" fill="#ad4d91"/><rect x="948" y="299" width="2" height="2" fill="#ae498b"/><rect x="950" y="299" width="2" height="2" fill="#b04585"/><rect x="952" y="299" width="2" height="2" fill="#b24280"/><rect x="954" y="299" width="2" height="2" fill="#b33e7b"/><rect x="956" y="299" width="2" height="2" fill="#b53b77"/><rect x="958" y="299" width="2" height="2" fill="#b63872"/><rect x="960" y="299" width="2" height="2" fill="#b8356e"/><rect x="962" y="299" width="2" height="2" fill="#b9326a"/><rect x="964" y="299" width="2" height="2" fill="#bb2f66"/><rect x="966" y="299" width="2" height="2" fill="#bc2c63"/><rect x="968" y="299" width="2" height="2" fill="#be2a5f"/><rect x="970" y="299" width="2" height="2" fill="#bf275c"/><rect x="972" y="299" width="2" height="2" fill="#c12559"/><rect x="974" y="299" width="2" height="2" fill="#c22355"/><rect x="976" y="299" width="2" height="2" fill="#c42052"/><rect x="978" y="299" width="2" height="2" fill="#c51e50"/><rect x="980" y="299" width="2" height="2" fill="#c71c4d"/><rect x="982" y="299" width="2" height="2" fill="#c81a4a"/><rect x="984" y="299" width="2" height="2" fill="#ca1847"/><rect x="986" y="299" width="2" height="2" fill="#cb1645"/><rect x="988" y="299" width="2" height="2" fill="#cd1642"/><rect x="990" y="299" width="2" height="2" fill="#ce1640"/><rect x="992" y="299" width="2" height="2" fill="#d0163e"/><rect x="994" y="299" width="2" height="2" fill="#d1163b"/><rect x="996" y="299" width="2" height="2" fill="#d31639"/><rect x="998" y="299" width="2" height="2" fill="#d41637"/><rect x="1000" y="299" width="2" height="2" fill="#d61635"/><rect x="884" y="301" width="2" height="2" fill="#1681be"/><rect x="886" y="301" width="2" height="2" fill="#1680bd"/><rect x="888" y="301" width="2" height="2" fill="#167fbc"/><rect x="890" y="301" width="2" height="2" fill="#167ebb"/><rect x="892" y="301" width="2" height="2" fill="#197cbb"/><rect x="894" y="301" width="2" height="2" fill="#1e7bba"/><rect x="896" y="301" width="2" height="2" fill="#227ab9"/><rect x="898" y="301" width="2" height="2" fill="#2778b8"/><rect x="900" y="301" width="2" height="2" fill="#2c77b7"/><rect x="902" y="301" width="2" height="2" fill="#3175b7"/><rect x="904" y="301" width="2" height="2" fill="#3674b6"/><rect x="906" y="301" width="2" height="2" fill="#3b73b5"/><rect x="908" y="301" width="2" height="2" fill="#4171b4"/><rect x="910" y="301" width="2" height="2" fill="#4670b4"/><rect x="912" y="301" width="2" height="2" fill="#4b6eb3"/><rect x="914" y="301" width="2" height="2" fill="#516db2"/><rect x="916" y="301" width="2" height="2" fill="#576bb1"/><rect x="918" y="301" width="2" height="2" fill="#5d69b1"/><rect x="920" y="301" width="2" height="2" fill="#6368b0"/><rect x="922" y="301" width="2" height="2" fill="#6966af"/><rect x="924" y="301" width="2" height="2" fill="#7065ae"/><rect x="926" y="301" width="2" height="2" fill="#7663ae"/><rect x="928" y="301" width="2" height="2" fill="#7d61ad"/><rect x="930" y="301" width="2" height="2" fill="#845fac"/><rect x="932" y="301" width="2" height="2" fill="#8b5dab"/><rect x="934" y="301" width="2" height="2" fill="#935cab"/><rect x="936" y="301" width="2" height="2" fill="#9a5aaa"/><rect x="938" y="301" width="2" height="2" fill="#a258a9"/><rect x="940" y="301" width="2" height="2" fill="#a955a7"/><rect x="942" y="301" width="2" height="2" fill="#aa50a0"/><rect x="944" y="301" width="2" height="2" fill="#ac4c99"/><rect x="946" y="301" width="2" height="2" fill="#ad4893"/><rect x="948" y="301" width="2" height="2" fill="#af448d"/><rect x="950" y="301" width="2" height="2" fill="#b04088"/><rect x="952" y="301" width="2" height="2" fill="#b23d83"/><rect x="954" y="301" width="2" height="2" fill="#b3397e"/><rect x="956" y="301" width="2" height="2" fill="#b53679"/><rect x="958" y="301" width="2" height="2" fill="#b63375"/><rect x="960" y="301" width="2" height="2" fill="#b83071"/><rect x="962" y="301" width="2" height="2" fill="#b92e6d"/><rect x="964" y="301" width="2" height="2" fill="#bb2b69"/><rect x="966" y="301" width="2" height="2" fill="#bc2865"/><rect x="968" y="301" width="2" height="2" fill="#be2662"/><rect x="970" y="301" width="2" height="2" fill="#bf235e"/><rect x="972" y="301" width="2" height="2" fill="#c1215b"/><rect x="974" y="301" width="2" height="2" fill="#c21f58"/><rect x="976" y="301" width="2" height="2" fill="#c41d55"/><rect x="978" y="301" width="2" height="2" fill="#c51b52"/><rect x="980" y="301" width="2" height="2" fill="#c7194f"/><rect x="982" y="301" width="2" height="2" fill="#c9174c"/><rect x="984" y="301" width="2" height="2" fill="#ca164a"/><rect x="986" y="301" width="2" height="2" fill="#cc1647"/><rect x="988" y="301" width="2" height="2" fill="#cd1645"/><rect x="990" y="301" width="2" height="2" fill="#cf1642"/><rect x="992" y="301" width="2" height="2" fill="#d01640"/><rect x="994" y="301" width="2" height="2" fill="#d2163e"/><rect x="996" y="301" width="2" height="2" fill="#d3163b"/><rect x="884" y="303" width="2" height="2" fill="#167cbe"/><rect x="886" y="303" width="2" height="2" fill="#167bbe"/><rect x="888" y="303" width="2" height="2" fill="#167abd"/><rect x="890" y="303" width="2" height="2" fill="#1678bc"/><rect x="892" y="303" width="2" height="2" fill="#1a77bb"/><rect x="894" y="303" width="2" height="2" fill="#1f76bb"/><rect x="896" y="303" width="2" height="2" fill="#2474ba"/><rect x="898" y="303" width="2" height="2" fill="#2873b9"/><rect x="900" y="303" width="2" height="2" fill="#2d71b8"/><rect x="902" y="303" width="2" height="2" fill="#3270b8"/><rect x="904" y="303" width="2" height="2" fill="#376fb7"/><rect x="906" y="303" width="2" height="2" fill="#3c6db6"/><rect x="908" y="303" width="2" height="2" fill="#416cb5"/><rect x="910" y="303" width="2" height="2" fill="#476ab5"/><rect x="912" y="303" width="2" height="2" fill="#4c68b4"/><rect x="914" y="303" width="2" height="2" fill="#5267b3"/><rect x="916" y="303" width="2" height="2" fill="#5765b2"/><rect x="918" y="303" width="2" height="2" fill="#5d64b2"/><rect x="920" y="303" width="2" height="2" fill="#6362b1"/><rect x="922" y="303" width="2" height="2" fill="#6960b0"/><rect x="924" y="303" width="2" height="2" fill="#705faf"/><rect x="926" y="303" width="2" height="2" fill="#765daf"/><rect x="928" y="303" width="2" height="2" fill="#7d5bae"/><rect x="930" y="303" width="2" height="2" fill="#8459ad"/><rect x="932" y="303" width="2" height="2" fill="#8b57ac"/><rect x="934" y="303" width="2" height="2" fill="#9255ac"/><rect x="936" y="303" width="2" height="2" fill="#9953ab"/><rect x="938" y="303" width="2" height="2" fill="#a151aa"/><rect x="940" y="303" width="2" height="2" fill="#a94fa9"/><rect x="942" y="303" width="2" height="2" fill="#ab4ba2"/><rect x="944" y="303" width="2" height="2" fill="#ac479c"/><rect x="946" y="303" width="2" height="2" fill="#ae4396"/><rect x="948" y="303" width="2" height="2" fill="#af3f90"/><rect x="950" y="303" width="2" height="2" fill="#b13b8a"/><rect x="952" y="303" width="2" height="2" fill="#b23885"/><rect x="954" y="303" width="2" height="2" fill="#b43580"/><rect x="956" y="303" width="2" height="2" fill="#b5327c"/><rect x="958" y="303" width="2" height="2" fill="#b72f77"/><rect x="960" y="303" width="2" height="2" fill="#b82c73"/><rect x="962" y="303" width="2" height="2" fill="#ba296f"/><rect x="964" y="303" width="2" height="2" fill="#bb276b"/><rect x="966" y="303" width="2" height="2" fill="#bd2467"/><rect x="968" y="303" width="2" height="2" fill="#be2264"/><rect x="970" y="303" width="2" height="2" fill="#c02061"/><rect x="972" y="303" width="2" height="2" fill="#c11d5d"/><rect x="974" y="303" width="2" height="2" fill="#c31b5a"/><rect x="976" y="303" width="2" height="2" fill="#c41957"/><rect x="978" y="303" width="2" height="2" fill="#c61754"/><rect x="980" y="303" width="2" height="2" fill="#c71651"/><rect x="982" y="303" width="2" height="2" fill="#c9164f"/><rect x="984" y="303" width="2" height="2" fill="#ca164c"/><rect x="986" y="303" width="2" height="2" fill="#cc1649"/><rect x="988" y="303" width="2" height="2" fill="#cd1647"/><rect x="990" y="303" width="2" height="2" fill="#cf1644"/><rect x="992" y="303" width="2" height="2" fill="#d01642"/><rect x="884" y="305" width="2" height="2" fill="#1678bf"/><rect x="886" y="305" width="2" height="2" fill="#1676bf"/><rect x="888" y="305" width="2" height="2" fill="#1675be"/><rect x="890" y="305" width="2" height="2" fill="#1773bd"/><rect x="892" y="305" width="2" height="2" fill="#1c72bc"/><rect x="894" y="305" width="2" height="2" fill="#2071bc"/><rect x="896" y="305" width="2" height="2" fill="#256fbb"/><rect x="898" y="305" width="2" height="2" fill="#296eba"/><rect x="900" y="305" width="2" height="2" fill="#2e6cb9"/><rect x="902" y="305" width="2" height="2" fill="#336bb9"/><rect x="904" y="305" width="2" height="2" fill="#3869b8"/><rect x="906" y="305" width="2" height="2" fill="#3d68b7"/><rect x="908" y="305" width="2" height="2" fill="#4266b6"/><rect x="910" y="305" width="2" height="2" fill="#4765b6"/><rect x="912" y="305" width="2" height="2" fill="#4d63b5"/><rect x="914" y="305" width="2" height="2" fill="#5261b4"/><rect x="916" y="305" width="2" height="2" fill="#5860b3"/><rect x="918" y="305" width="2" height="2" fill="#5e5eb3"/><rect x="920" y="305" width="2" height="2" fill="#645cb2"/><rect x="922" y="305" width="2" height="2" fill="#6a5bb1"/><rect x="924" y="305" width="2" height="2" fill="#7059b0"/><rect x="926" y="305" width="2" height="2" fill="#7657b0"/><rect x="928" y="305" width="2" height="2" fill="#7d55af"/><rect x="930" y="305" width="2" height="2" fill="#8353ae"/><rect x="932" y="305" width="2" height="2" fill="#8a51ad"/><rect x="934" y="305" width="2" height="2" fill="#914fad"/><rect x="936" y="305" width="2" height="2" fill="#994dac"/><rect x="938" y="305" width="2" height="2" fill="#a04bab"/><rect x="940" y="305" width="2" height="2" fill="#a849aa"/><rect x="942" y="305" width="2" height="2" fill="#ab45a5"/><rect x="944" y="305" width="2" height="2" fill="#ad419e"/><rect x="946" y="305" width="2" height="2" fill="#ae3d98"/><rect x="948" y="305" width="2" height="2" fill="#b03a92"/><rect x="950" y="305" width="2" height="2" fill="#b1368d"/><rect x="952" y="305" width="2" height="2" fill="#b33388"/><rect x="954" y="305" width="2" height="2" fill="#b43083"/><rect x="956" y="305" width="2" height="2" fill="#b62d7e"/><rect x="958" y="305" width="2" height="2" fill="#b72a7a"/><rect x="960" y="305" width="2" height="2" fill="#b92875"/><rect x="962" y="305" width="2" height="2" fill="#ba2571"/><rect x="964" y="305" width="2" height="2" fill="#bc236d"/><rect x="966" y="305" width="2" height="2" fill="#bd206a"/><rect x="968" y="305" width="2" height="2" fill="#bf1e66"/><rect x="970" y="305" width="2" height="2" fill="#c01c63"/><rect x="972" y="305" width="2" height="2" fill="#c21960"/><rect x="974" y="305" width="2" height="2" fill="#c3175c"/><rect x="976" y="305" width="2" height="2" fill="#c51659"/><rect x="978" y="305" width="2" height="2" fill="#c61656"/><rect x="980" y="305" width="2" height="2" fill="#c81654"/><rect x="982" y="305" width="2" height="2" fill="#c91651"/><rect x="984" y="305" width="2" height="2" fill="#cb164e"/><rect x="986" y="305" width="2" height="2" fill="#cc164c"/><rect x="988" y="305" width="2" height="2" fill="#ce1649"/><rect x="882" y="307" width="2" height="2" fill="#1674c1"/><rect x="884" y="307" width="2" height="2" fill="#1673c0"/><rect x="886" y="307" width="2" height="2" fill="#1671c0"/><rect x="888" y="307" width="2" height="2" fill="#1670bf"/><rect x="890" y="307" width="2" height="2" fill="#186fbe"/><rect x="892" y="307" width="2" height="2" fill="#1d6dbd"/><rect x="894" y="307" width="2" height="2" fill="#216cbd"/><rect x="896" y="307" width="2" height="2" fill="#266abc"/><rect x="898" y="307" width="2" height="2" fill="#2a69bb"/><rect x="900" y="307" width="2" height="2" fill="#2f67ba"/><rect x="902" y="307" width="2" height="2" fill="#3466ba"/><rect x="904" y="307" width="2" height="2" fill="#3964b9"/><rect x="906" y="307" width="2" height="2" fill="#3e63b8"/><rect x="908" y="307" width="2" height="2" fill="#4361b7"/><rect x="910" y="307" width="2" height="2" fill="#485fb7"/><rect x="912" y="307" width="2" height="2" fill="#4d5eb6"/><rect x="914" y="307" width="2" height="2" fill="#535cb5"/><rect x="916" y="307" width="2" height="2" fill="#585ab4"/><rect x="918" y="307" width="2" height="2" fill="#5e59b4"/><rect x="920" y="307" width="2" height="2" fill="#6457b3"/><rect x="922" y="307" width="2" height="2" fill="#6a55b2"/><rect x="924" y="307" width="2" height="2" fill="#7053b1"/><rect x="926" y="307" width="2" height="2" fill="#7651b1"/><rect x="928" y="307" width="2" height="2" fill="#7d4fb0"/><rect x="930" y="307" width="2" height="2" fill="#834daf"/><rect x="932" y="307" width="2" height="2" fill="#8a4bae"/><rect x="934" y="307" width="2" height="2" fill="#9149ae"/><rect x="936" y="307" width="2" height="2" fill="#9847ad"/><rect x="938" y="307" width="2" height="2" fill="#9f45ac"/><rect x="940" y="307" width="2" height="2" fill="#a743ab"/><rect x="942" y="307" width="2" height="2" fill="#ac40a7"/><rect x="944" y="307" width="2" height="2" fill="#ad3ca1"/><rect x="946" y="307" width="2" height="2" fill="#af389b"/><rect x="948" y="307" width="2" height="2" fill="#b03595"/><rect x="950" y="307" width="2" height="2" fill="#b2328f"/><rect x="952" y="307" width="2" height="2" fill="#b32f8a"/><rect x="954" y="307" width="2" height="2" fill="#b52c85"/><rect x="956" y="307" width="2" height="2" fill="#b62980"/><rect x="958" y="307" width="2" height="2" fill="#b8267c"/><rect x="960" y="307" width="2" height="2" fill="#b92378"/><rect x="962" y="307" width="2" height="2" fill="#bb2174"/><rect x="964" y="307" width="2" height="2" fill="#bc1f70"/><rect x="966" y="307" width="2" height="2" fill="#be1c6c"/><rect x="968" y="307" width="2" height="2" fill="#bf1a69"/><rect x="970" y="307" width="2" height="2" fill="#c11865"/><rect x="972" y="307" width="2" height="2" fill="#c21662"/><rect x="974" y="307" width="2" height="2" fill="#c4165f"/><rect x="976" y="307" width="2" height="2" fill="#c5165c"/><rect x="978" y="307" width="2" height="2" fill="#c71659"/><rect x="980" y="307" width="2" height="2" fill="#c81656"/><rect x="982" y="307" width="2" height="2" fill="#ca1653"/><rect x="984" y="307" width="2" height="2" fill="#cb1650"/><rect x="882" y="309" width="2" height="2" fill="#166fc2"/><rect x="884" y="309" width="2" height="2" fill="#166ec1"/><rect x="886" y="309" width="2" height="2" fill="#166dc1"/><rect x="888" y="309" width="2" height="2" fill="#166bc0"/><rect x="890" y="309" width="2" height="2" fill="#1a6abf"/><rect x="892" y="309" width="2" height="2" fill="#1e68be"/><rect x="894" y="309" width="2" height="2" fill="#2267be"/><rect x="896" y="309" width="2" height="2" fill="#2765bd"/><rect x="898" y="309" width="2" height="2" fill="#2b64bc"/><rect x="900" y="309" width="2" height="2" fill="#3062bb"/><rect x="902" y="309" width="2" height="2" fill="#3561bb"/><rect x="904" y="309" width="2" height="2" fill="#3a5fba"/><rect x="906" y="309" width="2" height="2" fill="#3f5db9"/><rect x="908" y="309" width="2" height="2" fill="#445cb8"/><rect x="910" y="309" width="2" height="2" fill="#495ab8"/><rect x="912" y="309" width="2" height="2" fill="#4e58b7"/><rect x="914" y="309" width="2" height="2" fill="#5357b6"/><rect x="916" y="309" width="2" height="2" fill="#5955b5"/><rect x="918" y="309" width="2" height="2" fill="#5e53b4"/><rect x="920" y="309" width="2" height="2" fill="#6451b4"/><rect x="922" y="309" width="2" height="2" fill="#6a50b3"/><rect x="924" y="309" width="2" height="2" fill="#704eb2"/><rect x="926" y="309" width="2" height="2" fill="#764cb1"/><rect x="928" y="309" width="2" height="2" fill="#7c4ab1"/><rect x="930" y="309" width="2" height="2" fill="#8348b0"/><rect x="932" y="309" width="2" height="2" fill="#8a46af"/><rect x="934" y="309" width="2" height="2" fill="#9044ae"/><rect x="936" y="309" width="2" height="2" fill="#9742ae"/><rect x="938" y="309" width="2" height="2" fill="#9f3fad"/><rect x="940" y="309" width="2" height="2" fill="#a63dac"/><rect x="942" y="309" width="2" height="2" fill="#ac3aaa"/><rect x="944" y="309" width="2" height="2" fill="#ae37a3"/><rect x="946" y="309" width="2" height="2" fill="#af339d"/><rect x="948" y="309" width="2" height="2" fill="#b13097"/><rect x="950" y="309" width="2" height="2" fill="#b22d92"/><rect x="952" y="309" width="2" height="2" fill="#b42a8c"/><rect x="954" y="309" width="2" height="2" fill="#b52788"/><rect x="956" y="309" width="2" height="2" fill="#b72483"/><rect x="958" y="309" width="2" height="2" fill="#b8227e"/><rect x="960" y="309" width="2" height="2" fill="#ba1f7a"/><rect x="962" y="309" width="2" height="2" fill="#bb1d76"/><rect x="964" y="309" width="2" height="2" fill="#bd1b72"/><rect x="966" y="309" width="2" height="2" fill="#be186e"/><rect x="968" y="309" width="2" height="2" fill="#c0166b"/><rect x="970" y="309" width="2" height="2" fill="#c11667"/><rect x="972" y="309" width="2" height="2" fill="#c31664"/><rect x="974" y="309" width="2" height="2" fill="#c41661"/><rect x="976" y="309" width="2" height="2" fill="#c6165e"/><rect x="978" y="309" width="2" height="2" fill="#c7165b"/><rect x="980" y="309" width="2" height="2" fill="#c91658"/><rect x="882" y="311" width="2" height="2" fill="#166bc3"/><rect x="884" y="311" width="2" height="2" fill="#1669c2"/><rect x="886" y="311" width="2" height="2" fill="#1668c1"/><rect x="888" y="311" width="2" height="2" fill="#1667c1"/><rect x="890" y="311" width="2" height="2" fill="#1b65c0"/><rect x="892" y="311" width="2" height="2" fill="#1f64bf"/><rect x="894" y="311" width="2" height="2" fill="#2362be"/><rect x="896" y="311" width="2" height="2" fill="#2860be"/><rect x="898" y="311" width="2" height="2" fill="#2c5fbd"/><rect x="900" y="311" width="2" height="2" fill="#315dbc"/><rect x="902" y="311" width="2" height="2" fill="#365cbb"/><rect x="904" y="311" width="2" height="2" fill="#3a5abb"/><rect x="906" y="311" width="2" height="2" fill="#3f58ba"/><rect x="908" y="311" width="2" height="2" fill="#4457b9"/><rect x="910" y="311" width="2" height="2" fill="#4955b8"/><rect x="912" y="311" width="2" height="2" fill="#4f53b8"/><rect x="914" y="311" width="2" height="2" fill="#5452b7"/><rect x="916" y="311" width="2" height="2" fill="#5950b6"/><rect x="918" y="311" width="2" height="2" fill="#5f4eb5"/><rect x="920" y="311" width="2" height="2" fill="#644cb5"/><rect x="922" y="311" width="2" height="2" fill="#6a4ab4"/><rect x="924" y="311" width="2" height="2" fill="#7048b3"/><rect x="926" y="311" width="2" height="2" fill="#7646b2"/><rect x="928" y="311" width="2" height="2" fill="#7c44b2"/><rect x="930" y="311" width="2" height="2" fill="#8342b1"/><rect x="932" y="311" width="2" height="2" fill="#8940b0"/><rect x="934" y="311" width="2" height="2" fill="#903eaf"/><rect x="936" y="311" width="2" height="2" fill="#973caf"/><rect x="938" y="311" width="2" height="2" fill="#9e3aae"/><rect x="940" y="311" width="2" height="2" fill="#a537ad"/><rect x="942" y="311" width="2" height="2" fill="#ac35ac"/><rect x="944" y="311" width="2" height="2" fill="#ae32a6"/><rect x="946" y="311" width="2" height="2" fill="#af2e9f"/><rect x="948" y="311" width="2" height="2" fill="#b12b9a"/><rect x="950" y="311" width="2" height="2" fill="#b32894"/><rect x="952" y="311" width="2" height="2" fill="#b4258f"/><rect x="954" y="311" width="2" height="2" fill="#b6238a"/><rect x="956" y="311" width="2" height="2" fill="#b72085"/><rect x="958" y="311" width="2" height="2" fill="#b91d81"/><rect x="960" y="311" width="2" height="2" fill="#ba1b7c"/><rect x="962" y="311" width="2" height="2" fill="#bc1978"/><rect x="964" y="311" width="2" height="2" fill="#bd1774"/><rect x="966" y="311" width="2" height="2" fill="#bf1671"/><rect x="968" y="311" width="2" height="2" fill="#c0166d"/><rect x="970" y="311" width="2" height="2" fill="#c2166a"/><rect x="972" y="311" width="2" height="2" fill="#c31666"/><rect x="974" y="311" width="2" height="2" fill="#c51663"/><rect x="976" y="311" width="2" height="2" fill="#c61660"/><rect x="978" y="311" width="2" height="2" fill="#c8165d"/><rect x="882" y="313" width="2" height="2" fill="#1666c4"/><rect x="884" y="313" width="2" height="2" fill="#1665c3"/><rect x="886" y="313" width="2" height="2" fill="#1663c2"/><rect x="888" y="313" width="2" height="2" fill="#1862c2"/><rect x="890" y="313" width="2" height="2" fill="#1c60c1"/><rect x="892" y="313" width="2" height="2" fill="#205fc0"/><rect x="894" y="313" width="2" height="2" fill="#245dbf"/><rect x="896" y="313" width="2" height="2" fill="#295cbf"/><rect x="898" y="313" width="2" height="2" fill="#2d5abe"/><rect x="900" y="313" width="2" height="2" fill="#3259bd"/><rect x="902" y="313" width="2" height="2" fill="#3757bc"/><rect x="904" y="313" width="2" height="2" fill="#3b55bc"/><rect x="906" y="313" width="2" height="2" fill="#4054bb"/><rect x="908" y="313" width="2" height="2" fill="#4552ba"/><rect x="910" y="313" width="2" height="2" fill="#4a50b9"/><rect x="912" y="313" width="2" height="2" fill="#4f4eb9"/><rect x="914" y="313" width="2" height="2" fill="#544db8"/><rect x="916" y="313" width="2" height="2" fill="#5a4bb7"/><rect x="918" y="313" width="2" height="2" fill="#5f49b6"/><rect x="920" y="313" width="2" height="2" fill="#6547b6"/><rect x="922" y="313" width="2" height="2" fill="#6a45b5"/><rect x="924" y="313" width="2" height="2" fill="#7043b4"/><rect x="926" y="313" width="2" height="2" fill="#7641b3"/><rect x="928" y="313" width="2" height="2" fill="#7c3fb3"/><rect x="930" y="313" width="2" height="2" fill="#833db2"/><rect x="932" y="313" width="2" height="2" fill="#893bb1"/><rect x="934" y="313" width="2" height="2" fill="#9039b0"/><rect x="936" y="313" width="2" height="2" fill="#9637b0"/><rect x="938" y="313" width="2" height="2" fill="#9d34af"/><rect x="940" y="313" width="2" height="2" fill="#a432ae"/><rect x="942" y="313" width="2" height="2" fill="#ac30ad"/><rect x="944" y="313" width="2" height="2" fill="#ae2da8"/><rect x="946" y="313" width="2" height="2" fill="#b029a2"/><rect x="948" y="313" width="2" height="2" fill="#b1269c"/><rect x="950" y="313" width="2" height="2" fill="#b32496"/><rect x="952" y="313" width="2" height="2" fill="#b42191"/><rect x="954" y="313" width="2" height="2" fill="#b61e8c"/><rect x="956" y="313" width="2" height="2" fill="#b71c88"/><rect x="958" y="313" width="2" height="2" fill="#b91983"/><rect x="960" y="313" width="2" height="2" fill="#ba177f"/><rect x="962" y="313" width="2" height="2" fill="#bc167b"/><rect x="964" y="313" width="2" height="2" fill="#bd1677"/><rect x="966" y="313" width="2" height="2" fill="#bf1673"/><rect x="968" y="313" width="2" height="2" fill="#c0166f"/><rect x="970" y="313" width="2" height="2" fill="#c2166c"/><rect x="972" y="313" width="2" height="2" fill="#c31669"/><rect x="974" y="313" width="2" height="2" fill="#c51665"/><rect x="880" y="315" width="2" height="2" fill="#1663c6"/><rect x="882" y="315" width="2" height="2" fill="#1662c5"/><rect x="884" y="315" width="2" height="2" fill="#1661c4"/><rect x="886" y="315" width="2" height="2" fill="#165fc3"/><rect x="888" y="315" width="2" height="2" fill="#195ec3"/><rect x="890" y="315" width="2" height="2" fill="#1d5cc2"/><rect x="892" y="315" width="2" height="2" fill="#215ac1"/><rect x="894" y="315" width="2" height="2" fill="#2559c0"/><rect x="896" y="315" width="2" height="2" fill="#2a57c0"/><rect x="898" y="315" width="2" height="2" fill="#2e56bf"/><rect x="900" y="315" width="2" height="2" fill="#3354be"/><rect x="902" y="315" width="2" height="2" fill="#3752bd"/><rect x="904" y="315" width="2" height="2" fill="#3c51bd"/><rect x="906" y="315" width="2" height="2" fill="#414fbc"/><rect x="908" y="315" width="2" height="2" fill="#464dbb"/><rect x="910" y="315" width="2" height="2" fill="#4b4bba"/><rect x="912" y="315" width="2" height="2" fill="#504aba"/><rect x="914" y="315" width="2" height="2" fill="#5548b9"/><rect x="916" y="315" width="2" height="2" fill="#5a46b8"/><rect x="918" y="315" width="2" height="2" fill="#6044b7"/><rect x="920" y="315" width="2" height="2" fill="#6542b7"/><rect x="922" y="315" width="2" height="2" fill="#6b40b6"/><rect x="924" y="315" width="2" height="2" fill="#703eb5"/><rect x="926" y="315" width="2" height="2" fill="#763cb4"/><rect x="928" y="315" width="2" height="2" fill="#7c3ab4"/><rect x="930" y="315" width="2" height="2" fill="#8238b3"/><rect x="932" y="315" width="2" height="2" fill="#8936b2"/><rect x="934" y="315" width="2" height="2" fill="#8f34b1"/><rect x="936" y="315" width="2" height="2" fill="#9631b1"/><rect x="938" y="315" width="2" height="2" fill="#9d2fb0"/><rect x="940" y="315" width="2" height="2" fill="#a42daf"/><rect x="942" y="315" width="2" height="2" fill="#ab2aae"/><rect x="944" y="315" width="2" height="2" fill="#af28aa"/><rect x="946" y="315" width="2" height="2" fill="#b025a4"/><rect x="948" y="315" width="2" height="2" fill="#b2229e"/><rect x="950" y="315" width="2" height="2" fill="#b31f99"/><rect x="952" y="315" width="2" height="2" fill="#b51c94"/><rect x="954" y="315" width="2" height="2" fill="#b61a8f"/><rect x="956" y="315" width="2" height="2" fill="#b8178a"/><rect x="958" y="315" width="2" height="2" fill="#b91685"/><rect x="960" y="315" width="2" height="2" fill="#bb1681"/><rect x="962" y="315" width="2" height="2" fill="#bc167d"/><rect x="964" y="315" width="2" height="2" fill="#be1679"/><rect x="966" y="315" width="2" height="2" fill="#bf1675"/><rect x="968" y="315" width="2" height="2" fill="#c11672"/><rect x="970" y="315" width="2" height="2" fill="#c2166e"/><rect x="880" y="317" width="2" height="2" fill="#165fc7"/><rect x="882" y="317" width="2" height="2" fill="#165ec6"/><rect x="884" y="317" width="2" height="2" fill="#165cc5"/><rect x="886" y="317" width="2" height="2" fill="#165bc4"/><rect x="888" y="317" width="2" height="2" fill="#1a59c4"/><rect x="890" y="317" width="2" height="2" fill="#1e58c3"/><rect x="892" y="317" width="2" height="2" fill="#2256c2"/><rect x="894" y="317" width="2" height="2" fill="#2654c1"/><rect x="896" y="317" width="2" height="2" fill="#2b53c1"/><rect x="898" y="317" width="2" height="2" fill="#2f51c0"/><rect x="900" y="317" width="2" height="2" fill="#344fbf"/><rect x="902" y="317" width="2" height="2" fill="#384ebe"/><rect x="904" y="317" width="2" height="2" fill="#3d4cbe"/><rect x="906" y="317" width="2" height="2" fill="#424abd"/><rect x="908" y="317" width="2" height="2" fill="#4649bc"/><rect x="910" y="317" width="2" height="2" fill="#4b47bb"/><rect x="912" y="317" width="2" height="2" fill="#5045bb"/><rect x="914" y="317" width="2" height="2" fill="#5543ba"/><rect x="916" y="317" width="2" height="2" fill="#5b41b9"/><rect x="918" y="317" width="2" height="2" fill="#603fb8"/><rect x="920" y="317" width="2" height="2" fill="#653db8"/><rect x="922" y="317" width="2" height="2" fill="#6b3bb7"/><rect x="924" y="317" width="2" height="2" fill="#7139b6"/><rect x="926" y="317" width="2" height="2" fill="#7637b5"/><rect x="928" y="317" width="2" height="2" fill="#7c35b5"/><rect x="930" y="317" width="2" height="2" fill="#8233b4"/><rect x="932" y="317" width="2" height="2" fill="#8931b3"/><rect x="934" y="317" width="2" height="2" fill="#8f2fb2"/><rect x="936" y="317" width="2" height="2" fill="#952cb1"/><rect x="938" y="317" width="2" height="2" fill="#9c2ab1"/><rect x="940" y="317" width="2" height="2" fill="#a328b0"/><rect x="942" y="317" width="2" height="2" fill="#aa25af"/><rect x="944" y="317" width="2" height="2" fill="#af23ad"/><rect x="946" y="317" width="2" height="2" fill="#b120a6"/><rect x="948" y="317" width="2" height="2" fill="#b21da1"/><rect x="950" y="317" width="2" height="2" fill="#b41a9b"/><rect x="952" y="317" width="2" height="2" fill="#b51896"/><rect x="954" y="317" width="2" height="2" fill="#b71691"/><rect x="956" y="317" width="2" height="2" fill="#b8168c"/><rect x="958" y="317" width="2" height="2" fill="#ba1688"/><rect x="960" y="317" width="2" height="2" fill="#bb1683"/><rect x="962" y="317" width="2" height="2" fill="#bd167f"/><rect x="964" y="317" width="2" height="2" fill="#be167b"/><rect x="966" y="317" width="2" height="2" fill="#c01678"/><rect x="880" y="319" width="2" height="2" fill="#165bc8"/><rect x="882" y="319" width="2" height="2" fill="#1659c7"/><rect x="884" y="319" width="2" height="2" fill="#1658c6"/><rect x="886" y="319" width="2" height="2" fill="#1756c5"/><rect x="888" y="319" width="2" height="2" fill="#1b55c5"/><rect x="890" y="319" width="2" height="2" fill="#1f53c4"/><rect x="892" y="319" width="2" height="2" fill="#2352c3"/><rect x="894" y="319" width="2" height="2" fill="#2750c2"/><rect x="896" y="319" width="2" height="2" fill="#2c4ec2"/><rect x="898" y="319" width="2" height="2" fill="#304dc1"/><rect x="900" y="319" width="2" height="2" fill="#354bc0"/><rect x="902" y="319" width="2" height="2" fill="#3949bf"/><rect x="904" y="319" width="2" height="2" fill="#3e48be"/><rect x="906" y="319" width="2" height="2" fill="#4246be"/><rect x="908" y="319" width="2" height="2" fill="#4744bd"/><rect x="910" y="319" width="2" height="2" fill="#4c42bc"/><rect x="912" y="319" width="2" height="2" fill="#5140bb"/><rect x="914" y="319" width="2" height="2" fill="#563fbb"/><rect x="916" y="319" width="2" height="2" fill="#5b3dba"/><rect x="918" y="319" width="2" height="2" fill="#603bb9"/><rect x="920" y="319" width="2" height="2" fill="#6639b8"/><rect x="922" y="319" width="2" height="2" fill="#6b37b8"/><rect x="924" y="319" width="2" height="2" fill="#7135b7"/><rect x="926" y="319" width="2" height="2" fill="#7633b6"/><rect x="928" y="319" width="2" height="2" fill="#7c31b5"/><rect x="930" y="319" width="2" height="2" fill="#822eb5"/><rect x="932" y="319" width="2" height="2" fill="#882cb4"/><rect x="934" y="319" width="2" height="2" fill="#8f2ab3"/><rect x="936" y="319" width="2" height="2" fill="#9528b2"/><rect x="938" y="319" width="2" height="2" fill="#9b25b2"/><rect x="940" y="319" width="2" height="2" fill="#a223b1"/><rect x="942" y="319" width="2" height="2" fill="#a920b0"/><rect x="944" y="319" width="2" height="2" fill="#b01eaf"/><rect x="946" y="319" width="2" height="2" fill="#b11ba9"/><rect x="948" y="319" width="2" height="2" fill="#b318a3"/><rect x="950" y="319" width="2" height="2" fill="#b4169d"/><rect x="952" y="319" width="2" height="2" fill="#b61698"/><rect x="954" y="319" width="2" height="2" fill="#b71693"/><rect x="956" y="319" width="2" height="2" fill="#b9168e"/><rect x="958" y="319" width="2" height="2" fill="#ba168a"/><rect x="960" y="319" width="2" height="2" fill="#bc1686"/><rect x="962" y="319" width="2" height="2" fill="#bd1681"/><rect x="880" y="321" width="2" height="2" fill="#1657c8"/><rect x="882" y="321" width="2" height="2" fill="#1655c8"/><rect x="884" y="321" width="2" height="2" fill="#1654c7"/><rect x="886" y="321" width="2" height="2" fill="#1852c6"/><rect x="888" y="321" width="2" height="2" fill="#1c51c5"/><rect x="890" y="321" width="2" height="2" fill="#204fc5"/><rect x="892" y="321" width="2" height="2" fill="#244dc4"/><rect x="894" y="321" width="2" height="2" fill="#284cc3"/><rect x="896" y="321" width="2" height="2" fill="#2d4ac2"/><rect x="898" y="321" width="2" height="2" fill="#3148c2"/><rect x="900" y="321" width="2" height="2" fill="#3547c1"/><rect x="902" y="321" width="2" height="2" fill="#3a45c0"/><rect x="904" y="321" width="2" height="2" fill="#3e43bf"/><rect x="906" y="321" width="2" height="2" fill="#4341bf"/><rect x="908" y="321" width="2" height="2" fill="#4840be"/><rect x="910" y="321" width="2" height="2" fill="#4d3ebd"/><rect x="912" y="321" width="2" height="2" fill="#523cbc"/><rect x="914" y="321" width="2" height="2" fill="#573abc"/><rect x="916" y="321" width="2" height="2" fill="#5c38bb"/><rect x="918" y="321" width="2" height="2" fill="#6136ba"/><rect x="920" y="321" width="2" height="2" fill="#6634b9"/><rect x="922" y="321" width="2" height="2" fill="#6b32b9"/><rect x="924" y="321" width="2" height="2" fill="#7130b8"/><rect x="926" y="321" width="2" height="2" fill="#772eb7"/><rect x="928" y="321" width="2" height="2" fill="#7c2cb6"/><rect x="930" y="321" width="2" height="2" fill="#822ab6"/><rect x="932" y="321" width="2" height="2" fill="#8827b5"/><rect x="934" y="321" width="2" height="2" fill="#8e25b4"/><rect x="936" y="321" width="2" height="2" fill="#9523b3"/><rect x="938" y="321" width="2" height="2" fill="#9b20b3"/><rect x="940" y="321" width="2" height="2" fill="#a21eb2"/><rect x="942" y="321" width="2" height="2" fill="#a81cb1"/><rect x="944" y="321" width="2" height="2" fill="#af19b0"/><rect x="946" y="321" width="2" height="2" fill="#b216ab"/><rect x="948" y="321" width="2" height="2" fill="#b316a5"/><rect x="950" y="321" width="2" height="2" fill="#b516a0"/><rect x="952" y="321" width="2" height="2" fill="#b6169a"/><rect x="954" y="321" width="2" height="2" fill="#b81695"/><rect x="956" y="321" width="2" height="2" fill="#b91691"/><rect x="958" y="321" width="2" height="2" fill="#bb168c"/><rect x="960" y="321" width="2" height="2" fill="#bc1688"/><rect x="878" y="323" width="2" height="2" fill="#1654ca"/><rect x="880" y="323" width="2" height="2" fill="#1653c9"/><rect x="882" y="323" width="2" height="2" fill="#1651c9"/><rect x="884" y="323" width="2" height="2" fill="#1650c8"/><rect x="886" y="323" width="2" height="2" fill="#194ec7"/><rect x="888" y="323" width="2" height="2" fill="#1d4dc6"/><rect x="890" y="323" width="2" height="2" fill="#214bc6"/><rect x="892" y="323" width="2" height="2" fill="#2549c5"/><rect x="894" y="323" width="2" height="2" fill="#2948c4"/><rect x="896" y="323" width="2" height="2" fill="#2e46c3"/><rect x="898" y="323" width="2" height="2" fill="#3244c3"/><rect x="900" y="323" width="2" height="2" fill="#3643c2"/><rect x="902" y="323" width="2" height="2" fill="#3b41c1"/><rect x="904" y="323" width="2" height="2" fill="#3f3fc0"/><rect x="906" y="323" width="2" height="2" fill="#443dc0"/><rect x="908" y="323" width="2" height="2" fill="#493bbf"/><rect x="910" y="323" width="2" height="2" fill="#4d3abe"/><rect x="912" y="323" width="2" height="2" fill="#5238bd"/><rect x="914" y="323" width="2" height="2" fill="#5736bd"/><rect x="916" y="323" width="2" height="2" fill="#5c34bc"/><rect x="918" y="323" width="2" height="2" fill="#6132bb"/><rect x="920" y="323" width="2" height="2" fill="#6630ba"/><rect x="922" y="323" width="2" height="2" fill="#6c2eba"/><rect x="924" y="323" width="2" height="2" fill="#712cb9"/><rect x="926" y="323" width="2" height="2" fill="#772ab8"/><rect x="928" y="323" width="2" height="2" fill="#7c27b7"/><rect x="930" y="323" width="2" height="2" fill="#8225b7"/><rect x="932" y="323" width="2" height="2" fill="#8823b6"/><rect x="934" y="323" width="2" height="2" fill="#8e21b5"/><rect x="936" y="323" width="2" height="2" fill="#941eb4"/><rect x="938" y="323" width="2" height="2" fill="#9b1cb4"/><rect x="940" y="323" width="2" height="2" fill="#a119b3"/><rect x="942" y="323" width="2" height="2" fill="#a817b2"/><rect x="944" y="323" width="2" height="2" fill="#ae16b1"/><rect x="946" y="323" width="2" height="2" fill="#b216ad"/><rect x="948" y="323" width="2" height="2" fill="#b316a7"/><rect x="950" y="323" width="2" height="2" fill="#b516a2"/><rect x="952" y="323" width="2" height="2" fill="#b7169d"/><rect x="954" y="323" width="2" height="2" fill="#b81698"/><rect x="956" y="323" width="2" height="2" fill="#ba1693"/><rect x="878" y="325" width="2" height="2" fill="#1650cb"/><rect x="880" y="325" width="2" height="2" fill="#164fca"/><rect x="882" y="325" width="2" height="2" fill="#164dca"/><rect x="884" y="325" width="2" height="2" fill="#164cc9"/><rect x="886" y="325" width="2" height="2" fill="#1a4ac8"/><rect x="888" y="325" width="2" height="2" fill="#1e49c7"/><rect x="890" y="325" width="2" height="2" fill="#2247c7"/><rect x="892" y="325" width="2" height="2" fill="#2645c6"/><rect x="894" y="325" width="2" height="2" fill="#2a44c5"/><rect x="896" y="325" width="2" height="2" fill="#2f42c4"/><rect x="898" y="325" width="2" height="2" fill="#3340c4"/><rect x="900" y="325" width="2" height="2" fill="#373ec3"/><rect x="902" y="325" width="2" height="2" fill="#3c3dc2"/><rect x="904" y="325" width="2" height="2" fill="#403bc1"/><rect x="906" y="325" width="2" height="2" fill="#4539c1"/><rect x="908" y="325" width="2" height="2" fill="#4937c0"/><rect x="910" y="325" width="2" height="2" fill="#4e35bf"/><rect x="912" y="325" width="2" height="2" fill="#5333be"/><rect x="914" y="325" width="2" height="2" fill="#5831be"/><rect x="916" y="325" width="2" height="2" fill="#5c2fbd"/><rect x="918" y="325" width="2" height="2" fill="#622dbc"/><rect x="920" y="325" width="2" height="2" fill="#672bbb"/><rect x="922" y="325" width="2" height="2" fill="#6c29bb"/><rect x="924" y="325" width="2" height="2" fill="#7127ba"/><rect x="926" y="325" width="2" height="2" fill="#7725b9"/><rect x="928" y="325" width="2" height="2" fill="#7c23b8"/><rect x="930" y="325" width="2" height="2" fill="#8221b8"/><rect x="932" y="325" width="2" height="2" fill="#881eb7"/><rect x="934" y="325" width="2" height="2" fill="#8e1cb6"/><rect x="936" y="325" width="2" height="2" fill="#941ab5"/><rect x="938" y="325" width="2" height="2" fill="#9a17b5"/><rect x="940" y="325" width="2" height="2" fill="#a016b4"/><rect x="942" y="325" width="2" height="2" fill="#a716b3"/><rect x="944" y="325" width="2" height="2" fill="#ae16b2"/><rect x="946" y="325" width="2" height="2" fill="#b216af"/><rect x="948" y="325" width="2" height="2" fill="#b416aa"/><rect x="950" y="325" width="2" height="2" fill="#b516a4"/><rect x="952" y="325" width="2" height="2" fill="#b7169f"/><rect x="878" y="327" width="2" height="2" fill="#164dcc"/><rect x="880" y="327" width="2" height="2" fill="#164bcb"/><rect x="882" y="327" width="2" height="2" fill="#1649cb"/><rect x="884" y="327" width="2" height="2" fill="#1748ca"/><rect x="886" y="327" width="2" height="2" fill="#1b46c9"/><rect x="888" y="327" width="2" height="2" fill="#1f45c8"/><rect x="890" y="327" width="2" height="2" fill="#2343c8"/><rect x="892" y="327" width="2" height="2" fill="#2741c7"/><rect x="894" y="327" width="2" height="2" fill="#2b40c6"/><rect x="896" y="327" width="2" height="2" fill="#2f3ec5"/><rect x="898" y="327" width="2" height="2" fill="#343cc5"/><rect x="900" y="327" width="2" height="2" fill="#383ac4"/><rect x="902" y="327" width="2" height="2" fill="#3c39c3"/><rect x="904" y="327" width="2" height="2" fill="#4137c2"/><rect x="906" y="327" width="2" height="2" fill="#4535c2"/><rect x="908" y="327" width="2" height="2" fill="#4a33c1"/><rect x="910" y="327" width="2" height="2" fill="#4e31c0"/><rect x="912" y="327" width="2" height="2" fill="#532fbf"/><rect x="914" y="327" width="2" height="2" fill="#582dbf"/><rect x="916" y="327" width="2" height="2" fill="#5d2bbe"/><rect x="918" y="327" width="2" height="2" fill="#6229bd"/><rect x="920" y="327" width="2" height="2" fill="#6727bc"/><rect x="922" y="327" width="2" height="2" fill="#6c25bb"/><rect x="924" y="327" width="2" height="2" fill="#7123bb"/><rect x="926" y="327" width="2" height="2" fill="#7721ba"/><rect x="928" y="327" width="2" height="2" fill="#7c1fb9"/><rect x="930" y="327" width="2" height="2" fill="#821cb8"/><rect x="932" y="327" width="2" height="2" fill="#881ab8"/><rect x="934" y="327" width="2" height="2" fill="#8e18b7"/><rect x="936" y="327" width="2" height="2" fill="#9416b6"/><rect x="938" y="327" width="2" height="2" fill="#9a16b5"/><rect x="940" y="327" width="2" height="2" fill="#a016b5"/><rect x="942" y="327" width="2" height="2" fill="#a616b4"/><rect x="944" y="327" width="2" height="2" fill="#ad16b3"/><rect x="946" y="327" width="2" height="2" fill="#b316b2"/><rect x="948" y="327" width="2" height="2" fill="#b416ac"/><rect x="876" y="329" width="2" height="2" fill="#164ace"/><rect x="878" y="329" width="2" height="2" fill="#1649cd"/><rect x="880" y="329" width="2" height="2" fill="#1647cc"/><rect x="882" y="329" width="2" height="2" fill="#1646cb"/><rect x="884" y="329" width="2" height="2" fill="#1844cb"/><rect x="886" y="329" width="2" height="2" fill="#1c42ca"/><rect x="888" y="329" width="2" height="2" fill="#2041c9"/><rect x="890" y="329" width="2" height="2" fill="#243fc8"/><rect x="892" y="329" width="2" height="2" fill="#283dc8"/><rect x="894" y="329" width="2" height="2" fill="#2c3cc7"/><rect x="896" y="329" width="2" height="2" fill="#303ac6"/><rect x="898" y="329" width="2" height="2" fill="#3438c5"/><rect x="900" y="329" width="2" height="2" fill="#3936c5"/><rect x="902" y="329" width="2" height="2" fill="#3d35c4"/><rect x="904" y="329" width="2" height="2" fill="#4133c3"/><rect x="906" y="329" width="2" height="2" fill="#4631c2"/><rect x="908" y="329" width="2" height="2" fill="#4a2fc2"/><rect x="910" y="329" width="2" height="2" fill="#4f2dc1"/><rect x="912" y="329" width="2" height="2" fill="#542bc0"/><rect x="914" y="329" width="2" height="2" fill="#5929bf"/><rect x="916" y="329" width="2" height="2" fill="#5d27bf"/><rect x="918" y="329" width="2" height="2" fill="#6225be"/><rect x="920" y="329" width="2" height="2" fill="#6723bd"/><rect x="922" y="329" width="2" height="2" fill="#6c21bc"/><rect x="924" y="329" width="2" height="2" fill="#721fbc"/><rect x="926" y="329" width="2" height="2" fill="#771dbb"/><rect x="928" y="329" width="2" height="2" fill="#7c1aba"/><rect x="930" y="329" width="2" height="2" fill="#8218b9"/><rect x="932" y="329" width="2" height="2" fill="#8816b9"/><rect x="934" y="329" width="2" height="2" fill="#8d16b8"/><rect x="936" y="329" width="2" height="2" fill="#9316b7"/><rect x="938" y="329" width="2" height="2" fill="#9916b6"/><rect x="940" y="329" width="2" height="2" fill="#9f16b6"/><rect x="942" y="329" width="2" height="2" fill="#a616b5"/><rect x="944" y="329" width="2" height="2" fill="#ac16b4"/><rect x="876" y="331" width="2" height="2" fill="#1647cf"/><rect x="878" y="331" width="2" height="2" fill="#1645ce"/><rect x="880" y="331" width="2" height="2" fill="#1643cd"/><rect x="882" y="331" width="2" height="2" fill="#1642cc"/><rect x="884" y="331" width="2" height="2" fill="#1940cc"/><rect x="886" y="331" width="2" height="2" fill="#1d3ecb"/><rect x="888" y="331" width="2" height="2" fill="#213dca"/><rect x="890" y="331" width="2" height="2" fill="#253bc9"/><rect x="892" y="331" width="2" height="2" fill="#2939c9"/><rect x="894" y="331" width="2" height="2" fill="#2d38c8"/><rect x="896" y="331" width="2" height="2" fill="#3136c7"/><rect x="898" y="331" width="2" height="2" fill="#3534c6"/><rect x="900" y="331" width="2" height="2" fill="#3a32c6"/><rect x="902" y="331" width="2" height="2" fill="#3e31c5"/><rect x="904" y="331" width="2" height="2" fill="#422fc4"/><rect x="906" y="331" width="2" height="2" fill="#472dc3"/><rect x="908" y="331" width="2" height="2" fill="#4b2bc3"/><rect x="910" y="331" width="2" height="2" fill="#5029c2"/><rect x="912" y="331" width="2" height="2" fill="#5427c1"/><rect x="914" y="331" width="2" height="2" fill="#5925c0"/><rect x="916" y="331" width="2" height="2" fill="#5e23c0"/><rect x="918" y="331" width="2" height="2" fill="#6321bf"/><rect x="920" y="331" width="2" height="2" fill="#681fbe"/><rect x="922" y="331" width="2" height="2" fill="#6d1dbd"/><rect x="924" y="331" width="2" height="2" fill="#721bbd"/><rect x="926" y="331" width="2" height="2" fill="#7719bc"/><rect x="928" y="331" width="2" height="2" fill="#7d16bb"/><rect x="930" y="331" width="2" height="2" fill="#8216ba"/><rect x="932" y="331" width="2" height="2" fill="#8816ba"/><rect x="934" y="331" width="2" height="2" fill="#8d16b9"/><rect x="936" y="331" width="2" height="2" fill="#9316b8"/><rect x="938" y="331" width="2" height="2" fill="#9916b7"/><rect x="940" y="331" width="2" height="2" fill="#9f16b7"/><rect x="942" y="331" width="2" height="2" fill="#a516b6"/><rect x="876" y="333" width="2" height="2" fill="#1643d0"/><rect x="878" y="333" width="2" height="2" fill="#1641cf"/><rect x="880" y="333" width="2" height="2" fill="#1640ce"/><rect x="882" y="333" width="2" height="2" fill="#173ecd"/><rect x="884" y="333" width="2" height="2" fill="#1a3ccd"/><rect x="886" y="333" width="2" height="2" fill="#1e3bcc"/><rect x="888" y="333" width="2" height="2" fill="#2239cb"/><rect x="890" y="333" width="2" height="2" fill="#2637ca"/><rect x="892" y="333" width="2" height="2" fill="#2a36ca"/><rect x="894" y="333" width="2" height="2" fill="#2e34c9"/><rect x="896" y="333" width="2" height="2" fill="#3232c8"/><rect x="898" y="333" width="2" height="2" fill="#3630c7"/><rect x="900" y="333" width="2" height="2" fill="#3a2fc7"/><rect x="902" y="333" width="2" height="2" fill="#3f2dc6"/><rect x="904" y="333" width="2" height="2" fill="#432bc5"/><rect x="906" y="333" width="2" height="2" fill="#4729c4"/><rect x="908" y="333" width="2" height="2" fill="#4c27c4"/><rect x="910" y="333" width="2" height="2" fill="#5025c3"/><rect x="912" y="333" width="2" height="2" fill="#5523c2"/><rect x="914" y="333" width="2" height="2" fill="#5a21c1"/><rect x="916" y="333" width="2" height="2" fill="#5e1fc1"/><rect x="918" y="333" width="2" height="2" fill="#631dc0"/><rect x="920" y="333" width="2" height="2" fill="#681bbf"/><rect x="922" y="333" width="2" height="2" fill="#6d19be"/><rect x="924" y="333" width="2" height="2" fill="#7217be"/><rect x="926" y="333" width="2" height="2" fill="#7716bd"/><rect x="928" y="333" width="2" height="2" fill="#7d16bc"/><rect x="930" y="333" width="2" height="2" fill="#8216bb"/><rect x="932" y="333" width="2" height="2" fill="#8816bb"/><rect x="934" y="333" width="2" height="2" fill="#8d16ba"/><rect x="936" y="333" width="2" height="2" fill="#9316b9"/><rect x="938" y="333" width="2" height="2" fill="#9916b8"/><rect x="876" y="335" width="2" height="2" fill="#163fd1"/><rect x="878" y="335" width="2" height="2" fill="#163ed0"/><rect x="880" y="335" width="2" height="2" fill="#163ccf"/><rect x="882" y="335" width="2" height="2" fill="#183ace"/><rect x="884" y="335" width="2" height="2" fill="#1b39ce"/><rect x="886" y="335" width="2" height="2" fill="#1f37cd"/><rect x="888" y="335" width="2" height="2" fill="#2335cc"/><rect x="890" y="335" width="2" height="2" fill="#2734cb"/><rect x="892" y="335" width="2" height="2" fill="#2b32cb"/><rect x="894" y="335" width="2" height="2" fill="#2f30ca"/><rect x="896" y="335" width="2" height="2" fill="#332ec9"/><rect x="898" y="335" width="2" height="2" fill="#372dc8"/><rect x="900" y="335" width="2" height="2" fill="#3b2bc8"/><rect x="902" y="335" width="2" height="2" fill="#3f29c7"/><rect x="904" y="335" width="2" height="2" fill="#4427c6"/><rect x="906" y="335" width="2" height="2" fill="#4825c5"/><rect x="908" y="335" width="2" height="2" fill="#4c23c5"/><rect x="910" y="335" width="2" height="2" fill="#5121c4"/><rect x="912" y="335" width="2" height="2" fill="#551fc3"/><rect x="914" y="335" width="2" height="2" fill="#5a1dc2"/><rect x="916" y="335" width="2" height="2" fill="#5f1bc2"/><rect x="918" y="335" width="2" height="2" fill="#6419c1"/><rect x="920" y="335" width="2" height="2" fill="#6817c0"/><rect x="922" y="335" width="2" height="2" fill="#6d16bf"/><rect x="924" y="335" width="2" height="2" fill="#7216bf"/><rect x="926" y="335" width="2" height="2" fill="#7716be"/><rect x="928" y="335" width="2" height="2" fill="#7d16bd"/><rect x="930" y="335" width="2" height="2" fill="#8216bc"/><rect x="932" y="335" width="2" height="2" fill="#8716bc"/><rect x="934" y="335" width="2" height="2" fill="#8d16bb"/><rect x="874" y="337" width="2" height="2" fill="#163dd2"/><rect x="876" y="337" width="2" height="2" fill="#163cd2"/><rect x="878" y="337" width="2" height="2" fill="#163ad1"/><rect x="880" y="337" width="2" height="2" fill="#1638d0"/><rect x="882" y="337" width="2" height="2" fill="#1937cf"/><rect x="884" y="337" width="2" height="2" fill="#1c35cf"/><rect x="886" y="337" width="2" height="2" fill="#2033ce"/><rect x="888" y="337" width="2" height="2" fill="#2432cd"/><rect x="890" y="337" width="2" height="2" fill="#2830cc"/><rect x="892" y="337" width="2" height="2" fill="#2c2ecc"/><rect x="894" y="337" width="2" height="2" fill="#302dcb"/><rect x="896" y="337" width="2" height="2" fill="#342bca"/><rect x="898" y="337" width="2" height="2" fill="#3829c9"/><rect x="900" y="337" width="2" height="2" fill="#3c27c8"/><rect x="902" y="337" width="2" height="2" fill="#4025c8"/><rect x="904" y="337" width="2" height="2" fill="#4423c7"/><rect x="906" y="337" width="2" height="2" fill="#4921c6"/><rect x="908" y="337" width="2" height="2" fill="#4d20c5"/><rect x="910" y="337" width="2" height="2" fill="#511ec5"/><rect x="912" y="337" width="2" height="2" fill="#561cc4"/><rect x="914" y="337" width="2" height="2" fill="#5b1ac3"/><rect x="916" y="337" width="2" height="2" fill="#5f18c2"/><rect x="918" y="337" width="2" height="2" fill="#6416c2"/><rect x="920" y="337" width="2" height="2" fill="#6916c1"/><rect x="922" y="337" width="2" height="2" fill="#6e16c0"/><rect x="924" y="337" width="2" height="2" fill="#7316bf"/><rect x="926" y="337" width="2" height="2" fill="#7816bf"/><rect x="928" y="337" width="2" height="2" fill="#7d16be"/><rect x="930" y="337" width="2" height="2" fill="#8216bd"/><rect x="874" y="339" width="2" height="2" fill="#163ad3"/><rect x="876" y="339" width="2" height="2" fill="#1638d2"/><rect x="878" y="339" width="2" height="2" fill="#1637d2"/><rect x="880" y="339" width="2" height="2" fill="#1635d1"/><rect x="882" y="339" width="2" height="2" fill="#1a33d0"/><rect x="884" y="339" width="2" height="2" fill="#1d32cf"/><rect x="886" y="339" width="2" height="2" fill="#2130cf"/><rect x="888" y="339" width="2" height="2" fill="#252ece"/><rect x="890" y="339" width="2" height="2" fill="#292ccd"/><rect x="892" y="339" width="2" height="2" fill="#2d2bcc"/><rect x="894" y="339" width="2" height="2" fill="#3129cc"/><rect x="896" y="339" width="2" height="2" fill="#3527cb"/><rect x="898" y="339" width="2" height="2" fill="#3925ca"/><rect x="900" y="339" width="2" height="2" fill="#3d23c9"/><rect x="902" y="339" width="2" height="2" fill="#4122c9"/><rect x="904" y="339" width="2" height="2" fill="#4520c8"/><rect x="906" y="339" width="2" height="2" fill="#491ec7"/><rect x="908" y="339" width="2" height="2" fill="#4e1cc6"/><rect x="910" y="339" width="2" height="2" fill="#521ac6"/><rect x="912" y="339" width="2" height="2" fill="#5618c5"/><rect x="914" y="339" width="2" height="2" fill="#5b16c4"/><rect x="916" y="339" width="2" height="2" fill="#6016c3"/><rect x="918" y="339" width="2" height="2" fill="#6416c3"/><rect x="920" y="339" width="2" height="2" fill="#6916c2"/><rect x="922" y="339" width="2" height="2" fill="#6e16c1"/><rect x="924" y="339" width="2" height="2" fill="#7316c0"/><rect x="926" y="339" width="2" height="2" fill="#7816c0"/><rect x="874" y="341" width="2" height="2" fill="#1636d4"/><rect x="876" y="341" width="2" height="2" fill="#1635d3"/><rect x="878" y="341" width="2" height="2" fill="#1633d3"/><rect x="880" y="341" width="2" height="2" fill="#1731d2"/><rect x="882" y="341" width="2" height="2" fill="#1b30d1"/><rect x="884" y="341" width="2" height="2" fill="#1e2ed0"/><rect x="886" y="341" width="2" height="2" fill="#222cd0"/><rect x="888" y="341" width="2" height="2" fill="#262bcf"/><rect x="890" y="341" width="2" height="2" fill="#2a29ce"/><rect x="892" y="341" width="2" height="2" fill="#2d27cd"/><rect x="894" y="341" width="2" height="2" fill="#3125cd"/><rect x="896" y="341" width="2" height="2" fill="#3524cc"/><rect x="898" y="341" width="2" height="2" fill="#3922cb"/><rect x="900" y="341" width="2" height="2" fill="#3d20ca"/><rect x="902" y="341" width="2" height="2" fill="#421eca"/><rect x="904" y="341" width="2" height="2" fill="#461cc9"/><rect x="906" y="341" width="2" height="2" fill="#4a1ac8"/><rect x="908" y="341" width="2" height="2" fill="#4e18c7"/><rect x="910" y="341" width="2" height="2" fill="#5316c7"/><rect x="912" y="341" width="2" height="2" fill="#5716c6"/><rect x="914" y="341" width="2" height="2" fill="#5c16c5"/><rect x="916" y="341" width="2" height="2" fill="#6016c4"/><rect x="918" y="341" width="2" height="2" fill="#6516c4"/><rect x="920" y="341" width="2" height="2" fill="#6916c3"/><rect x="922" y="341" width="2" height="2" fill="#6e16c2"/><rect x="924" y="341" width="2" height="2" fill="#7316c1"/><rect x="874" y="343" width="2" height="2" fill="#1633d5"/><rect x="876" y="343" width="2" height="2" fill="#1631d4"/><rect x="878" y="343" width="2" height="2" fill="#1630d4"/><rect x="880" y="343" width="2" height="2" fill="#182ed3"/><rect x="882" y="343" width="2" height="2" fill="#1c2cd2"/><rect x="884" y="343" width="2" height="2" fill="#1f2bd1"/><rect x="886" y="343" width="2" height="2" fill="#2329d1"/><rect x="888" y="343" width="2" height="2" fill="#2727d0"/><rect x="890" y="343" width="2" height="2" fill="#2a25cf"/><rect x="892" y="343" width="2" height="2" fill="#2e24ce"/><rect x="894" y="343" width="2" height="2" fill="#3222ce"/><rect x="896" y="343" width="2" height="2" fill="#3620cd"/><rect x="898" y="343" width="2" height="2" fill="#3a1ecc"/><rect x="900" y="343" width="2" height="2" fill="#3e1ccb"/><rect x="902" y="343" width="2" height="2" fill="#421acb"/><rect x="904" y="343" width="2" height="2" fill="#4619ca"/><rect x="906" y="343" width="2" height="2" fill="#4b17c9"/><rect x="908" y="343" width="2" height="2" fill="#4f16c8"/><rect x="910" y="343" width="2" height="2" fill="#5316c8"/><rect x="912" y="343" width="2" height="2" fill="#5816c7"/><rect x="914" y="343" width="2" height="2" fill="#5c16c6"/><rect x="916" y="343" width="2" height="2" fill="#6116c5"/><rect x="918" y="343" width="2" height="2" fill="#6516c5"/><rect x="920" y="343" width="2" height="2" fill="#6a16c4"/><rect x="874" y="345" width="2" height="2" fill="#1630d6"/><rect x="876" y="345" width="2" height="2" fill="#162ed5"/><rect x="878" y="345" width="2" height="2" fill="#162cd5"/><rect x="880" y="345" width="2" height="2" fill="#192bd4"/><rect x="882" y="345" width="2" height="2" fill="#1d29d3"/><rect x="884" y="345" width="2" height="2" fill="#2027d2"/><rect x="886" y="345" width="2" height="2" fill="#2425d2"/><rect x="888" y="345" width="2" height="2" fill="#2824d1"/><rect x="890" y="345" width="2" height="2" fill="#2b22d0"/><rect x="892" y="345" width="2" height="2" fill="#2f20cf"/><rect x="894" y="345" width="2" height="2" fill="#331ecf"/><rect x="896" y="345" width="2" height="2" fill="#371dce"/><rect x="898" y="345" width="2" height="2" fill="#3b1bcd"/><rect x="900" y="345" width="2" height="2" fill="#3f19cc"/><rect x="902" y="345" width="2" height="2" fill="#4317cc"/><rect x="904" y="345" width="2" height="2" fill="#4716cb"/><rect x="906" y="345" width="2" height="2" fill="#4b16ca"/><rect x="908" y="345" width="2" height="2" fill="#4f16c9"/><rect x="910" y="345" width="2" height="2" fill="#5416c9"/><rect x="912" y="345" width="2" height="2" fill="#5816c8"/><rect x="914" y="345" width="2" height="2" fill="#5c16c7"/><rect x="916" y="345" width="2" height="2" fill="#6116c6"/><rect x="874" y="347" width="2" height="2" fill="#162cd7"/><rect x="876" y="347" width="2" height="2" fill="#162bd6"/><rect x="878" y="347" width="2" height="2" fill="#1629d6"/><rect x="880" y="347" width="2" height="2" fill="#1a27d5"/><rect x="882" y="347" width="2" height="2" fill="#1d26d4"/><rect x="884" y="347" width="2" height="2" fill="#2124d3"/><rect x="886" y="347" width="2" height="2" fill="#2522d2"/><rect x="888" y="347" width="2" height="2" fill="#2820d2"/><rect x="890" y="347" width="2" height="2" fill="#2c1fd1"/><rect x="892" y="347" width="2" height="2" fill="#301dd0"/><rect x="894" y="347" width="2" height="2" fill="#341bcf"/><rect x="896" y="347" width="2" height="2" fill="#3819cf"/><rect x="898" y="347" width="2" height="2" fill="#3c17ce"/><rect x="900" y="347" width="2" height="2" fill="#4016cd"/><rect x="902" y="347" width="2" height="2" fill="#4416cc"/><rect x="904" y="347" width="2" height="2" fill="#4816cc"/><rect x="906" y="347" width="2" height="2" fill="#4c16cb"/><rect x="908" y="347" width="2" height="2" fill="#5016ca"/><rect x="910" y="347" width="2" height="2" fill="#5416c9"/><rect x="912" y="347" width="2" height="2" fill="#5916c9"/><rect x="874" y="349" width="2" height="2" fill="#1629d8"/><rect x="876" y="349" width="2" height="2" fill="#1627d7"/><rect x="878" y="349" width="2" height="2" fill="#1726d6"/><rect x="880" y="349" width="2" height="2" fill="#1b24d6"/><rect x="882" y="349" width="2" height="2" fill="#1e22d5"/><rect x="884" y="349" width="2" height="2" fill="#2221d4"/><rect x="886" y="349" width="2" height="2" fill="#261fd3"/><rect x="888" y="349" width="2" height="2" fill="#291dd3"/><rect x="890" y="349" width="2" height="2" fill="#2d1bd2"/><rect x="892" y="349" width="2" height="2" fill="#3119d1"/><rect x="894" y="349" width="2" height="2" fill="#3518d0"/><rect x="896" y="349" width="2" height="2" fill="#3816d0"/><rect x="898" y="349" width="2" height="2" fill="#3c16cf"/><rect x="900" y="349" width="2" height="2" fill="#4016ce"/><rect x="902" y="349" width="2" height="2" fill="#4416cd"/><rect x="904" y="349" width="2" height="2" fill="#4816cd"/><rect x="906" y="349" width="2" height="2" fill="#4c16cc"/><rect x="908" y="349" width="2" height="2" fill="#5116cb"/><rect x="874" y="351" width="2" height="2" fill="#1626d9"/><rect x="876" y="351" width="2" height="2" fill="#1624d8"/><rect x="878" y="351" width="2" height="2" fill="#1822d7"/><rect x="880" y="351" width="2" height="2" fill="#1c21d7"/><rect x="882" y="351" width="2" height="2" fill="#1f1fd6"/><rect x="884" y="351" width="2" height="2" fill="#231dd5"/><rect x="886" y="351" width="2" height="2" fill="#271cd4"/><rect x="888" y="351" width="2" height="2" fill="#2a1ad4"/><rect x="890" y="351" width="2" height="2" fill="#2e18d3"/><rect x="892" y="351" width="2" height="2" fill="#3216d2"/><rect x="894" y="351" width="2" height="2" fill="#3516d1"/><rect x="896" y="351" width="2" height="2" fill="#3916d1"/><rect x="898" y="351" width="2" height="2" fill="#3d16d0"/><rect x="900" y="351" width="2" height="2" fill="#4116cf"/><rect x="902" y="351" width="2" height="2" fill="#4516ce"/><rect x="904" y="351" width="2" height="2" fill="#4916ce"/><rect x="874" y="353" width="2" height="2" fill="#1623da"/><rect x="876" y="353" width="2" height="2" fill="#1621d9"/><rect x="878" y="353" width="2" height="2" fill="#191fd8"/><rect x="880" y="353" width="2" height="2" fill="#1d1dd8"/><rect x="882" y="353" width="2" height="2" fill="#201cd7"/><rect x="884" y="353" width="2" height="2" fill="#241ad6"/><rect x="886" y="353" width="2" height="2" fill="#2718d5"/><rect x="888" y="353" width="2" height="2" fill="#2b17d5"/><rect x="890" y="353" width="2" height="2" fill="#2f16d4"/><rect x="892" y="353" width="2" height="2" fill="#3216d3"/><rect x="894" y="353" width="2" height="2" fill="#3616d2"/><rect x="896" y="353" width="2" height="2" fill="#3a16d2"/><rect x="898" y="353" width="2" height="2" fill="#3e16d1"/><rect x="900" y="353" width="2" height="2" fill="#4216d0"/><rect x="902" y="353" width="2" height="2" fill="#4616cf"/><rect x="874" y="355" width="2" height="2" fill="#161fdb"/><rect x="876" y="355" width="2" height="2" fill="#171eda"/><rect x="878" y="355" width="2" height="2" fill="#1a1cd9"/><rect x="880" y="355" width="2" height="2" fill="#1e1ad9"/><rect x="882" y="355" width="2" height="2" fill="#2119d8"/><rect x="884" y="355" width="2" height="2" fill="#2517d7"/><rect x="886" y="355" width="2" height="2" fill="#2816d6"/><rect x="888" y="355" width="2" height="2" fill="#2c16d6"/><rect x="890" y="355" width="2" height="2" fill="#3016d5"/><rect x="892" y="355" width="2" height="2" fill="#3316d4"/><rect x="894" y="355" width="2" height="2" fill="#3716d3"/><rect x="896" y="355" width="2" height="2" fill="#3b16d3"/><rect x="898" y="355" width="2" height="2" fill="#3f16d2"/><rect x="874" y="357" width="2" height="2" fill="#161cdc"/><rect x="876" y="357" width="2" height="2" fill="#181bdb"/><rect x="878" y="357" width="2" height="2" fill="#1b19da"/><rect x="880" y="357" width="2" height="2" fill="#1f17d9"/><rect x="882" y="357" width="2" height="2" fill="#2216d9"/><rect x="884" y="357" width="2" height="2" fill="#2616d8"/><rect x="886" y="357" width="2" height="2" fill="#2916d7"/><rect x="888" y="357" width="2" height="2" fill="#2d16d6"/><rect x="890" y="357" width="2" height="2" fill="#3016d6"/><rect x="892" y="357" width="2" height="2" fill="#3416d5"/><rect x="894" y="357" width="2" height="2" fill="#3816d4"/><rect x="874" y="359" width="2" height="2" fill="#1619dd"/><rect x="876" y="359" width="2" height="2" fill="#1918dc"/><rect x="878" y="359" width="2" height="2" fill="#1c16db"/><rect x="880" y="359" width="2" height="2" fill="#1f16da"/><rect x="882" y="359" width="2" height="2" fill="#2316da"/><rect x="884" y="359" width="2" height="2" fill="#2616d9"/><rect x="886" y="359" width="2" height="2" fill="#2a16d8"/><rect x="888" y="359" width="2" height="2" fill="#2e16d7"/><rect x="890" y="359" width="2" height="2" fill="#3116d7"/><rect x="874" y="361" width="2" height="2" fill="#1616de"/><rect x="876" y="361" width="2" height="2" fill="#1a16dd"/><rect x="878" y="361" width="2" height="2" fill="#1d16dc"/><rect x="880" y="361" width="2" height="2" fill="#2016db"/><rect x="882" y="361" width="2" height="2" fill="#2416db"/><rect x="884" y="361" width="2" height="2" fill="#2716da"/><rect x="886" y="361" width="2" height="2" fill="#2b16d9"/></g><path d="M860.5 120V379M832 350.5H1091M889.5 120V379M832 321.5H1091M918.5 120V379M832 292.5H1091M946.5 120V379M832 263.5H1091M975.5 120V379M832 235.5H1091M1004.5 120V379M832 206.5H1091M1032.5 120V379M832 177.5H1091M1061.5 120V379M832 148.5H1091" stroke="#6a6a6a" stroke-width="1" opacity=".6"/><path d="M1015.7 284.0L918.2 206.4L875.3 361.6Z" fill="none" stroke="#f0f0f0" stroke-width="1"/><path d="M827 378.5H832M832.5 379V384M827 350.5H832M860.5 379V384M827 321.5H832M889.5 379V384M827 292.5H832M918.5 379V384M827 263.5H832M946.5 379V384M827 235.5H832M975.5 379V384M827 206.5H832M1004.5 379V384M827 177.5H832M1032.5 379V384M827 148.5H832M1061.5 379V384M827 120.5H832M1090.5 379V384" stroke="#000" stroke-width="1"/><path d="M882.18 377.46C882.17 377.47 882.13 377.48 882.09 377.49C882.06 377.50 882.01 377.52 881.95 377.52C881.89 377.52 881.84 377.53 881.75 377.52C881.66 377.51 881.58 377.53 881.41 377.43C881.23 377.33 881.02 377.19 880.69 376.92C880.36 376.64 879.99 376.28 879.40 375.77C878.81 375.25 878.14 374.71 877.17 373.81C876.19 372.91 875.11 372.28 873.56 370.36C872.00 368.44 869.50 365.02 867.85 362.28C866.21 359.55 865.27 357.53 863.70 353.94C862.13 350.36 860.41 346.21 858.46 340.75C856.50 335.29 854.17 328.98 851.98 321.20C849.79 313.42 847.47 304.25 845.31 294.09C843.15 283.93 840.81 271.91 839.03 260.25C837.26 248.59 835.59 235.71 834.65 224.11C833.71 212.51 833.15 200.79 833.42 190.64C833.69 180.50 834.61 170.75 836.28 163.22C837.95 155.68 840.56 149.46 843.44 145.45C846.33 141.44 849.99 139.86 853.59 139.18C857.18 138.50 861.18 140.03 865.02 141.37C868.86 142.70 872.86 145.07 876.62 147.20C880.38 149.34 883.99 151.72 887.57 154.19C891.14 156.66 894.60 159.29 898.08 162.04C901.56 164.78 905.01 167.69 908.45 170.66C911.89 173.63 915.29 176.73 918.71 179.86C922.12 183.00 925.52 186.22 928.94 189.47C932.35 192.71 935.78 196.04 939.19 199.36C942.60 202.68 946.00 206.05 949.39 209.39C952.78 212.73 956.19 216.10 959.53 219.42C962.88 222.75 966.21 226.08 969.48 229.34C972.74 232.61 975.98 235.85 979.13 239.00C982.28 242.16 985.39 245.27 988.39 248.26C991.38 251.25 994.32 254.17 997.09 256.94C999.87 259.72 1002.56 262.43 1005.03 264.91C1007.50 267.38 1009.77 269.65 1011.94 271.81C1014.10 273.97 1016.16 276.03 1018.01 277.87C1019.86 279.72 1021.53 281.36 1023.05 282.88C1024.57 284.39 1025.92 285.75 1027.15 286.99C1028.38 288.22 1029.44 289.29 1030.41 290.26C1031.39 291.24 1032.24 292.07 1033.02 292.85C1033.80 293.63 1034.47 294.31 1035.11 294.95C1035.75 295.59 1036.33 296.17 1036.86 296.70C1037.39 297.24 1037.86 297.71 1038.29 298.14C1038.72 298.57 1039.11 298.93 1039.44 299.26C1039.77 299.59 1040.05 299.87 1040.30 300.12C1040.55 300.38 1040.77 300.59 1040.96 300.79C1041.15 300.98 1041.27 301.10 1041.44 301.27C1041.62 301.45 1041.86 301.69 1042.02 301.85C1042.18 302.01 1042.29 302.12 1042.42 302.25C1042.55 302.38 1042.73 302.56 1042.79 302.63Z" fill="none" stroke="#e8e8e8" stroke-width="1" stroke-linejoin="round"/><polygon points="893.6,169.3 1029.1,289.2 875.6,366.0" fill="none" stroke="#e0d800" stroke-width="1"/><defs><radialGradient id="sph" cx=".4" cy=".35" r=".65"><stop offset="0" stop-color="#cfe6ff"/><stop offset=".6" stop-color="#8fc0f0"/><stop offset="1" stop-color="#5a88c0"/></radialGradient></defs><circle cx="1015.7" cy="283.4" r="7.6" fill="url(#sph)" stroke="#4a6a90" stroke-width=".6"/><circle cx="918.2" cy="205.8" r="7.6" fill="url(#sph)" stroke="#4a6a90" stroke-width=".6"/><circle cx="875.3" cy="361.0" r="7.6" fill="url(#sph)" stroke="#4a6a90" stroke-width=".6"/></svg>
<div class="t" style="left:793.3px;width:30px;text-align:right;top:373.07px;font-size:9.6px;line-height:11px;color:#000;letter-spacing:-0.25px;">0,00</div>
<div class="t" style="left:816.5px;width:30px;text-align:center;top:384.37px;font-size:9.6px;line-height:11px;color:#000;letter-spacing:-0.25px;">0,00</div>
<div class="t" style="left:793.3px;width:30px;text-align:right;top:345.07px;font-size:9.6px;line-height:11px;color:#000;letter-spacing:-0.25px;">0,10</div>
<div class="t" style="left:844.5px;width:30px;text-align:center;top:384.37px;font-size:9.6px;line-height:11px;color:#000;letter-spacing:-0.25px;">0,10</div>
<div class="t" style="left:793.3px;width:30px;text-align:right;top:316.07px;font-size:9.6px;line-height:11px;color:#000;letter-spacing:-0.25px;">0,20</div>
<div class="t" style="left:873.5px;width:30px;text-align:center;top:384.37px;font-size:9.6px;line-height:11px;color:#000;letter-spacing:-0.25px;">0,20</div>
<div class="t" style="left:793.3px;width:30px;text-align:right;top:287.07px;font-size:9.6px;line-height:11px;color:#000;letter-spacing:-0.25px;">0,30</div>
<div class="t" style="left:902.5px;width:30px;text-align:center;top:384.37px;font-size:9.6px;line-height:11px;color:#000;letter-spacing:-0.25px;">0,30</div>
<div class="t" style="left:793.3px;width:30px;text-align:right;top:258.07px;font-size:9.6px;line-height:11px;color:#000;letter-spacing:-0.25px;">0,40</div>
<div class="t" style="left:930.5px;width:30px;text-align:center;top:384.37px;font-size:9.6px;line-height:11px;color:#000;letter-spacing:-0.25px;">0,40</div>
<div class="t" style="left:793.3px;width:30px;text-align:right;top:230.07px;font-size:9.6px;line-height:11px;color:#000;letter-spacing:-0.25px;">0,50</div>
<div class="t" style="left:959.5px;width:30px;text-align:center;top:384.37px;font-size:9.6px;line-height:11px;color:#000;letter-spacing:-0.25px;">0,50</div>
<div class="t" style="left:793.3px;width:30px;text-align:right;top:201.07px;font-size:9.6px;line-height:11px;color:#000;letter-spacing:-0.25px;">0,60</div>
<div class="t" style="left:988.5px;width:30px;text-align:center;top:384.37px;font-size:9.6px;line-height:11px;color:#000;letter-spacing:-0.25px;">0,60</div>
<div class="t" style="left:793.3px;width:30px;text-align:right;top:172.07px;font-size:9.6px;line-height:11px;color:#000;letter-spacing:-0.25px;">0,70</div>
<div class="t" style="left:1016.5px;width:30px;text-align:center;top:384.37px;font-size:9.6px;line-height:11px;color:#000;letter-spacing:-0.25px;">0,70</div>
<div class="t" style="left:793.3px;width:30px;text-align:right;top:143.07px;font-size:9.6px;line-height:11px;color:#000;letter-spacing:-0.25px;">0,80</div>
<div class="t" style="left:1045.5px;width:30px;text-align:center;top:384.37px;font-size:9.6px;line-height:11px;color:#000;letter-spacing:-0.25px;">0,80</div>
<div class="t" style="left:793.3px;width:30px;text-align:right;top:115.07px;font-size:9.6px;line-height:11px;color:#000;letter-spacing:-0.25px;">0,90</div>
<div class="t" style="left:1074.5px;width:30px;text-align:center;top:384.37px;font-size:9.6px;line-height:11px;color:#000;letter-spacing:-0.25px;">0,90</div>
<div class="a" style="left:961px;top:506px;width:73px;height:21px;background:#e1e1e1;border:1px solid #adadad;box-sizing:border-box;"></div><div class="t" style="left:961.0px;width:73px;text-align:center;top:510.62px;font-size:11.5px;line-height:13px;color:#000;">OK</div>
<div class="a" style="left:1042px;top:506px;width:73px;height:21px;background:#e1e1e1;border:1px solid #adadad;box-sizing:border-box;"></div><div class="t" style="left:1042.0px;width:73px;text-align:center;top:510.62px;font-size:11.5px;line-height:13px;color:#000;">Cancel</div>
</body></html>
